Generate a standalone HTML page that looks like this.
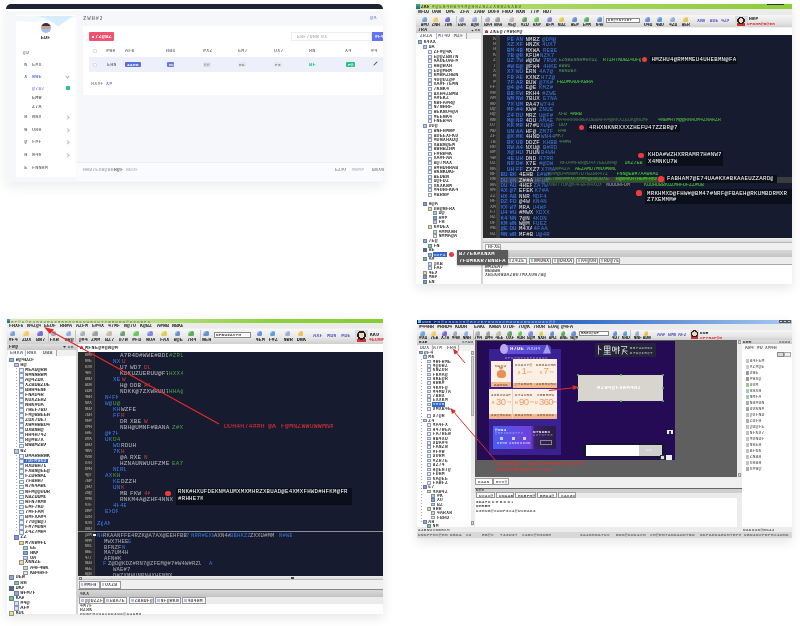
<!DOCTYPE html><html><head><meta charset="utf-8"><style>
html,body{margin:0;padding:0;background:#fff;width:800px;height:626px;overflow:hidden;font-family:"Liberation Sans",sans-serif}
#r{position:relative;width:800px;height:626px;overflow:hidden;will-change:transform}
#r div{position:absolute}
</style></head><body><div id="r">
<div style="left:6px;top:4px;width:377px;height:177.5px;background:#f6f7fb;box-shadow:0 5px 12px rgba(0,0,0,0.07);border-radius:6px 6px 0 0"></div>
<div style="left:6px;top:4px;width:377px;height:5px;background:#1f2433;border-radius:5px 5px 0 0"></div>
<div style="left:6px;top:9px;width:377px;height:1.5px;background:#ffffff"></div>
<div style="left:16px;top:15px;width:60px;height:162px;background:#ffffff"></div>
<svg style="position:absolute;left:16px;top:15.7px" width="60" height="14"><path d="M0 0 L60 0 L60 1 Q30 8 0 5 Z" fill="#f0f8fc"/><path d="M22 0 Q34 3 42 10.5 Q50 5 57 0 Z" fill="#d6ecfa"/></svg>
<div style="left:40.8px;top:23px;width:10px;height:10px;background:linear-gradient(#3a2a48 0 28%,#c8a088 28% 62%,#9cc0ee 62%);border-radius:50%"></div>
<div style="left:40.8px;top:35.55px;width:10.5px;height:5.40px;opacity:0.94;color:#222;font:bold 5.40px/5.40px 'Liberation Mono';letter-spacing:-0.04px;white-space:nowrap;overflow:hidden">EDF</div>
<div style="left:23px;top:50.73px;width:7px;height:4.68px;opacity:0.62;color:#444;font:bold 4.68px/4.68px 'Liberation Mono';letter-spacing:0.49px;white-space:nowrap;overflow:hidden">@D</div>
<div style="left:24.3px;top:62.64px;width:4px;height:5.04px;opacity:0.76;color:#444;font:bold 5.04px/5.04px 'Liberation Mono';letter-spacing:0.08px;white-space:nowrap;overflow:hidden">K</div>
<div style="left:32px;top:62.64px;width:11px;height:5.04px;opacity:0.69;color:#444;font:bold 5.04px/5.04px 'Liberation Mono';letter-spacing:0.18px;white-space:nowrap;overflow:hidden">E#X</div>
<div style="left:24.3px;top:75.14px;width:4px;height:5.04px;opacity:0.96;color:#5a6bd8;font:bold 5.04px/5.04px 'Liberation Mono';letter-spacing:0.08px;white-space:nowrap;overflow:hidden">X</div>
<div style="left:32px;top:75.14px;width:10px;height:5.04px;opacity:0.88;color:#5a6bd8;font:bold 5.04px/5.04px 'Liberation Mono';letter-spacing:0.18px;white-space:nowrap;overflow:hidden">WWE</div>
<div style="left:24.3px;top:115.14px;width:4px;height:5.04px;opacity:0.76;color:#444;font:bold 5.04px/5.04px 'Liberation Mono';letter-spacing:0.08px;white-space:nowrap;overflow:hidden">R</div>
<div style="left:32px;top:115.14px;width:9px;height:5.04px;opacity:0.69;color:#444;font:bold 5.04px/5.04px 'Liberation Mono';letter-spacing:0.18px;white-space:nowrap;overflow:hidden">NWX</div>
<div style="left:66px;top:116px;width:1.8px;height:1.8px;border-right:0.6px solid #bbb;border-bottom:0.6px solid #bbb;transform:rotate(-45deg)"></div>
<div style="left:24.3px;top:127.64px;width:4px;height:5.04px;opacity:0.76;color:#444;font:bold 5.04px/5.04px 'Liberation Mono';letter-spacing:0.08px;white-space:nowrap;overflow:hidden">W</div>
<div style="left:32px;top:127.64px;width:9px;height:5.04px;opacity:0.69;color:#444;font:bold 5.04px/5.04px 'Liberation Mono';letter-spacing:0.18px;white-space:nowrap;overflow:hidden">URH</div>
<div style="left:66px;top:128.5px;width:1.8px;height:1.8px;border-right:0.6px solid #bbb;border-bottom:0.6px solid #bbb;transform:rotate(-45deg)"></div>
<div style="left:24.3px;top:140.14px;width:4px;height:5.04px;opacity:0.76;color:#444;font:bold 5.04px/5.04px 'Liberation Mono';letter-spacing:0.08px;white-space:nowrap;overflow:hidden">@</div>
<div style="left:32px;top:140.14px;width:9px;height:5.04px;opacity:0.69;color:#444;font:bold 5.04px/5.04px 'Liberation Mono';letter-spacing:0.18px;white-space:nowrap;overflow:hidden">F#F</div>
<div style="left:66px;top:141px;width:1.8px;height:1.8px;border-right:0.6px solid #bbb;border-bottom:0.6px solid #bbb;transform:rotate(-45deg)"></div>
<div style="left:24.3px;top:153.14px;width:4px;height:5.04px;opacity:0.76;color:#444;font:bold 5.04px/5.04px 'Liberation Mono';letter-spacing:0.08px;white-space:nowrap;overflow:hidden">H</div>
<div style="left:32px;top:153.14px;width:9px;height:5.04px;opacity:0.69;color:#444;font:bold 5.04px/5.04px 'Liberation Mono';letter-spacing:0.18px;white-space:nowrap;overflow:hidden">W4K</div>
<div style="left:66px;top:154px;width:1.8px;height:1.8px;border-right:0.6px solid #bbb;border-bottom:0.6px solid #bbb;transform:rotate(-45deg)"></div>
<div style="left:24.3px;top:166.14px;width:4px;height:5.04px;opacity:0.76;color:#444;font:bold 5.04px/5.04px 'Liberation Mono';letter-spacing:0.08px;white-space:nowrap;overflow:hidden">E</div>
<div style="left:32px;top:166.14px;width:16px;height:5.04px;opacity:0.69;color:#444;font:bold 5.04px/5.04px 'Liberation Mono';letter-spacing:0.18px;white-space:nowrap;overflow:hidden">FNNHM</div>
<div style="left:66px;top:75.3px;width:2px;height:2px;border-right:0.7px solid #aaa;border-bottom:0.7px solid #aaa;transform:rotate(45deg)"></div>
<div style="left:32px;top:86.64px;width:13px;height:5.04px;opacity:0.75;color:#5a6bd8;font:bold 5.04px/5.04px 'Liberation Mono';letter-spacing:0.18px;white-space:nowrap;overflow:hidden">@7D7</div>
<div style="left:32px;top:95.64px;width:11px;height:5.04px;opacity:0.75;color:#333;font:bold 5.04px/5.04px 'Liberation Mono';letter-spacing:0.18px;white-space:nowrap;overflow:hidden">EMW</div>
<div style="left:32px;top:104.64px;width:11px;height:5.04px;opacity:0.75;color:#333;font:bold 5.04px/5.04px 'Liberation Mono';letter-spacing:0.18px;white-space:nowrap;overflow:hidden">Z7A</div>
<div style="left:66px;top:86px;width:3.5px;height:3.5px;background:#2fc48d;border-radius:0.5px"></div>
<div style="left:83px;top:15.96px;width:19px;height:5.76px;opacity:0.62;color:#333;font:bold 5.76px/5.76px 'Liberation Mono';letter-spacing:0.74px;white-space:nowrap;overflow:hidden">ZWH#Z</div>
<div style="left:370px;top:16.05px;width:9px;height:5.40px;opacity:0.62;color:#4a5bd0;font:bold 5.40px/5.40px 'Liberation Mono';letter-spacing:0.36px;white-space:nowrap;overflow:hidden">@X</div>
<div style="left:83px;top:26px;width:300px;height:69px;background:#ffffff"></div>
<div style="left:89px;top:32px;width:25px;height:9px;background:#f0516e;border-radius:1px"></div>
<div style="left:91.5px;top:35.5px;width:2px;height:2px;background:#fff;opacity:0.9"></div>
<div style="left:95px;top:34.55px;width:17px;height:5.40px;opacity:1.00;color:#fff;font:bold 5.40px/5.40px 'Liberation Mono';letter-spacing:0.16px;white-space:nowrap;overflow:hidden">7Z@BZ</div>
<div style="left:291px;top:32px;width:81px;height:9px;background:#fff;border:0.5px solid #eceef3;box-sizing:border-box"></div>
<div style="left:297px;top:34.73px;width:23px;height:4.68px;opacity:0.62;color:#888;font:bold 4.68px/4.68px 'Liberation Mono';letter-spacing:0.39px;white-space:nowrap;overflow:hidden">ERF7DRW</div>
<div style="left:321px;top:34.73px;width:7px;height:4.68px;opacity:0.50;color:#888;font:bold 4.68px/4.68px 'Liberation Mono';letter-spacing:0.39px;white-space:nowrap;overflow:hidden">WX</div>
<div style="left:372px;top:32px;width:11px;height:9px;background:#6373f2"></div>
<div style="left:375px;top:34.73px;width:9px;height:4.68px;opacity:0.94;color:#fff;font:bold 4.68px/4.68px 'Liberation Mono';letter-spacing:0.19px;white-space:nowrap;overflow:hidden">#F4</div>
<div style="left:93px;top:48.5px;width:4px;height:4px;border:0.5px solid #ddd;border-radius:1px;box-sizing:border-box"></div>
<div style="left:106px;top:48.64px;width:9px;height:5.04px;opacity:0.62;color:#333;font:bold 5.04px/5.04px 'Liberation Mono';letter-spacing:0.18px;white-space:nowrap;overflow:hidden">#WH</div>
<div style="left:125px;top:48.64px;width:9px;height:5.04px;opacity:0.62;color:#333;font:bold 5.04px/5.04px 'Liberation Mono';letter-spacing:0.18px;white-space:nowrap;overflow:hidden">AFB</div>
<div style="left:166px;top:48.64px;width:9px;height:5.04px;opacity:0.62;color:#333;font:bold 5.04px/5.04px 'Liberation Mono';letter-spacing:0.18px;white-space:nowrap;overflow:hidden">HBU</div>
<div style="left:203px;top:48.64px;width:9px;height:5.04px;opacity:0.62;color:#333;font:bold 5.04px/5.04px 'Liberation Mono';letter-spacing:0.18px;white-space:nowrap;overflow:hidden">#XZ</div>
<div style="left:238px;top:48.64px;width:9px;height:5.04px;opacity:0.62;color:#333;font:bold 5.04px/5.04px 'Liberation Mono';letter-spacing:0.18px;white-space:nowrap;overflow:hidden">EM7</div>
<div style="left:274px;top:48.64px;width:9px;height:5.04px;opacity:0.62;color:#333;font:bold 5.04px/5.04px 'Liberation Mono';letter-spacing:0.18px;white-space:nowrap;overflow:hidden">UX7</div>
<div style="left:309px;top:48.64px;width:7px;height:5.04px;opacity:0.62;color:#333;font:bold 5.04px/5.04px 'Liberation Mono';letter-spacing:0.18px;white-space:nowrap;overflow:hidden">RN</div>
<div style="left:345px;top:48.64px;width:7px;height:5.04px;opacity:0.62;color:#333;font:bold 5.04px/5.04px 'Liberation Mono';letter-spacing:0.18px;white-space:nowrap;overflow:hidden">X4</div>
<div style="left:371px;top:48.64px;width:7px;height:5.04px;opacity:0.62;color:#333;font:bold 5.04px/5.04px 'Liberation Mono';letter-spacing:0.18px;white-space:nowrap;overflow:hidden">#4</div>
<div style="left:89px;top:57px;width:294px;height:15px;background:#edf0fa"></div>
<div style="left:93px;top:62.5px;width:4px;height:4px;border:0.5px solid #ddd;background:#fff;border-radius:1px;box-sizing:border-box"></div>
<div style="left:107px;top:62.64px;width:9px;height:5.04px;opacity:0.62;color:#333;font:bold 5.04px/5.04px 'Liberation Mono';letter-spacing:0.18px;white-space:nowrap;overflow:hidden">EHN</div>
<div style="left:125px;top:62px;width:16px;height:5px;background:#5a6de0;border-radius:1px"></div>
<div style="left:127px;top:63.12px;width:13px;height:4.32px;opacity:1.00;color:#fff;font:bold 4.32px/4.32px 'Liberation Mono';letter-spacing:0.41px;white-space:nowrap;overflow:hidden">4AHD</div>
<div style="left:167px;top:62px;width:7px;height:5px;background:#6a78e6;border-radius:1px"></div>
<div style="left:168.5px;top:63.12px;width:5px;height:4.32px;opacity:0.75;color:#fff;font:bold 4.32px/4.32px 'Liberation Mono';letter-spacing:-0.19px;white-space:nowrap;overflow:hidden">BD</div>
<div style="left:203px;top:62px;width:8px;height:5px;background:#e6e8ec"></div>
<div style="left:204px;top:63.12px;width:7px;height:4.32px;opacity:0.75;color:#666;font:bold 4.32px/4.32px 'Liberation Mono';letter-spacing:0.41px;white-space:nowrap;overflow:hidden">@@</div>
<div style="left:238px;top:62px;width:8px;height:5px;background:#e6e8ec"></div>
<div style="left:239px;top:63.12px;width:7px;height:4.32px;opacity:0.75;color:#666;font:bold 4.32px/4.32px 'Liberation Mono';letter-spacing:0.41px;white-space:nowrap;overflow:hidden">HK</div>
<div style="left:274px;top:62px;width:8px;height:5px;background:#e6e8ec"></div>
<div style="left:275px;top:63.12px;width:7px;height:4.32px;opacity:0.75;color:#666;font:bold 4.32px/4.32px 'Liberation Mono';letter-spacing:0.41px;white-space:nowrap;overflow:hidden">FZ</div>
<div style="left:309px;top:62.55px;width:8px;height:5.40px;opacity:1.00;color:#22c081;font:bold 5.40px/5.40px 'Liberation Mono';letter-spacing:0.16px;white-space:nowrap;overflow:hidden">BF</div>
<div style="left:346px;top:62px;width:9px;height:5px;background:#27c08b;border-radius:1px"></div>
<div style="left:348px;top:63.12px;width:6px;height:4.32px;opacity:1.00;color:#fff;font:bold 4.32px/4.32px 'Liberation Mono';letter-spacing:0.21px;white-space:nowrap;overflow:hidden">F@</div>
<div style="left:374.5px;top:61px;width:1px;height:5px;background:#444;transform:rotate(45deg)"></div>
<div style="left:91px;top:81.64px;width:12px;height:5.04px;opacity:0.62;color:#555;font:bold 5.04px/5.04px 'Liberation Mono';letter-spacing:0.18px;white-space:nowrap;overflow:hidden">HX#F</div>
<div style="left:106px;top:81.64px;width:7px;height:5.04px;opacity:0.75;color:#4a5bd0;font:bold 5.04px/5.04px 'Liberation Mono';letter-spacing:0.18px;white-space:nowrap;overflow:hidden">X#</div>
<div style="left:76px;top:162px;width:307px;height:19px;background:#fafbfe"></div>
<div style="left:76px;top:162px;width:307px;height:0.6px;background:#eceef4"></div>
<div style="left:83px;top:167.73px;width:31px;height:4.68px;opacity:0.50;color:#666;font:bold 4.68px/4.68px 'Liberation Mono';letter-spacing:0.29px;white-space:nowrap;overflow:hidden">HWD7EXW@BH</div>
<div style="left:114px;top:167.73px;width:10px;height:4.68px;opacity:0.75;color:#333;font:bold 4.68px/4.68px 'Liberation Mono';letter-spacing:0.29px;white-space:nowrap;overflow:hidden">R@F</div>
<div style="left:126px;top:167.73px;width:13px;height:4.68px;opacity:0.50;color:#888;font:bold 4.68px/4.68px 'Liberation Mono';letter-spacing:0.29px;white-space:nowrap;overflow:hidden">NBUF</div>
<div style="left:335px;top:167.73px;width:11px;height:4.68px;opacity:0.62;color:#555;font:bold 4.68px/4.68px 'Liberation Mono';letter-spacing:0.29px;white-space:nowrap;overflow:hidden">EZ#X</div>
<div style="left:352px;top:167.73px;width:13px;height:4.68px;opacity:0.50;color:#888;font:bold 4.68px/4.68px 'Liberation Mono';letter-spacing:0.29px;white-space:nowrap;overflow:hidden">MNM#</div>
<div style="left:372px;top:167.73px;width:12px;height:4.68px;opacity:0.62;color:#555;font:bold 4.68px/4.68px 'Liberation Mono';letter-spacing:0.29px;white-space:nowrap;overflow:hidden">BNXW</div>
<div style="left:416px;top:3.5px;width:376px;height:280.5px;background:#f0f0f0;box-shadow:0 4px 12px rgba(0,0,0,0.10);border-radius:3px 3px 2px 2px"></div>
<div style="left:416px;top:3.5px;width:376px;height:5.5px;background:linear-gradient(90deg,#b9dc78 0%,#a6d65a 40%,#8dcc3a 100%)"></div>
<div style="left:416px;top:3.5px;width:4px;height:5.5px;background:linear-gradient(#4aa3a8,#1c6c74)"></div>
<div style="left:421px;top:4.78px;width:8px;height:4.50px;opacity:1.00;color:#222;font:bold 4.50px/4.50px 'Liberation Mono';letter-spacing:0.30px;white-space:nowrap;overflow:hidden">ZKR</div>
<div style="left:432px;top:4.78px;width:91px;height:4.50px;opacity:0.56;color:#2a3a10;font:bold 4.50px/4.50px 'Liberation Mono';letter-spacing:0.90px;white-space:nowrap;overflow:hidden">#@EN4HB44M@HRZWZZXNWZKXBU</div>
<div style="left:767px;top:3.5px;width:17px;height:1.3px;background:#2a3a2a"></div>
<div style="left:416px;top:9px;width:376px;height:6px;background:#ebebeb"></div>
<div style="left:418px;top:10.44px;width:11px;height:5.04px;opacity:0.94;color:#111;font:bold 5.04px/5.04px 'Liberation Mono';letter-spacing:-0.02px;white-space:nowrap;overflow:hidden">WFDZ</div>
<div style="left:432px;top:10.44px;width:10px;height:5.04px;opacity:0.94;color:#111;font:bold 5.04px/5.04px 'Liberation Mono';letter-spacing:-0.02px;white-space:nowrap;overflow:hidden">UAW</div>
<div style="left:446px;top:10.44px;width:10px;height:5.04px;opacity:0.94;color:#111;font:bold 5.04px/5.04px 'Liberation Mono';letter-spacing:-0.02px;white-space:nowrap;overflow:hidden">D#E</div>
<div style="left:460px;top:10.44px;width:10px;height:5.04px;opacity:0.94;color:#111;font:bold 5.04px/5.04px 'Liberation Mono';letter-spacing:-0.02px;white-space:nowrap;overflow:hidden">ZFA</div>
<div style="left:474px;top:10.44px;width:11px;height:5.04px;opacity:0.94;color:#111;font:bold 5.04px/5.04px 'Liberation Mono';letter-spacing:-0.02px;white-space:nowrap;overflow:hidden">ZAHA</div>
<div style="left:488px;top:10.44px;width:11px;height:5.04px;opacity:0.94;color:#111;font:bold 5.04px/5.04px 'Liberation Mono';letter-spacing:-0.02px;white-space:nowrap;overflow:hidden">DUFW</div>
<div style="left:502px;top:10.44px;width:11px;height:5.04px;opacity:0.94;color:#111;font:bold 5.04px/5.04px 'Liberation Mono';letter-spacing:-0.02px;white-space:nowrap;overflow:hidden">FWXX</div>
<div style="left:516px;top:10.44px;width:10px;height:5.04px;opacity:0.94;color:#111;font:bold 5.04px/5.04px 'Liberation Mono';letter-spacing:-0.02px;white-space:nowrap;overflow:hidden">NXN</div>
<div style="left:530px;top:10.44px;width:10px;height:5.04px;opacity:0.94;color:#111;font:bold 5.04px/5.04px 'Liberation Mono';letter-spacing:-0.02px;white-space:nowrap;overflow:hidden">77#</div>
<div style="left:543px;top:10.44px;width:9px;height:5.04px;opacity:0.94;color:#111;font:bold 5.04px/5.04px 'Liberation Mono';letter-spacing:-0.02px;white-space:nowrap;overflow:hidden">HD7</div>
<div style="left:416px;top:15px;width:376px;height:12px;background:linear-gradient(#f7f7f7,#e2e2e2 70%,#d0d0d0)"></div>
<div style="left:421.5px;top:16.8px;width:5px;height:5px;background:linear-gradient(135deg,#fff 0%,#5b8fd6 45%,#5b8fd6 100%);opacity:0.8;border-radius:1.5px"></div>
<div style="left:420.5px;top:22.68px;width:8px;height:4.86px;opacity:0.94;color:#111;font:bold 4.86px/4.86px 'Liberation Mono';letter-spacing:-0.12px;white-space:nowrap;overflow:hidden">W#U</div>
<div style="left:432.5px;top:16.8px;width:5px;height:5px;background:linear-gradient(135deg,#fff 0%,#f2c14e 45%,#f2c14e 100%);opacity:0.8;border-radius:1.5px"></div>
<div style="left:431.5px;top:22.68px;width:8px;height:4.86px;opacity:0.94;color:#111;font:bold 4.86px/4.86px 'Liberation Mono';letter-spacing:-0.12px;white-space:nowrap;overflow:hidden">ZNH</div>
<div style="left:445.0px;top:16.8px;width:5px;height:5px;background:linear-gradient(135deg,#fff 0%,#5a4fc0 45%,#5a4fc0 100%);opacity:0.8;border-radius:1.5px"></div>
<div style="left:444.0px;top:22.68px;width:8px;height:4.86px;opacity:0.94;color:#111;font:bold 4.86px/4.86px 'Liberation Mono';letter-spacing:-0.12px;white-space:nowrap;overflow:hidden">7WK</div>
<div style="left:458.5px;top:16.8px;width:5px;height:5px;background:linear-gradient(135deg,#fff 0%,#8a9ab8 45%,#8a9ab8 100%);opacity:0.8;border-radius:1.5px"></div>
<div style="left:457.5px;top:22.68px;width:8px;height:4.86px;opacity:0.94;color:#111;font:bold 4.86px/4.86px 'Liberation Mono';letter-spacing:-0.12px;white-space:nowrap;overflow:hidden">EB4</div>
<div style="left:471.5px;top:16.8px;width:5px;height:5px;background:linear-gradient(135deg,#fff 0%,#7aa0d8 45%,#7aa0d8 100%);opacity:0.8;border-radius:1.5px"></div>
<div style="left:470.5px;top:22.68px;width:8px;height:4.86px;opacity:0.94;color:#111;font:bold 4.86px/4.86px 'Liberation Mono';letter-spacing:-0.12px;white-space:nowrap;overflow:hidden">B@W</div>
<div style="left:485.0px;top:16.8px;width:5px;height:5px;background:linear-gradient(135deg,#fff 0%,#9aa0a8 45%,#9aa0a8 100%);opacity:0.8;border-radius:1.5px"></div>
<div style="left:484.0px;top:22.68px;width:8px;height:4.86px;opacity:0.94;color:#111;font:bold 4.86px/4.86px 'Liberation Mono';letter-spacing:-0.12px;white-space:nowrap;overflow:hidden">BA4</div>
<div style="left:495.0px;top:16.8px;width:5px;height:5px;background:linear-gradient(135deg,#fff 0%,#8c8c8c 45%,#8c8c8c 100%);opacity:0.8;border-radius:1.5px"></div>
<div style="left:494.0px;top:22.68px;width:8px;height:4.86px;opacity:0.94;color:#111;font:bold 4.86px/4.86px 'Liberation Mono';letter-spacing:-0.12px;white-space:nowrap;overflow:hidden">WAR</div>
<div style="left:508.5px;top:16.8px;width:5px;height:5px;background:linear-gradient(135deg,#fff 0%,#b9b39a 45%,#b9b39a 100%);opacity:0.8;border-radius:1.5px"></div>
<div style="left:507.5px;top:22.68px;width:8px;height:4.86px;opacity:0.94;color:#111;font:bold 4.86px/4.86px 'Liberation Mono';letter-spacing:-0.12px;white-space:nowrap;overflow:hidden">#E@</div>
<div style="left:521.5px;top:16.8px;width:5px;height:5px;background:linear-gradient(135deg,#fff 0%,#4c8a4c 45%,#4c8a4c 100%);opacity:0.8;border-radius:1.5px"></div>
<div style="left:520.5px;top:22.68px;width:8px;height:4.86px;opacity:0.94;color:#111;font:bold 4.86px/4.86px 'Liberation Mono';letter-spacing:-0.12px;white-space:nowrap;overflow:hidden">#ZD</div>
<div style="left:533.5px;top:16.8px;width:5px;height:5px;background:linear-gradient(135deg,#fff 0%,#4dbd3a 45%,#4dbd3a 100%);opacity:0.8;border-radius:1.5px"></div>
<div style="left:532.5px;top:22.68px;width:8px;height:4.86px;opacity:0.94;color:#111;font:bold 4.86px/4.86px 'Liberation Mono';letter-spacing:-0.12px;white-space:nowrap;overflow:hidden">RX#</div>
<div style="left:546.5px;top:16.8px;width:5px;height:5px;background:linear-gradient(135deg,#fff 0%,#6a6fd8 45%,#6a6fd8 100%);opacity:0.8;border-radius:1.5px"></div>
<div style="left:545.5px;top:22.68px;width:8px;height:4.86px;opacity:0.94;color:#111;font:bold 4.86px/4.86px 'Liberation Mono';letter-spacing:-0.12px;white-space:nowrap;overflow:hidden">BFM</div>
<div style="left:558.5px;top:16.8px;width:5px;height:5px;background:linear-gradient(135deg,#fff 0%,#d8c832 45%,#d8c832 100%);opacity:0.8;border-radius:1.5px"></div>
<div style="left:557.5px;top:22.68px;width:8px;height:4.86px;opacity:0.94;color:#111;font:bold 4.86px/4.86px 'Liberation Mono';letter-spacing:-0.12px;white-space:nowrap;overflow:hidden">KDZ</div>
<div style="left:571.5px;top:16.8px;width:5px;height:5px;background:linear-gradient(135deg,#fff 0%,#4a78c8 45%,#4a78c8 100%);opacity:0.8;border-radius:1.5px"></div>
<div style="left:570.5px;top:22.68px;width:8px;height:4.86px;opacity:0.94;color:#111;font:bold 4.86px/4.86px 'Liberation Mono';letter-spacing:-0.12px;white-space:nowrap;overflow:hidden">WE#</div>
<div style="left:583.5px;top:16.8px;width:5px;height:5px;background:linear-gradient(135deg,#fff 0%,#3a9a3a 45%,#3a9a3a 100%);opacity:0.8;border-radius:1.5px"></div>
<div style="left:582.5px;top:22.68px;width:8px;height:4.86px;opacity:0.94;color:#111;font:bold 4.86px/4.86px 'Liberation Mono';letter-spacing:-0.12px;white-space:nowrap;overflow:hidden">E#M</div>
<div style="left:596.5px;top:16.8px;width:5px;height:5px;background:linear-gradient(135deg,#fff 0%,#4a78c8 45%,#4a78c8 100%);opacity:0.8;border-radius:1.5px"></div>
<div style="left:595.5px;top:22.68px;width:8px;height:4.86px;opacity:0.94;color:#111;font:bold 4.86px/4.86px 'Liberation Mono';letter-spacing:-0.12px;white-space:nowrap;overflow:hidden">K4W</div>
<div style="left:645.0px;top:16.8px;width:5px;height:5px;background:linear-gradient(135deg,#fff 0%,#4a78d8 45%,#4a78d8 100%);opacity:0.8;border-radius:1.5px"></div>
<div style="left:644.0px;top:22.68px;width:8px;height:4.86px;opacity:0.94;color:#111;font:bold 4.86px/4.86px 'Liberation Mono';letter-spacing:-0.12px;white-space:nowrap;overflow:hidden">U4D</div>
<div style="left:656.5px;top:16.8px;width:5px;height:5px;background:linear-gradient(135deg,#fff 0%,#3a88d8 45%,#3a88d8 100%);opacity:0.8;border-radius:1.5px"></div>
<div style="left:655.5px;top:22.68px;width:8px;height:4.86px;opacity:0.94;color:#111;font:bold 4.86px/4.86px 'Liberation Mono';letter-spacing:-0.12px;white-space:nowrap;overflow:hidden">4BU</div>
<div style="left:670.0px;top:16.8px;width:5px;height:5px;background:linear-gradient(135deg,#fff 0%,#8aa0c0 45%,#8aa0c0 100%);opacity:0.8;border-radius:1.5px"></div>
<div style="left:669.0px;top:22.68px;width:8px;height:4.86px;opacity:0.94;color:#111;font:bold 4.86px/4.86px 'Liberation Mono';letter-spacing:-0.12px;white-space:nowrap;overflow:hidden">4ZD</div>
<div style="left:682.5px;top:16.8px;width:5px;height:5px;background:linear-gradient(135deg,#fff 0%,#e8b832 45%,#e8b832 100%);opacity:0.8;border-radius:1.5px"></div>
<div style="left:681.5px;top:22.68px;width:8px;height:4.86px;opacity:0.94;color:#111;font:bold 4.86px/4.86px 'Liberation Mono';letter-spacing:-0.12px;white-space:nowrap;overflow:hidden">WER</div>
<div style="left:456px;top:16px;width:0.8px;height:10px;background:#c4c4c4"></div>
<div style="left:481px;top:16px;width:0.8px;height:10px;background:#c4c4c4"></div>
<div style="left:603px;top:16px;width:0.8px;height:10px;background:#c4c4c4"></div>
<div style="left:606px;top:17.5px;width:34px;height:5px;background:#fff;border:0.6px solid #888;box-sizing:border-box"></div>
<div style="left:608px;top:19.00px;width:25px;height:3.60px;opacity:0.88;color:#222;font:bold 3.60px/3.60px 'Liberation Mono';letter-spacing:0.54px;white-space:nowrap;overflow:hidden">KH@7N7XE7</div>
<div style="left:697px;top:18.64px;width:8px;height:5.04px;opacity:0.75;color:#2a2ab8;font:bold 5.04px/5.04px 'Liberation Mono';letter-spacing:-0.02px;white-space:nowrap;overflow:hidden">XNW</div>
<div style="left:709.5px;top:18.64px;width:8px;height:5.04px;opacity:0.75;color:#2a2ab8;font:bold 5.04px/5.04px 'Liberation Mono';letter-spacing:-0.02px;white-space:nowrap;overflow:hidden">BUE</div>
<div style="left:721px;top:18.64px;width:8px;height:5.04px;opacity:0.75;color:#2a2ab8;font:bold 5.04px/5.04px 'Liberation Mono';letter-spacing:-0.02px;white-space:nowrap;overflow:hidden">4ZM</div>
<div style="left:734.5px;top:16px;width:13px;height:11px;background:#d8dbe0"></div>
<div style="left:737px;top:17px;width:8px;height:9px;background:radial-gradient(circle at 50% 40%,#f2d6c0 0 35%,#222 36% 55%,transparent 56%),linear-gradient(transparent 70%,#d03030 70%)"></div>
<div style="left:749px;top:16.73px;width:10px;height:4.68px;opacity:1.00;color:#111;font:bold 4.68px/4.68px 'Liberation Mono';letter-spacing:0.29px;white-space:nowrap;overflow:hidden">HW#</div>
<div style="left:747px;top:21.82px;width:29px;height:4.32px;opacity:1.00;color:#e02828;font:bold 4.32px/4.32px 'Liberation Mono';letter-spacing:0.21px;white-space:nowrap;overflow:hidden">UFDMR@B@EH</div>
<div style="left:416px;top:27px;width:65px;height:6px;background:linear-gradient(#e0e0e0,#c8c8c8)"></div>
<div style="left:418px;top:28.23px;width:10px;height:4.68px;opacity:0.94;color:#111;font:bold 4.68px/4.68px 'Liberation Mono';letter-spacing:0.29px;white-space:nowrap;overflow:hidden">7RA</div>
<div style="left:471px;top:29.5px;width:3px;height:2px;background:#333;clip-path:polygon(0 0,100% 0,50% 100%)"></div>
<div style="left:475px;top:28.32px;width:7px;height:4.32px;opacity:0.75;color:#333;font:bold 4.32px/4.32px 'Liberation Mono';letter-spacing:0.21px;white-space:nowrap;overflow:hidden">ED</div>
<div style="left:416px;top:33px;width:65px;height:6px;background:#f0f0f0"></div>
<div style="left:417px;top:33px;width:19px;height:6px;background:#fff"></div>
<div style="left:436px;top:33px;width:15px;height:6px;background:#fff;border-left:0.5px solid #bbb;border-right:0.5px solid #bbb"></div>
<div style="left:452px;top:33px;width:14px;height:6px;background:#f5f5f5;border-right:0.5px solid #aaa"></div>
<div style="left:420px;top:34.23px;width:13px;height:4.68px;opacity:0.75;color:#234;font:bold 4.68px/4.68px 'Liberation Mono';letter-spacing:0.29px;white-space:nowrap;overflow:hidden">ZRZA</div>
<div style="left:438px;top:34.23px;width:12px;height:4.68px;opacity:0.75;color:#235;font:bold 4.68px/4.68px 'Liberation Mono';letter-spacing:0.29px;white-space:nowrap;overflow:hidden">M74U</div>
<div style="left:454px;top:34.23px;width:11px;height:4.68px;opacity:0.75;color:#333;font:bold 4.68px/4.68px 'Liberation Mono';letter-spacing:0.29px;white-space:nowrap;overflow:hidden">MZF</div>
<div style="left:416px;top:39px;width:65px;height:245px;background:#fff"></div>
<div style="left:481px;top:27px;width:2px;height:257px;background:#d4d4d4"></div>
<div style="left:417.5px;top:40.2px;width:4.5px;height:4.05px;background:#7fa0d8;opacity:0.8;border:0.5px solid rgba(40,60,120,0.6);box-sizing:border-box"></div>
<div style="left:423.5px;top:40.14px;width:12px;height:5.04px;opacity:0.85;color:#111;font:bold 5.04px/5.04px 'Liberation Mono';letter-spacing:0.08px;white-space:nowrap;overflow:hidden">K4XX</div>
<div style="left:422.5px;top:45.2px;width:4.5px;height:4.05px;background:#aabde0;opacity:0.8;border:0.5px solid rgba(40,60,120,0.6);box-sizing:border-box"></div>
<div style="left:428.5px;top:45.14px;width:6px;height:5.04px;opacity:0.85;color:#111;font:bold 5.04px/5.04px 'Liberation Mono';letter-spacing:0.08px;white-space:nowrap;overflow:hidden">DA</div>
<div style="left:427.5px;top:50.2px;width:4.5px;height:4.05px;background:#e8eef8;opacity:0.8;border:0.5px solid rgba(40,60,120,0.6);box-sizing:border-box"></div>
<div style="left:433.5px;top:50.14px;width:18px;height:5.04px;opacity:0.85;color:#111;font:bold 5.04px/5.04px 'Liberation Mono';letter-spacing:0.08px;white-space:nowrap;overflow:hidden">ZF#@4K</div>
<div style="left:427.5px;top:54.800000000000004px;width:4.5px;height:4.05px;background:#e8eef8;opacity:0.8;border:0.5px solid rgba(40,60,120,0.6);box-sizing:border-box"></div>
<div style="left:433.5px;top:54.74px;width:24px;height:5.04px;opacity:0.85;color:#111;font:bold 5.04px/5.04px 'Liberation Mono';letter-spacing:0.08px;white-space:nowrap;overflow:hidden">E@@ZBN7N</div>
<div style="left:427.5px;top:59.400000000000006px;width:4.5px;height:4.05px;background:#e8eef8;opacity:0.8;border:0.5px solid rgba(40,60,120,0.6);box-sizing:border-box"></div>
<div style="left:433.5px;top:59.34px;width:24px;height:5.04px;opacity:0.85;color:#111;font:bold 5.04px/5.04px 'Liberation Mono';letter-spacing:0.08px;white-space:nowrap;overflow:hidden">AAUEUAF#</div>
<div style="left:427.5px;top:64.0px;width:4.5px;height:4.05px;background:#e8eef8;opacity:0.8;border:0.5px solid rgba(40,60,120,0.6);box-sizing:border-box"></div>
<div style="left:433.5px;top:63.94px;width:18px;height:5.04px;opacity:0.85;color:#111;font:bold 5.04px/5.04px 'Liberation Mono';letter-spacing:0.08px;white-space:nowrap;overflow:hidden">HH@WXH</div>
<div style="left:427.5px;top:68.60000000000001px;width:4.5px;height:4.05px;background:#e8eef8;opacity:0.8;border:0.5px solid rgba(40,60,120,0.6);box-sizing:border-box"></div>
<div style="left:433.5px;top:68.54px;width:20px;height:5.04px;opacity:0.85;color:#111;font:bold 5.04px/5.04px 'Liberation Mono';letter-spacing:0.08px;white-space:nowrap;overflow:hidden">EU@MRM</div>
<div style="left:427.5px;top:73.2px;width:4.5px;height:4.05px;background:#e8eef8;opacity:0.8;border:0.5px solid rgba(40,60,120,0.6);box-sizing:border-box"></div>
<div style="left:433.5px;top:73.14px;width:24px;height:5.04px;opacity:0.85;color:#111;font:bold 5.04px/5.04px 'Liberation Mono';letter-spacing:0.08px;white-space:nowrap;overflow:hidden">KMWAZHBN</div>
<div style="left:427.5px;top:77.8px;width:4.5px;height:4.05px;background:#e8eef8;opacity:0.8;border:0.5px solid rgba(40,60,120,0.6);box-sizing:border-box"></div>
<div style="left:433.5px;top:77.74px;width:22px;height:5.04px;opacity:0.85;color:#111;font:bold 5.04px/5.04px 'Liberation Mono';letter-spacing:0.08px;white-space:nowrap;overflow:hidden">4U@UZ@#</div>
<div style="left:427.5px;top:82.39999999999999px;width:4.5px;height:4.05px;background:#e8eef8;opacity:0.8;border:0.5px solid rgba(40,60,120,0.6);box-sizing:border-box"></div>
<div style="left:433.5px;top:82.34px;width:24px;height:5.04px;opacity:0.85;color:#111;font:bold 5.04px/5.04px 'Liberation Mono';letter-spacing:0.08px;white-space:nowrap;overflow:hidden">XA#F7EMN</div>
<div style="left:427.5px;top:87.0px;width:4.5px;height:4.05px;background:#e8eef8;opacity:0.8;border:0.5px solid rgba(40,60,120,0.6);box-sizing:border-box"></div>
<div style="left:433.5px;top:86.94px;width:16px;height:5.04px;opacity:0.85;color:#111;font:bold 5.04px/5.04px 'Liberation Mono';letter-spacing:0.08px;white-space:nowrap;overflow:hidden">7KNK4</div>
<div style="left:427.5px;top:91.60000000000001px;width:4.5px;height:4.05px;background:#e8eef8;opacity:0.8;border:0.5px solid rgba(40,60,120,0.6);box-sizing:border-box"></div>
<div style="left:433.5px;top:91.54px;width:24px;height:5.04px;opacity:0.85;color:#111;font:bold 5.04px/5.04px 'Liberation Mono';letter-spacing:0.08px;white-space:nowrap;overflow:hidden">BXH4ZBMB</div>
<div style="left:427.5px;top:96.2px;width:4.5px;height:4.05px;background:#e8eef8;opacity:0.8;border:0.5px solid rgba(40,60,120,0.6);box-sizing:border-box"></div>
<div style="left:433.5px;top:96.14px;width:16px;height:5.04px;opacity:0.85;color:#111;font:bold 5.04px/5.04px 'Liberation Mono';letter-spacing:0.08px;white-space:nowrap;overflow:hidden">A#EKZ</div>
<div style="left:427.5px;top:100.8px;width:4.5px;height:4.05px;background:#e8eef8;opacity:0.8;border:0.5px solid rgba(40,60,120,0.6);box-sizing:border-box"></div>
<div style="left:433.5px;top:100.74px;width:22px;height:5.04px;opacity:0.85;color:#111;font:bold 5.04px/5.04px 'Liberation Mono';letter-spacing:0.08px;white-space:nowrap;overflow:hidden">KWFA#R@</div>
<div style="left:427.5px;top:105.39999999999999px;width:4.5px;height:4.05px;background:#e8eef8;opacity:0.8;border:0.5px solid rgba(40,60,120,0.6);box-sizing:border-box"></div>
<div style="left:433.5px;top:105.34px;width:20px;height:5.04px;opacity:0.85;color:#111;font:bold 5.04px/5.04px 'Liberation Mono';letter-spacing:0.08px;white-space:nowrap;overflow:hidden">N7NHRF</div>
<div style="left:427.5px;top:110.0px;width:4.5px;height:4.05px;background:#e8eef8;opacity:0.8;border:0.5px solid rgba(40,60,120,0.6);box-sizing:border-box"></div>
<div style="left:433.5px;top:109.94px;width:24px;height:5.04px;opacity:0.85;color:#111;font:bold 5.04px/5.04px 'Liberation Mono';letter-spacing:0.08px;white-space:nowrap;overflow:hidden">WEKNU4@A</div>
<div style="left:427.5px;top:114.6px;width:4.5px;height:4.05px;background:#e8eef8;opacity:0.8;border:0.5px solid rgba(40,60,120,0.6);box-sizing:border-box"></div>
<div style="left:433.5px;top:114.54px;width:18px;height:5.04px;opacity:0.85;color:#111;font:bold 5.04px/5.04px 'Liberation Mono';letter-spacing:0.08px;white-space:nowrap;overflow:hidden">#EENK4</div>
<div style="left:427.5px;top:119.2px;width:4.5px;height:4.05px;background:#e8eef8;opacity:0.8;border:0.5px solid rgba(40,60,120,0.6);box-sizing:border-box"></div>
<div style="left:433.5px;top:119.14px;width:18px;height:5.04px;opacity:0.85;color:#111;font:bold 5.04px/5.04px 'Liberation Mono';letter-spacing:0.08px;white-space:nowrap;overflow:hidden">FNEB4A</div>
<div style="left:422.5px;top:124.2px;width:4.5px;height:4.05px;background:#aabde0;opacity:0.8;border:0.5px solid rgba(40,60,120,0.6);box-sizing:border-box"></div>
<div style="left:428.5px;top:124.14px;width:9px;height:5.04px;opacity:0.85;color:#111;font:bold 5.04px/5.04px 'Liberation Mono';letter-spacing:0.08px;white-space:nowrap;overflow:hidden">UU@</div>
<div style="left:427.5px;top:129.2px;width:4.5px;height:4.05px;background:#e8eef8;opacity:0.8;border:0.5px solid rgba(40,60,120,0.6);box-sizing:border-box"></div>
<div style="left:433.5px;top:129.14px;width:22px;height:5.04px;opacity:0.85;color:#111;font:bold 5.04px/5.04px 'Liberation Mono';letter-spacing:0.08px;white-space:nowrap;overflow:hidden">WNFHMW#</div>
<div style="left:427.5px;top:133.75px;width:4.5px;height:4.05px;background:#e8eef8;opacity:0.8;border:0.5px solid rgba(40,60,120,0.6);box-sizing:border-box"></div>
<div style="left:433.5px;top:133.69px;width:24px;height:5.04px;opacity:0.85;color:#111;font:bold 5.04px/5.04px 'Liberation Mono';letter-spacing:0.08px;white-space:nowrap;overflow:hidden">BUEEXFKU</div>
<div style="left:427.5px;top:138.29999999999998px;width:4.5px;height:4.05px;background:#e8eef8;opacity:0.8;border:0.5px solid rgba(40,60,120,0.6);box-sizing:border-box"></div>
<div style="left:433.5px;top:138.24px;width:24px;height:5.04px;opacity:0.85;color:#111;font:bold 5.04px/5.04px 'Liberation Mono';letter-spacing:0.08px;white-space:nowrap;overflow:hidden">MUNXHXD@</div>
<div style="left:427.5px;top:142.85px;width:4.5px;height:4.05px;background:#e8eef8;opacity:0.8;border:0.5px solid rgba(40,60,120,0.6);box-sizing:border-box"></div>
<div style="left:433.5px;top:142.79px;width:22px;height:5.04px;opacity:0.85;color:#111;font:bold 5.04px/5.04px 'Liberation Mono';letter-spacing:0.08px;white-space:nowrap;overflow:hidden">XBBN@EM</div>
<div style="left:427.5px;top:147.39999999999998px;width:4.5px;height:4.05px;background:#e8eef8;opacity:0.8;border:0.5px solid rgba(40,60,120,0.6);box-sizing:border-box"></div>
<div style="left:433.5px;top:147.34px;width:22px;height:5.04px;opacity:0.85;color:#111;font:bold 5.04px/5.04px 'Liberation Mono';letter-spacing:0.08px;white-space:nowrap;overflow:hidden">BWHBZHM</div>
<div style="left:427.5px;top:151.95px;width:4.5px;height:4.05px;background:#e8eef8;opacity:0.8;border:0.5px solid rgba(40,60,120,0.6);box-sizing:border-box"></div>
<div style="left:433.5px;top:151.89px;width:18px;height:5.04px;opacity:0.85;color:#111;font:bold 5.04px/5.04px 'Liberation Mono';letter-spacing:0.08px;white-space:nowrap;overflow:hidden">F#RW4K</div>
<div style="left:427.5px;top:156.5px;width:4.5px;height:4.05px;background:#e8eef8;opacity:0.8;border:0.5px solid rgba(40,60,120,0.6);box-sizing:border-box"></div>
<div style="left:433.5px;top:156.44px;width:18px;height:5.04px;opacity:0.85;color:#111;font:bold 5.04px/5.04px 'Liberation Mono';letter-spacing:0.08px;white-space:nowrap;overflow:hidden">XA#FAA</div>
<div style="left:427.5px;top:161.04999999999998px;width:4.5px;height:4.05px;background:#e8eef8;opacity:0.8;border:0.5px solid rgba(40,60,120,0.6);box-sizing:border-box"></div>
<div style="left:433.5px;top:160.99px;width:18px;height:5.04px;opacity:0.85;color:#111;font:bold 5.04px/5.04px 'Liberation Mono';letter-spacing:0.08px;white-space:nowrap;overflow:hidden">B@7MXX</div>
<div style="left:427.5px;top:165.6px;width:4.5px;height:4.05px;background:#e8eef8;opacity:0.8;border:0.5px solid rgba(40,60,120,0.6);box-sizing:border-box"></div>
<div style="left:433.5px;top:165.54px;width:24px;height:5.04px;opacity:0.85;color:#111;font:bold 5.04px/5.04px 'Liberation Mono';letter-spacing:0.08px;white-space:nowrap;overflow:hidden">R#HDHRAB</div>
<div style="left:427.5px;top:170.14999999999998px;width:4.5px;height:4.05px;background:#e8eef8;opacity:0.8;border:0.5px solid rgba(40,60,120,0.6);box-sizing:border-box"></div>
<div style="left:433.5px;top:170.09px;width:22px;height:5.04px;opacity:0.85;color:#111;font:bold 5.04px/5.04px 'Liberation Mono';letter-spacing:0.08px;white-space:nowrap;overflow:hidden">RKNKDKF</div>
<div style="left:427.5px;top:174.7px;width:4.5px;height:4.05px;background:#e8eef8;opacity:0.8;border:0.5px solid rgba(40,60,120,0.6);box-sizing:border-box"></div>
<div style="left:433.5px;top:174.64px;width:16px;height:5.04px;opacity:0.85;color:#111;font:bold 5.04px/5.04px 'Liberation Mono';letter-spacing:0.08px;white-space:nowrap;overflow:hidden">BEDBN</div>
<div style="left:427.5px;top:179.25px;width:4.5px;height:4.05px;background:#e8eef8;opacity:0.8;border:0.5px solid rgba(40,60,120,0.6);box-sizing:border-box"></div>
<div style="left:433.5px;top:179.19px;width:16px;height:5.04px;opacity:0.85;color:#111;font:bold 5.04px/5.04px 'Liberation Mono';letter-spacing:0.08px;white-space:nowrap;overflow:hidden">D@FDZ</div>
<div style="left:427.5px;top:183.79999999999998px;width:4.5px;height:4.05px;background:#e8eef8;opacity:0.8;border:0.5px solid rgba(40,60,120,0.6);box-sizing:border-box"></div>
<div style="left:433.5px;top:183.74px;width:18px;height:5.04px;opacity:0.85;color:#111;font:bold 5.04px/5.04px 'Liberation Mono';letter-spacing:0.08px;white-space:nowrap;overflow:hidden">XKXKWM</div>
<div style="left:427.5px;top:188.35px;width:4.5px;height:4.05px;background:#e8eef8;opacity:0.8;border:0.5px solid rgba(40,60,120,0.6);box-sizing:border-box"></div>
<div style="left:433.5px;top:188.29px;width:24px;height:5.04px;opacity:0.85;color:#111;font:bold 5.04px/5.04px 'Liberation Mono';letter-spacing:0.08px;white-space:nowrap;overflow:hidden">M4UHFKK4</div>
<div style="left:427.5px;top:192.89999999999998px;width:4.5px;height:4.05px;background:#e8eef8;opacity:0.8;border:0.5px solid rgba(40,60,120,0.6);box-sizing:border-box"></div>
<div style="left:433.5px;top:192.84px;width:16px;height:5.04px;opacity:0.85;color:#111;font:bold 5.04px/5.04px 'Liberation Mono';letter-spacing:0.08px;white-space:nowrap;overflow:hidden">#BRN#</div>
<div style="left:422.5px;top:201.7px;width:4.5px;height:4.05px;background:#7a7ad8;opacity:0.8;border:0.5px solid rgba(40,60,120,0.6);box-sizing:border-box"></div>
<div style="left:428.5px;top:201.64px;width:9px;height:5.04px;opacity:0.85;color:#111;font:bold 5.04px/5.04px 'Liberation Mono';letter-spacing:0.08px;white-space:nowrap;overflow:hidden">H@A</div>
<div style="left:427.5px;top:206.7px;width:4.5px;height:4.05px;background:#f0d070;opacity:0.8;border:0.5px solid rgba(40,60,120,0.6);box-sizing:border-box"></div>
<div style="left:433.5px;top:206.64px;width:21px;height:5.04px;opacity:0.85;color:#111;font:bold 5.04px/5.04px 'Liberation Mono';letter-spacing:0.08px;white-space:nowrap;overflow:hidden">UH@NFRX</div>
<div style="left:432.5px;top:211.2px;width:4.5px;height:4.05px;background:#9ad090;opacity:0.8;border:0.5px solid rgba(40,60,120,0.6);box-sizing:border-box"></div>
<div style="left:438.5px;top:211.14px;width:7px;height:5.04px;opacity:0.85;color:#111;font:bold 5.04px/5.04px 'Liberation Mono';letter-spacing:0.08px;white-space:nowrap;overflow:hidden">D@</div>
<div style="left:432.5px;top:215.7px;width:4.5px;height:4.05px;background:#6a8ad8;opacity:0.8;border:0.5px solid rgba(40,60,120,0.6);box-sizing:border-box"></div>
<div style="left:438.5px;top:215.64px;width:8px;height:5.04px;opacity:0.85;color:#111;font:bold 5.04px/5.04px 'Liberation Mono';letter-spacing:0.08px;white-space:nowrap;overflow:hidden">R#M</div>
<div style="left:432.5px;top:220.2px;width:4.5px;height:4.05px;background:#c0c8e0;opacity:0.8;border:0.5px solid rgba(40,60,120,0.6);box-sizing:border-box"></div>
<div style="left:438.5px;top:220.14px;width:7px;height:5.04px;opacity:0.85;color:#111;font:bold 5.04px/5.04px 'Liberation Mono';letter-spacing:0.08px;white-space:nowrap;overflow:hidden">FH</div>
<div style="left:427.5px;top:225.2px;width:4.5px;height:4.05px;background:#f0d070;opacity:0.8;border:0.5px solid rgba(40,60,120,0.6);box-sizing:border-box"></div>
<div style="left:433.5px;top:225.14px;width:17px;height:5.04px;opacity:0.85;color:#111;font:bold 5.04px/5.04px 'Liberation Mono';letter-spacing:0.08px;white-space:nowrap;overflow:hidden">K#DEX</div>
<div style="left:432.5px;top:229.7px;width:4.5px;height:4.05px;background:#b8e0b0;opacity:0.8;border:0.5px solid rgba(40,60,120,0.6);box-sizing:border-box"></div>
<div style="left:438.5px;top:229.64px;width:19px;height:5.04px;opacity:0.85;color:#111;font:bold 5.04px/5.04px 'Liberation Mono';letter-spacing:0.08px;white-space:nowrap;overflow:hidden">AMMXWH</div>
<div style="left:432.5px;top:234.2px;width:4.5px;height:4.05px;background:#f0e8c0;opacity:0.8;border:0.5px solid rgba(40,60,120,0.6);box-sizing:border-box"></div>
<div style="left:438.5px;top:234.14px;width:19px;height:5.04px;opacity:0.85;color:#111;font:bold 5.04px/5.04px 'Liberation Mono';letter-spacing:0.08px;white-space:nowrap;overflow:hidden">NMMA@A</div>
<div style="left:422.5px;top:239.0px;width:4.5px;height:4.05px;background:#7a90c8;opacity:0.8;border:0.5px solid rgba(40,60,120,0.6);box-sizing:border-box"></div>
<div style="left:428.5px;top:238.94px;width:9px;height:5.04px;opacity:0.85;color:#111;font:bold 5.04px/5.04px 'Liberation Mono';letter-spacing:0.08px;white-space:nowrap;overflow:hidden">7E@</div>
<div style="left:427.5px;top:243.7px;width:4.5px;height:4.05px;background:#6ac070;opacity:0.8;border:0.5px solid rgba(40,60,120,0.6);box-sizing:border-box"></div>
<div style="left:433.5px;top:243.64px;width:7px;height:5.04px;opacity:0.85;color:#111;font:bold 5.04px/5.04px 'Liberation Mono';letter-spacing:0.08px;white-space:nowrap;overflow:hidden">FN</div>
<div style="left:422.5px;top:248.2px;width:4.5px;height:4.05px;background:#304070;opacity:0.8;border:0.5px solid rgba(40,60,120,0.6);box-sizing:border-box"></div>
<div style="left:428.5px;top:248.14px;width:7px;height:5.04px;opacity:0.85;color:#111;font:bold 5.04px/5.04px 'Liberation Mono';letter-spacing:0.08px;white-space:nowrap;overflow:hidden">RE</div>
<div style="left:427.5px;top:252.7px;width:4.5px;height:4.05px;background:#7a90c8;opacity:0.8;border:0.5px solid rgba(40,60,120,0.6);box-sizing:border-box"></div>
<div style="left:432.8px;top:252.2px;width:14.5px;height:4.4px;background:#3468c8"></div>
<div style="left:433.5px;top:252.92px;width:14px;height:4.32px;opacity:0.75;color:#fff;font:bold 4.32px/4.32px 'Liberation Mono';letter-spacing:0.51px;white-space:nowrap;overflow:hidden">XUF4</div>
<div style="left:422.5px;top:257.2px;width:4.5px;height:4.05px;background:#50b060;opacity:0.8;border:0.5px solid rgba(40,60,120,0.6);box-sizing:border-box"></div>
<div style="left:428.5px;top:257.14px;width:7px;height:5.04px;opacity:0.85;color:#111;font:bold 5.04px/5.04px 'Liberation Mono';letter-spacing:0.08px;white-space:nowrap;overflow:hidden">A#</div>
<div style="left:427.5px;top:261.7px;width:4.5px;height:4.05px;background:#d0d8f0;opacity:0.8;border:0.5px solid rgba(40,60,120,0.6);box-sizing:border-box"></div>
<div style="left:433.5px;top:261.64px;width:9px;height:5.04px;opacity:0.85;color:#111;font:bold 5.04px/5.04px 'Liberation Mono';letter-spacing:0.08px;white-space:nowrap;overflow:hidden">@XB</div>
<div style="left:427.5px;top:266.2px;width:4.5px;height:4.05px;background:#d0d8f0;opacity:0.8;border:0.5px solid rgba(40,60,120,0.6);box-sizing:border-box"></div>
<div style="left:433.5px;top:266.14px;width:9px;height:5.04px;opacity:0.85;color:#111;font:bold 5.04px/5.04px 'Liberation Mono';letter-spacing:0.08px;white-space:nowrap;overflow:hidden">FAF</div>
<div style="left:422.5px;top:270.7px;width:4.5px;height:4.05px;background:#f0d070;opacity:0.8;border:0.5px solid rgba(40,60,120,0.6);box-sizing:border-box"></div>
<div style="left:428.5px;top:270.64px;width:8px;height:5.04px;opacity:0.85;color:#111;font:bold 5.04px/5.04px 'Liberation Mono';letter-spacing:0.08px;white-space:nowrap;overflow:hidden">4EX</div>
<div style="left:422.5px;top:275.2px;width:4.5px;height:4.05px;background:#6a7ad8;opacity:0.8;border:0.5px solid rgba(40,60,120,0.6);box-sizing:border-box"></div>
<div style="left:428.5px;top:275.14px;width:8px;height:5.04px;opacity:0.85;color:#111;font:bold 5.04px/5.04px 'Liberation Mono';letter-spacing:0.08px;white-space:nowrap;overflow:hidden">MHA</div>
<div style="left:422.5px;top:279.7px;width:4.5px;height:4.05px;background:#50a060;opacity:0.8;border:0.5px solid rgba(40,60,120,0.6);box-sizing:border-box"></div>
<div style="left:428.5px;top:279.64px;width:7px;height:5.04px;opacity:0.85;color:#111;font:bold 5.04px/5.04px 'Liberation Mono';letter-spacing:0.08px;white-space:nowrap;overflow:hidden">EN</div>
<div style="left:420.5px;top:44px;width:0.5px;height:200px;background:repeating-linear-gradient(#aaa 0 0.5px,transparent 0.5px 1.5px)"></div>
<div style="left:425.5px;top:49px;width:0.5px;height:150px;background:repeating-linear-gradient(#aaa 0 0.5px,transparent 0.5px 1.5px)"></div>
<div style="left:483px;top:27px;width:309px;height:8px;background:#f0f0f0"></div>
<div style="left:483px;top:28.3px;width:309px;height:6.5px;background:#fff"></div>
<div style="left:484.5px;top:30px;width:3px;height:3px;background:#d02828;border-radius:50% 50% 0 0"></div>
<div style="left:490px;top:29.73px;width:33px;height:4.68px;opacity:0.94;color:#222;font:bold 4.68px/4.68px 'Liberation Mono';letter-spacing:0.49px;white-space:nowrap;overflow:hidden">ZKE@7#WR#@</div>
<div style="left:483px;top:35px;width:17px;height:203px;background:#2c2c2d"></div>
<div style="left:496px;top:35px;width:4px;height:203px;background:#3b3b3a"></div>
<div style="left:500px;top:35px;width:292px;height:203px;background:#161b2f"></div>
<div style="left:500px;top:176.92000000000002px;width:292px;height:5.6px;background:#3a3c40"></div>
<div style="left:545px;top:177.32px;width:63px;height:4.6px;background:#2b4a2b"></div>
<div style="left:615px;top:177.32px;width:42px;height:4.6px;background:#2f5a25"></div>
<div style="left:493px;top:36.54px;width:3px;height:5.04px;opacity:0.56;color:#c0c0c0;font:bold 5.04px/5.04px 'Liberation Mono';letter-spacing:-0.32px;white-space:nowrap;overflow:hidden">K</div>
<div style="left:506.5px;top:36.400000000000006px;width:17px;height:4px;background:rgba(30,70,170,0.22)"></div>
<div style="left:507px;top:36.66px;width:8px;height:5.76px;opacity:1.00;color:#3f7fe6;font:normal 5.76px/5.76px 'Liberation Mono';letter-spacing:0.04px;white-space:nowrap;overflow:hidden">FE</div>
<div style="left:516px;top:36.66px;width:8px;height:5.76px;opacity:1.00;color:#3f7fe6;font:normal 5.76px/5.76px 'Liberation Mono';letter-spacing:0.04px;white-space:nowrap;overflow:hidden">AN</div>
<div style="left:525.5px;top:36.66px;width:15px;height:5.76px;opacity:1.00;color:#e6e6e6;font:normal 5.76px/5.76px 'Liberation Mono';letter-spacing:0.14px;white-space:nowrap;overflow:hidden">NMBZ</div>
<div style="left:542.0px;top:36.66px;width:16px;height:5.76px;opacity:0.94;color:#3f7fe6;font:normal 5.76px/5.76px 'Liberation Mono';letter-spacing:0.14px;white-space:nowrap;overflow:hidden">@DM@</div>
<div style="left:493px;top:41.96px;width:3px;height:5.04px;opacity:0.56;color:#c0c0c0;font:bold 5.04px/5.04px 'Liberation Mono';letter-spacing:-0.32px;white-space:nowrap;overflow:hidden">R</div>
<div style="left:506.5px;top:41.82000000000001px;width:17px;height:4px;background:rgba(30,70,170,0.22)"></div>
<div style="left:507px;top:42.08px;width:8px;height:5.76px;opacity:1.00;color:#3f7fe6;font:normal 5.76px/5.76px 'Liberation Mono';letter-spacing:0.04px;white-space:nowrap;overflow:hidden">XZ</div>
<div style="left:516px;top:42.08px;width:8px;height:5.76px;opacity:1.00;color:#3f7fe6;font:normal 5.76px/5.76px 'Liberation Mono';letter-spacing:0.04px;white-space:nowrap;overflow:hidden">XF</div>
<div style="left:525.5px;top:42.08px;width:15px;height:5.76px;opacity:1.00;color:#e6e6e6;font:normal 5.76px/5.76px 'Liberation Mono';letter-spacing:0.14px;white-space:nowrap;overflow:hidden">HNZK</div>
<div style="left:542.0px;top:42.08px;width:15px;height:5.76px;opacity:0.94;color:#3f7fe6;font:normal 5.76px/5.76px 'Liberation Mono';letter-spacing:0.14px;white-space:nowrap;overflow:hidden">4UX7</div>
<div style="left:493px;top:47.38px;width:3px;height:5.04px;opacity:0.56;color:#c0c0c0;font:bold 5.04px/5.04px 'Liberation Mono';letter-spacing:-0.32px;white-space:nowrap;overflow:hidden">H</div>
<div style="left:506.5px;top:47.24000000000001px;width:17px;height:4px;background:rgba(30,70,170,0.22)"></div>
<div style="left:507px;top:47.50px;width:8px;height:5.76px;opacity:1.00;color:#3f7fe6;font:normal 5.76px/5.76px 'Liberation Mono';letter-spacing:0.04px;white-space:nowrap;overflow:hidden">BM</div>
<div style="left:516px;top:47.50px;width:8px;height:5.76px;opacity:1.00;color:#3f7fe6;font:normal 5.76px/5.76px 'Liberation Mono';letter-spacing:0.04px;white-space:nowrap;overflow:hidden">4B</div>
<div style="left:525.5px;top:47.50px;width:16px;height:5.76px;opacity:1.00;color:#e6e6e6;font:normal 5.76px/5.76px 'Liberation Mono';letter-spacing:0.14px;white-space:nowrap;overflow:hidden">MXWA</div>
<div style="left:543.0px;top:47.50px;width:16px;height:5.76px;opacity:0.94;color:#3f7fe6;font:normal 5.76px/5.76px 'Liberation Mono';letter-spacing:0.14px;white-space:nowrap;overflow:hidden">REBE</div>
<div style="left:493px;top:52.80px;width:3px;height:5.04px;opacity:0.56;color:#c0c0c0;font:bold 5.04px/5.04px 'Liberation Mono';letter-spacing:-0.32px;white-space:nowrap;overflow:hidden">K</div>
<div style="left:506.5px;top:52.660000000000004px;width:17px;height:4px;background:rgba(30,70,170,0.22)"></div>
<div style="left:507px;top:52.92px;width:8px;height:5.76px;opacity:1.00;color:#3f7fe6;font:normal 5.76px/5.76px 'Liberation Mono';letter-spacing:0.04px;white-space:nowrap;overflow:hidden">7B</div>
<div style="left:516px;top:52.92px;width:8px;height:5.76px;opacity:1.00;color:#3f7fe6;font:normal 5.76px/5.76px 'Liberation Mono';letter-spacing:0.04px;white-space:nowrap;overflow:hidden">@R</div>
<div style="left:525.5px;top:52.92px;width:13px;height:5.76px;opacity:1.00;color:#e6e6e6;font:normal 5.76px/5.76px 'Liberation Mono';letter-spacing:0.14px;white-space:nowrap;overflow:hidden">KFU#</div>
<div style="left:540.0px;top:52.92px;width:14px;height:5.76px;opacity:0.94;color:#3f7fe6;font:normal 5.76px/5.76px 'Liberation Mono';letter-spacing:0.14px;white-space:nowrap;overflow:hidden">NZK7</div>
<div style="left:493px;top:58.22px;width:3px;height:5.04px;opacity:0.56;color:#c0c0c0;font:bold 5.04px/5.04px 'Liberation Mono';letter-spacing:-0.32px;white-space:nowrap;overflow:hidden">Z</div>
<div style="left:506.5px;top:58.080000000000005px;width:17px;height:4px;background:rgba(30,70,170,0.22)"></div>
<div style="left:507px;top:58.34px;width:8px;height:5.76px;opacity:1.00;color:#3f7fe6;font:normal 5.76px/5.76px 'Liberation Mono';letter-spacing:0.04px;white-space:nowrap;overflow:hidden">UZ</div>
<div style="left:516px;top:58.34px;width:8px;height:5.76px;opacity:1.00;color:#3f7fe6;font:normal 5.76px/5.76px 'Liberation Mono';letter-spacing:0.04px;white-space:nowrap;overflow:hidden">7W</div>
<div style="left:525.5px;top:58.34px;width:16px;height:5.76px;opacity:1.00;color:#e6e6e6;font:normal 5.76px/5.76px 'Liberation Mono';letter-spacing:0.14px;white-space:nowrap;overflow:hidden">W@DW</div>
<div style="left:543.0px;top:58.34px;width:15px;height:5.76px;opacity:0.94;color:#3f7fe6;font:normal 5.76px/5.76px 'Liberation Mono';letter-spacing:0.14px;white-space:nowrap;overflow:hidden">7RUK</div>
<div style="left:558.5px;top:58.22px;width:39px;height:5.04px;opacity:0.88;color:#5aa05a;font:normal 5.04px/5.04px 'Liberation Mono';letter-spacing:-0.02px;white-space:nowrap;overflow:hidden">EZNBENNR#RXUZ</div>
<div style="left:603px;top:58.22px;width:38px;height:5.04px;opacity:1.00;color:#4fd040;font:normal 5.04px/5.04px 'Liberation Mono';letter-spacing:-0.02px;white-space:nowrap;overflow:hidden">R7ZH7NDBZ4UF@</div>
<div style="left:493px;top:63.64px;width:3px;height:5.04px;opacity:0.56;color:#c0c0c0;font:bold 5.04px/5.04px 'Liberation Mono';letter-spacing:-0.32px;white-space:nowrap;overflow:hidden">7</div>
<div style="left:506.5px;top:63.500000000000014px;width:17px;height:4px;background:rgba(30,70,170,0.22)"></div>
<div style="left:507px;top:63.76px;width:8px;height:5.76px;opacity:1.00;color:#3f7fe6;font:normal 5.76px/5.76px 'Liberation Mono';letter-spacing:0.04px;white-space:nowrap;overflow:hidden">#W</div>
<div style="left:516px;top:63.76px;width:8px;height:5.76px;opacity:1.00;color:#3f7fe6;font:normal 5.76px/5.76px 'Liberation Mono';letter-spacing:0.04px;white-space:nowrap;overflow:hidden">E@</div>
<div style="left:525.5px;top:63.76px;width:16px;height:5.76px;opacity:1.00;color:#e6e6e6;font:normal 5.76px/5.76px 'Liberation Mono';letter-spacing:0.14px;white-space:nowrap;overflow:hidden">@FW4</div>
<div style="left:543.0px;top:63.76px;width:14px;height:5.76px;opacity:0.94;color:#3f7fe6;font:normal 5.76px/5.76px 'Liberation Mono';letter-spacing:0.14px;white-space:nowrap;overflow:hidden">4HKE</div>
<div style="left:558.5px;top:63.64px;width:11px;height:5.04px;opacity:0.88;color:#5aa05a;font:normal 5.04px/5.04px 'Liberation Mono';letter-spacing:-0.02px;white-space:nowrap;overflow:hidden">BBWU</div>
<div style="left:493px;top:69.06px;width:3px;height:5.04px;opacity:0.56;color:#c0c0c0;font:bold 5.04px/5.04px 'Liberation Mono';letter-spacing:-0.32px;white-space:nowrap;overflow:hidden">X</div>
<div style="left:506.5px;top:68.92px;width:17px;height:4px;background:rgba(30,70,170,0.22)"></div>
<div style="left:507px;top:69.18px;width:8px;height:5.76px;opacity:1.00;color:#3f7fe6;font:normal 5.76px/5.76px 'Liberation Mono';letter-spacing:0.04px;white-space:nowrap;overflow:hidden">X7</div>
<div style="left:516px;top:69.18px;width:8px;height:5.76px;opacity:1.00;color:#3f7fe6;font:normal 5.76px/5.76px 'Liberation Mono';letter-spacing:0.04px;white-space:nowrap;overflow:hidden">WU</div>
<div style="left:525.5px;top:69.18px;width:12px;height:5.76px;opacity:1.00;color:#e6e6e6;font:normal 5.76px/5.76px 'Liberation Mono';letter-spacing:0.14px;white-space:nowrap;overflow:hidden">ERN</div>
<div style="left:539.0px;top:69.18px;width:15px;height:5.76px;opacity:0.94;color:#3f7fe6;font:normal 5.76px/5.76px 'Liberation Mono';letter-spacing:0.14px;white-space:nowrap;overflow:hidden">4A7@</div>
<div style="left:558.5px;top:69.06px;width:19px;height:5.04px;opacity:0.88;color:#5aa05a;font:normal 5.04px/5.04px 'Liberation Mono';letter-spacing:-0.02px;white-space:nowrap;overflow:hidden">HBNDBX</div>
<div style="left:493px;top:74.48px;width:3px;height:5.04px;opacity:0.56;color:#c0c0c0;font:bold 5.04px/5.04px 'Liberation Mono';letter-spacing:-0.32px;white-space:nowrap;overflow:hidden">M</div>
<div style="left:506.5px;top:74.34px;width:17px;height:4px;background:rgba(30,70,170,0.22)"></div>
<div style="left:507px;top:74.60px;width:8px;height:5.76px;opacity:1.00;color:#3f7fe6;font:normal 5.76px/5.76px 'Liberation Mono';letter-spacing:0.04px;white-space:nowrap;overflow:hidden">FB</div>
<div style="left:516px;top:74.60px;width:8px;height:5.76px;opacity:1.00;color:#3f7fe6;font:normal 5.76px/5.76px 'Liberation Mono';letter-spacing:0.04px;white-space:nowrap;overflow:hidden">AE</div>
<div style="left:525.5px;top:74.60px;width:14px;height:5.76px;opacity:1.00;color:#e6e6e6;font:normal 5.76px/5.76px 'Liberation Mono';letter-spacing:0.14px;white-space:nowrap;overflow:hidden">KXNZ</div>
<div style="left:541.0px;top:74.60px;width:14px;height:5.76px;opacity:0.94;color:#3f7fe6;font:normal 5.76px/5.76px 'Liberation Mono';letter-spacing:0.14px;white-space:nowrap;overflow:hidden">H7Z@</div>
<div style="left:493px;top:79.90px;width:3px;height:5.04px;opacity:0.56;color:#c0c0c0;font:bold 5.04px/5.04px 'Liberation Mono';letter-spacing:-0.32px;white-space:nowrap;overflow:hidden">#</div>
<div style="left:506.5px;top:79.76px;width:17px;height:4px;background:rgba(30,70,170,0.22)"></div>
<div style="left:507px;top:80.02px;width:8px;height:5.76px;opacity:1.00;color:#3f7fe6;font:normal 5.76px/5.76px 'Liberation Mono';letter-spacing:0.04px;white-space:nowrap;overflow:hidden">7F</div>
<div style="left:516px;top:80.02px;width:8px;height:5.76px;opacity:1.00;color:#3f7fe6;font:normal 5.76px/5.76px 'Liberation Mono';letter-spacing:0.04px;white-space:nowrap;overflow:hidden">AR</div>
<div style="left:525.5px;top:80.02px;width:12px;height:5.76px;opacity:1.00;color:#e6e6e6;font:normal 5.76px/5.76px 'Liberation Mono';letter-spacing:0.14px;white-space:nowrap;overflow:hidden">BUW</div>
<div style="left:539.0px;top:80.02px;width:16px;height:5.76px;opacity:0.94;color:#3f7fe6;font:normal 5.76px/5.76px 'Liberation Mono';letter-spacing:0.14px;white-space:nowrap;overflow:hidden">@7K#</div>
<div style="left:557px;top:79.90px;width:36px;height:5.04px;opacity:1.00;color:#4fd040;font:normal 5.04px/5.04px 'Liberation Mono';letter-spacing:-0.02px;white-space:nowrap;overflow:hidden">FBZ#KADFKBRA</div>
<div style="left:490px;top:85.32px;width:6.3px;height:5.04px;opacity:0.56;color:#c0c0c0;font:bold 5.04px/5.04px 'Liberation Mono';letter-spacing:-0.32px;white-space:nowrap;overflow:hidden">FF</div>
<div style="left:506.5px;top:85.18px;width:17px;height:4px;background:rgba(30,70,170,0.22)"></div>
<div style="left:507px;top:85.44px;width:8px;height:5.76px;opacity:1.00;color:#3f7fe6;font:normal 5.76px/5.76px 'Liberation Mono';letter-spacing:0.04px;white-space:nowrap;overflow:hidden">@4</div>
<div style="left:516px;top:85.44px;width:8px;height:5.76px;opacity:1.00;color:#3f7fe6;font:normal 5.76px/5.76px 'Liberation Mono';letter-spacing:0.04px;white-space:nowrap;overflow:hidden">@4</div>
<div style="left:525.5px;top:85.44px;width:12px;height:5.76px;opacity:1.00;color:#e6e6e6;font:normal 5.76px/5.76px 'Liberation Mono';letter-spacing:0.14px;white-space:nowrap;overflow:hidden">E@E</div>
<div style="left:539.0px;top:85.44px;width:16px;height:5.76px;opacity:0.94;color:#3f7fe6;font:normal 5.76px/5.76px 'Liberation Mono';letter-spacing:0.14px;white-space:nowrap;overflow:hidden">KMZ#</div>
<div style="left:490px;top:90.74px;width:6.3px;height:5.04px;opacity:0.56;color:#c0c0c0;font:bold 5.04px/5.04px 'Liberation Mono';letter-spacing:-0.32px;white-space:nowrap;overflow:hidden">#W</div>
<div style="left:506.5px;top:90.60000000000001px;width:17px;height:4px;background:rgba(30,70,170,0.22)"></div>
<div style="left:507px;top:90.86px;width:8px;height:5.76px;opacity:1.00;color:#3f7fe6;font:normal 5.76px/5.76px 'Liberation Mono';letter-spacing:0.04px;white-space:nowrap;overflow:hidden">BB</div>
<div style="left:516px;top:90.86px;width:8px;height:5.76px;opacity:1.00;color:#3f7fe6;font:normal 5.76px/5.76px 'Liberation Mono';letter-spacing:0.04px;white-space:nowrap;overflow:hidden">FW</div>
<div style="left:525.5px;top:90.86px;width:15px;height:5.76px;opacity:1.00;color:#e6e6e6;font:normal 5.76px/5.76px 'Liberation Mono';letter-spacing:0.14px;white-space:nowrap;overflow:hidden">RKH4</div>
<div style="left:542.0px;top:90.86px;width:15px;height:5.76px;opacity:0.94;color:#3f7fe6;font:normal 5.76px/5.76px 'Liberation Mono';letter-spacing:0.14px;white-space:nowrap;overflow:hidden">#ZWE</div>
<div style="left:490px;top:96.16px;width:6.3px;height:5.04px;opacity:0.56;color:#c0c0c0;font:bold 5.04px/5.04px 'Liberation Mono';letter-spacing:-0.32px;white-space:nowrap;overflow:hidden">AM</div>
<div style="left:506.5px;top:96.02px;width:17px;height:4px;background:rgba(30,70,170,0.22)"></div>
<div style="left:507px;top:96.28px;width:8px;height:5.76px;opacity:1.00;color:#3f7fe6;font:normal 5.76px/5.76px 'Liberation Mono';letter-spacing:0.04px;white-space:nowrap;overflow:hidden">WM</div>
<div style="left:516px;top:96.28px;width:8px;height:5.76px;opacity:1.00;color:#3f7fe6;font:normal 5.76px/5.76px 'Liberation Mono';letter-spacing:0.04px;white-space:nowrap;overflow:hidden">NW</div>
<div style="left:525.5px;top:96.28px;width:16px;height:5.76px;opacity:1.00;color:#e6e6e6;font:normal 5.76px/5.76px 'Liberation Mono';letter-spacing:0.14px;white-space:nowrap;overflow:hidden">7BUX</div>
<div style="left:543.0px;top:96.28px;width:16px;height:5.76px;opacity:0.94;color:#3f7fe6;font:normal 5.76px/5.76px 'Liberation Mono';letter-spacing:0.14px;white-space:nowrap;overflow:hidden">E7NA</div>
<div style="left:490px;top:101.58px;width:6.3px;height:5.04px;opacity:0.56;color:#c0c0c0;font:bold 5.04px/5.04px 'Liberation Mono';letter-spacing:-0.32px;white-space:nowrap;overflow:hidden">WU</div>
<div style="left:506.5px;top:101.44px;width:17px;height:4px;background:rgba(30,70,170,0.22)"></div>
<div style="left:507px;top:101.70px;width:8px;height:5.76px;opacity:1.00;color:#3f7fe6;font:normal 5.76px/5.76px 'Liberation Mono';letter-spacing:0.04px;white-space:nowrap;overflow:hidden">7X</div>
<div style="left:516px;top:101.70px;width:8px;height:5.76px;opacity:1.00;color:#3f7fe6;font:normal 5.76px/5.76px 'Liberation Mono';letter-spacing:0.04px;white-space:nowrap;overflow:hidden">UM</div>
<div style="left:525.5px;top:101.70px;width:13px;height:5.76px;opacity:1.00;color:#e6e6e6;font:normal 5.76px/5.76px 'Liberation Mono';letter-spacing:0.14px;white-space:nowrap;overflow:hidden">RA47</div>
<div style="left:540.0px;top:101.70px;width:16px;height:5.76px;opacity:0.94;color:#3f7fe6;font:normal 5.76px/5.76px 'Liberation Mono';letter-spacing:0.14px;white-space:nowrap;overflow:hidden">W744</div>
<div style="left:490px;top:107.00px;width:6.3px;height:5.04px;opacity:0.56;color:#c0c0c0;font:bold 5.04px/5.04px 'Liberation Mono';letter-spacing:-0.32px;white-space:nowrap;overflow:hidden">D@</div>
<div style="left:506.5px;top:106.86px;width:17px;height:4px;background:rgba(30,70,170,0.22)"></div>
<div style="left:507px;top:107.12px;width:8px;height:5.76px;opacity:1.00;color:#3f7fe6;font:normal 5.76px/5.76px 'Liberation Mono';letter-spacing:0.04px;white-space:nowrap;overflow:hidden">MF</div>
<div style="left:516px;top:107.12px;width:8px;height:5.76px;opacity:1.00;color:#3f7fe6;font:normal 5.76px/5.76px 'Liberation Mono';letter-spacing:0.04px;white-space:nowrap;overflow:hidden">#4</div>
<div style="left:525.5px;top:107.12px;width:12px;height:5.76px;opacity:1.00;color:#e6e6e6;font:normal 5.76px/5.76px 'Liberation Mono';letter-spacing:0.14px;white-space:nowrap;overflow:hidden">KW#</div>
<div style="left:539.0px;top:107.12px;width:16px;height:5.76px;opacity:0.94;color:#3f7fe6;font:normal 5.76px/5.76px 'Liberation Mono';letter-spacing:0.14px;white-space:nowrap;overflow:hidden">ZNUE</div>
<div style="left:490px;top:112.42px;width:6.3px;height:5.04px;opacity:0.56;color:#c0c0c0;font:bold 5.04px/5.04px 'Liberation Mono';letter-spacing:-0.32px;white-space:nowrap;overflow:hidden">R@</div>
<div style="left:506.5px;top:112.28px;width:17px;height:4px;background:rgba(30,70,170,0.22)"></div>
<div style="left:507px;top:112.54px;width:8px;height:5.76px;opacity:1.00;color:#3f7fe6;font:normal 5.76px/5.76px 'Liberation Mono';letter-spacing:0.04px;white-space:nowrap;overflow:hidden">Z4</div>
<div style="left:516px;top:112.54px;width:8px;height:5.76px;opacity:1.00;color:#3f7fe6;font:normal 5.76px/5.76px 'Liberation Mono';letter-spacing:0.04px;white-space:nowrap;overflow:hidden">DU</div>
<div style="left:525.5px;top:112.54px;width:12px;height:5.76px;opacity:1.00;color:#e6e6e6;font:normal 5.76px/5.76px 'Liberation Mono';letter-spacing:0.14px;white-space:nowrap;overflow:hidden">MRZ</div>
<div style="left:539.0px;top:112.54px;width:14px;height:5.76px;opacity:0.94;color:#3f7fe6;font:normal 5.76px/5.76px 'Liberation Mono';letter-spacing:0.14px;white-space:nowrap;overflow:hidden">U@F#</div>
<div style="left:558px;top:112.42px;width:9px;height:5.04px;opacity:0.88;color:#5aa05a;font:normal 5.04px/5.04px 'Liberation Mono';letter-spacing:-0.02px;white-space:nowrap;overflow:hidden">XFB</div>
<div style="left:570px;top:112.42px;width:12px;height:5.04px;opacity:1.00;color:#4fd040;font:normal 5.04px/5.04px 'Liberation Mono';letter-spacing:-0.02px;white-space:nowrap;overflow:hidden">4NRB</div>
<div style="left:490px;top:117.84px;width:6.3px;height:5.04px;opacity:0.56;color:#c0c0c0;font:bold 5.04px/5.04px 'Liberation Mono';letter-spacing:-0.32px;white-space:nowrap;overflow:hidden">NN</div>
<div style="left:506.5px;top:117.7px;width:17px;height:4px;background:rgba(30,70,170,0.22)"></div>
<div style="left:507px;top:117.96px;width:8px;height:5.76px;opacity:1.00;color:#3f7fe6;font:normal 5.76px/5.76px 'Liberation Mono';letter-spacing:0.04px;white-space:nowrap;overflow:hidden">M@</div>
<div style="left:516px;top:117.96px;width:8px;height:5.76px;opacity:1.00;color:#3f7fe6;font:normal 5.76px/5.76px 'Liberation Mono';letter-spacing:0.04px;white-space:nowrap;overflow:hidden">NR</div>
<div style="left:525.5px;top:117.96px;width:12px;height:5.76px;opacity:1.00;color:#e6e6e6;font:normal 5.76px/5.76px 'Liberation Mono';letter-spacing:0.14px;white-space:nowrap;overflow:hidden">4DU</div>
<div style="left:539.0px;top:117.96px;width:14px;height:5.76px;opacity:0.94;color:#3f7fe6;font:normal 5.76px/5.76px 'Liberation Mono';letter-spacing:0.14px;white-space:nowrap;overflow:hidden">AMAE</div>
<div style="left:556px;top:117.84px;width:92px;height:5.04px;opacity:0.69;color:#5aa05a;font:normal 5.04px/5.04px 'Liberation Mono';letter-spacing:-0.02px;white-space:nowrap;overflow:hidden">MA4HRRWRWEKUEBAFR4@RKXZEUK@NUMR</div>
<div style="left:658px;top:117.84px;width:63px;height:5.04px;opacity:0.94;color:#4fd040;font:normal 5.04px/5.04px 'Liberation Mono';letter-spacing:-0.02px;white-space:nowrap;overflow:hidden">4NB#H7M@@RNAUM4ZNARZR</div>
<div style="left:490px;top:123.26px;width:6.3px;height:5.04px;opacity:0.56;color:#c0c0c0;font:bold 5.04px/5.04px 'Liberation Mono';letter-spacing:-0.32px;white-space:nowrap;overflow:hidden">U7</div>
<div style="left:506.5px;top:123.12px;width:17px;height:4px;background:rgba(30,70,170,0.22)"></div>
<div style="left:507px;top:123.38px;width:8px;height:5.76px;opacity:1.00;color:#3f7fe6;font:normal 5.76px/5.76px 'Liberation Mono';letter-spacing:0.04px;white-space:nowrap;overflow:hidden">KK</div>
<div style="left:516px;top:123.38px;width:8px;height:5.76px;opacity:1.00;color:#3f7fe6;font:normal 5.76px/5.76px 'Liberation Mono';letter-spacing:0.04px;white-space:nowrap;overflow:hidden">MR</div>
<div style="left:525.5px;top:123.38px;width:13px;height:5.76px;opacity:1.00;color:#e6e6e6;font:normal 5.76px/5.76px 'Liberation Mono';letter-spacing:0.14px;white-space:nowrap;overflow:hidden">H7#U</div>
<div style="left:540.0px;top:123.38px;width:16px;height:5.76px;opacity:0.94;color:#3f7fe6;font:normal 5.76px/5.76px 'Liberation Mono';letter-spacing:0.14px;white-space:nowrap;overflow:hidden">XU@F</div>
<div style="left:559px;top:123.26px;width:8px;height:5.04px;opacity:0.88;color:#5aa05a;font:normal 5.04px/5.04px 'Liberation Mono';letter-spacing:-0.02px;white-space:nowrap;overflow:hidden">DDX</div>
<div style="left:490px;top:128.68px;width:6.3px;height:5.04px;opacity:0.56;color:#c0c0c0;font:bold 5.04px/5.04px 'Liberation Mono';letter-spacing:-0.32px;white-space:nowrap;overflow:hidden">MD</div>
<div style="left:506.5px;top:128.54px;width:17px;height:4px;background:rgba(30,70,170,0.22)"></div>
<div style="left:507px;top:128.80px;width:8px;height:5.76px;opacity:1.00;color:#3f7fe6;font:normal 5.76px/5.76px 'Liberation Mono';letter-spacing:0.04px;white-space:nowrap;overflow:hidden">UN</div>
<div style="left:516px;top:128.80px;width:8px;height:5.76px;opacity:1.00;color:#3f7fe6;font:normal 5.76px/5.76px 'Liberation Mono';letter-spacing:0.04px;white-space:nowrap;overflow:hidden">AA</div>
<div style="left:525.5px;top:128.80px;width:12px;height:5.76px;opacity:1.00;color:#e6e6e6;font:normal 5.76px/5.76px 'Liberation Mono';letter-spacing:0.14px;white-space:nowrap;overflow:hidden">HF@</div>
<div style="left:539.0px;top:128.80px;width:15px;height:5.76px;opacity:0.94;color:#3f7fe6;font:normal 5.76px/5.76px 'Liberation Mono';letter-spacing:0.14px;white-space:nowrap;overflow:hidden">ZM7F</div>
<div style="left:558px;top:128.68px;width:8px;height:5.04px;opacity:0.88;color:#5aa05a;font:normal 5.04px/5.04px 'Liberation Mono';letter-spacing:-0.02px;white-space:nowrap;overflow:hidden">R4W</div>
<div style="left:490px;top:134.10px;width:6.3px;height:5.04px;opacity:0.56;color:#c0c0c0;font:bold 5.04px/5.04px 'Liberation Mono';letter-spacing:-0.32px;white-space:nowrap;overflow:hidden">ZF</div>
<div style="left:506.5px;top:133.95999999999998px;width:17px;height:4px;background:rgba(30,70,170,0.22)"></div>
<div style="left:507px;top:134.22px;width:8px;height:5.76px;opacity:1.00;color:#3f7fe6;font:normal 5.76px/5.76px 'Liberation Mono';letter-spacing:0.04px;white-space:nowrap;overflow:hidden">@X</div>
<div style="left:516px;top:134.22px;width:8px;height:5.76px;opacity:1.00;color:#3f7fe6;font:normal 5.76px/5.76px 'Liberation Mono';letter-spacing:0.04px;white-space:nowrap;overflow:hidden">MK</div>
<div style="left:525.5px;top:134.22px;width:14px;height:5.76px;opacity:1.00;color:#e6e6e6;font:normal 5.76px/5.76px 'Liberation Mono';letter-spacing:0.14px;white-space:nowrap;overflow:hidden">4HND</div>
<div style="left:541.0px;top:134.22px;width:15px;height:5.76px;opacity:0.94;color:#3f7fe6;font:normal 5.76px/5.76px 'Liberation Mono';letter-spacing:0.14px;white-space:nowrap;overflow:hidden">WN44</div>
<div style="left:555px;top:134.10px;width:9px;height:5.04px;opacity:0.88;color:#5aa05a;font:normal 5.04px/5.04px 'Liberation Mono';letter-spacing:-0.02px;white-space:nowrap;overflow:hidden">MK7</div>
<div style="left:490px;top:139.52px;width:6.3px;height:5.04px;opacity:0.56;color:#c0c0c0;font:bold 5.04px/5.04px 'Liberation Mono';letter-spacing:-0.32px;white-space:nowrap;overflow:hidden">7B</div>
<div style="left:506.5px;top:139.38px;width:17px;height:4px;background:rgba(30,70,170,0.22)"></div>
<div style="left:507px;top:139.64px;width:8px;height:5.76px;opacity:1.00;color:#3f7fe6;font:normal 5.76px/5.76px 'Liberation Mono';letter-spacing:0.04px;white-space:nowrap;overflow:hidden">BK</div>
<div style="left:516px;top:139.64px;width:8px;height:5.76px;opacity:1.00;color:#3f7fe6;font:normal 5.76px/5.76px 'Liberation Mono';letter-spacing:0.04px;white-space:nowrap;overflow:hidden">UB</div>
<div style="left:525.5px;top:139.64px;width:16px;height:5.76px;opacity:1.00;color:#e6e6e6;font:normal 5.76px/5.76px 'Liberation Mono';letter-spacing:0.14px;white-space:nowrap;overflow:hidden">DDZF</div>
<div style="left:543.0px;top:139.64px;width:14px;height:5.76px;opacity:0.94;color:#3f7fe6;font:normal 5.76px/5.76px 'Liberation Mono';letter-spacing:0.14px;white-space:nowrap;overflow:hidden">KHBB</div>
<div style="left:559px;top:139.52px;width:12px;height:5.04px;opacity:0.88;color:#5aa05a;font:normal 5.04px/5.04px 'Liberation Mono';letter-spacing:-0.02px;white-space:nowrap;overflow:hidden">44#N</div>
<div style="left:490px;top:144.94px;width:6.3px;height:5.04px;opacity:0.56;color:#c0c0c0;font:bold 5.04px/5.04px 'Liberation Mono';letter-spacing:-0.32px;white-space:nowrap;overflow:hidden">RU</div>
<div style="left:506.5px;top:144.8px;width:17px;height:4px;background:rgba(30,70,170,0.22)"></div>
<div style="left:507px;top:145.06px;width:8px;height:5.76px;opacity:1.00;color:#3f7fe6;font:normal 5.76px/5.76px 'Liberation Mono';letter-spacing:0.04px;white-space:nowrap;overflow:hidden">RW</div>
<div style="left:516px;top:145.06px;width:8px;height:5.76px;opacity:1.00;color:#3f7fe6;font:normal 5.76px/5.76px 'Liberation Mono';letter-spacing:0.04px;white-space:nowrap;overflow:hidden">A4</div>
<div style="left:525.5px;top:145.06px;width:16px;height:5.76px;opacity:1.00;color:#e6e6e6;font:normal 5.76px/5.76px 'Liberation Mono';letter-spacing:0.14px;white-space:nowrap;overflow:hidden">NXU@</div>
<div style="left:543.0px;top:145.06px;width:14px;height:5.76px;opacity:0.94;color:#3f7fe6;font:normal 5.76px/5.76px 'Liberation Mono';letter-spacing:0.14px;white-space:nowrap;overflow:hidden">B#RD</div>
<div style="left:490px;top:150.36px;width:6.3px;height:5.04px;opacity:0.56;color:#c0c0c0;font:bold 5.04px/5.04px 'Liberation Mono';letter-spacing:-0.32px;white-space:nowrap;overflow:hidden">B#</div>
<div style="left:506.5px;top:150.21999999999997px;width:17px;height:4px;background:rgba(30,70,170,0.22)"></div>
<div style="left:507px;top:150.48px;width:8px;height:5.76px;opacity:1.00;color:#3f7fe6;font:normal 5.76px/5.76px 'Liberation Mono';letter-spacing:0.04px;white-space:nowrap;overflow:hidden">X@</div>
<div style="left:516px;top:150.48px;width:8px;height:5.76px;opacity:1.00;color:#3f7fe6;font:normal 5.76px/5.76px 'Liberation Mono';letter-spacing:0.04px;white-space:nowrap;overflow:hidden">HU</div>
<div style="left:525.5px;top:150.48px;width:14px;height:5.76px;opacity:1.00;color:#e6e6e6;font:normal 5.76px/5.76px 'Liberation Mono';letter-spacing:0.14px;white-space:nowrap;overflow:hidden">7UUN</div>
<div style="left:541.0px;top:150.48px;width:15px;height:5.76px;opacity:0.94;color:#3f7fe6;font:normal 5.76px/5.76px 'Liberation Mono';letter-spacing:0.14px;white-space:nowrap;overflow:hidden">B4WH</div>
<div style="left:490px;top:155.78px;width:6.3px;height:5.04px;opacity:0.56;color:#c0c0c0;font:bold 5.04px/5.04px 'Liberation Mono';letter-spacing:-0.32px;white-space:nowrap;overflow:hidden">4W</div>
<div style="left:506.5px;top:155.64px;width:17px;height:4px;background:rgba(30,70,170,0.22)"></div>
<div style="left:507px;top:155.90px;width:8px;height:5.76px;opacity:1.00;color:#3f7fe6;font:normal 5.76px/5.76px 'Liberation Mono';letter-spacing:0.04px;white-space:nowrap;overflow:hidden">4E</div>
<div style="left:516px;top:155.90px;width:8px;height:5.76px;opacity:1.00;color:#3f7fe6;font:normal 5.76px/5.76px 'Liberation Mono';letter-spacing:0.04px;white-space:nowrap;overflow:hidden">UH</div>
<div style="left:525.5px;top:155.90px;width:12px;height:5.76px;opacity:1.00;color:#e6e6e6;font:normal 5.76px/5.76px 'Liberation Mono';letter-spacing:0.14px;white-space:nowrap;overflow:hidden">DND</div>
<div style="left:539.0px;top:155.90px;width:16px;height:5.76px;opacity:0.94;color:#3f7fe6;font:normal 5.76px/5.76px 'Liberation Mono';letter-spacing:0.14px;white-space:nowrap;overflow:hidden">R7RR</div>
<div style="left:490px;top:161.20px;width:6.3px;height:5.04px;opacity:0.56;color:#c0c0c0;font:bold 5.04px/5.04px 'Liberation Mono';letter-spacing:-0.32px;white-space:nowrap;overflow:hidden">UZ</div>
<div style="left:506.5px;top:161.06px;width:17px;height:4px;background:rgba(30,70,170,0.22)"></div>
<div style="left:507px;top:161.32px;width:8px;height:5.76px;opacity:1.00;color:#3f7fe6;font:normal 5.76px/5.76px 'Liberation Mono';letter-spacing:0.04px;white-space:nowrap;overflow:hidden">NR</div>
<div style="left:516px;top:161.32px;width:8px;height:5.76px;opacity:1.00;color:#3f7fe6;font:normal 5.76px/5.76px 'Liberation Mono';letter-spacing:0.04px;white-space:nowrap;overflow:hidden">D#</div>
<div style="left:525.5px;top:161.32px;width:12px;height:5.76px;opacity:1.00;color:#e6e6e6;font:normal 5.76px/5.76px 'Liberation Mono';letter-spacing:0.14px;white-space:nowrap;overflow:hidden">X7E</div>
<div style="left:539.0px;top:161.32px;width:15px;height:5.76px;opacity:0.94;color:#3f7fe6;font:normal 5.76px/5.76px 'Liberation Mono';letter-spacing:0.14px;white-space:nowrap;overflow:hidden">#@DW</div>
<div style="left:560px;top:161.20px;width:58px;height:5.04px;opacity:0.75;color:#5aa05a;font:normal 5.04px/5.04px 'Liberation Mono';letter-spacing:-0.02px;white-space:nowrap;overflow:hidden">NFU4MFBR@D4X7EEUN4@</div>
<div style="left:624.5px;top:161.20px;width:18px;height:5.04px;opacity:1.00;color:#4fd040;font:normal 5.04px/5.04px 'Liberation Mono';letter-spacing:-0.02px;white-space:nowrap;overflow:hidden">UKZ7EB</div>
<div style="left:490px;top:166.62px;width:6.3px;height:5.04px;opacity:0.56;color:#c0c0c0;font:bold 5.04px/5.04px 'Liberation Mono';letter-spacing:-0.32px;white-space:nowrap;overflow:hidden">NA</div>
<div style="left:506.5px;top:166.47999999999996px;width:17px;height:4px;background:rgba(30,70,170,0.22)"></div>
<div style="left:507px;top:166.74px;width:8px;height:5.76px;opacity:1.00;color:#3f7fe6;font:normal 5.76px/5.76px 'Liberation Mono';letter-spacing:0.04px;white-space:nowrap;overflow:hidden">UH</div>
<div style="left:516px;top:166.74px;width:8px;height:5.76px;opacity:1.00;color:#3f7fe6;font:normal 5.76px/5.76px 'Liberation Mono';letter-spacing:0.04px;white-space:nowrap;overflow:hidden">FF</div>
<div style="left:525.5px;top:166.74px;width:14px;height:5.76px;opacity:1.00;color:#e6e6e6;font:normal 5.76px/5.76px 'Liberation Mono';letter-spacing:0.14px;white-space:nowrap;overflow:hidden">ZXZ7</div>
<div style="left:541.0px;top:166.74px;width:15px;height:5.76px;opacity:0.94;color:#3f7fe6;font:normal 5.76px/5.76px 'Liberation Mono';letter-spacing:0.14px;white-space:nowrap;overflow:hidden">X7MA</div>
<div style="left:555px;top:166.62px;width:15px;height:5.04px;opacity:0.75;color:#5aa05a;font:normal 5.04px/5.04px 'Liberation Mono';letter-spacing:-0.02px;white-space:nowrap;overflow:hidden">W#AZA</div>
<div style="left:575px;top:166.62px;width:41px;height:5.04px;opacity:1.00;color:#4fd040;font:normal 5.04px/5.04px 'Liberation Mono';letter-spacing:-0.02px;white-space:nowrap;overflow:hidden">AEZAMD7MNX#WNU</div>
<div style="left:490px;top:172.04px;width:6.3px;height:5.04px;opacity:0.56;color:#c0c0c0;font:bold 5.04px/5.04px 'Liberation Mono';letter-spacing:-0.32px;white-space:nowrap;overflow:hidden">NF</div>
<div style="left:500.0px;top:171.89999999999998px;width:17px;height:4px;background:rgba(30,70,170,0.22)"></div>
<div style="left:500.5px;top:172.16px;width:8px;height:5.76px;opacity:1.00;color:#3f7fe6;font:normal 5.76px/5.76px 'Liberation Mono';letter-spacing:0.04px;white-space:nowrap;overflow:hidden">BU</div>
<div style="left:509.5px;top:172.16px;width:8px;height:5.76px;opacity:1.00;color:#3f7fe6;font:normal 5.76px/5.76px 'Liberation Mono';letter-spacing:0.04px;white-space:nowrap;overflow:hidden">BK</div>
<div style="left:519.0px;top:172.16px;width:16px;height:5.76px;opacity:1.00;color:#e6e6e6;font:normal 5.76px/5.76px 'Liberation Mono';letter-spacing:0.14px;white-space:nowrap;overflow:hidden">4EHB</div>
<div style="left:536.5px;top:172.16px;width:14px;height:5.76px;opacity:0.94;color:#3f7fe6;font:normal 5.76px/5.76px 'Liberation Mono';letter-spacing:0.14px;white-space:nowrap;overflow:hidden">E#WK</div>
<div style="left:548px;top:172.04px;width:61px;height:5.04px;opacity:0.75;color:#5aa05a;font:normal 5.04px/5.04px 'Liberation Mono';letter-spacing:-0.02px;white-space:nowrap;overflow:hidden">RAM@U4MAWM7D7BZBR47Z</div>
<div style="left:616.5px;top:172.04px;width:41px;height:5.04px;opacity:1.00;color:#4fd040;font:normal 5.04px/5.04px 'Liberation Mono';letter-spacing:-0.02px;white-space:nowrap;overflow:hidden">FNN@EB#7AAWHAU</div>
<div style="left:490px;top:177.46px;width:6.3px;height:5.04px;opacity:0.56;color:#c0c0c0;font:bold 5.04px/5.04px 'Liberation Mono';letter-spacing:-0.32px;white-space:nowrap;overflow:hidden">RN</div>
<div style="left:500.0px;top:177.32px;width:17px;height:4px;background:rgba(30,70,170,0.22)"></div>
<div style="left:500.5px;top:177.58px;width:8px;height:5.76px;opacity:1.00;color:#3f7fe6;font:normal 5.76px/5.76px 'Liberation Mono';letter-spacing:0.04px;white-space:nowrap;overflow:hidden">DU</div>
<div style="left:509.5px;top:177.58px;width:8px;height:5.76px;opacity:1.00;color:#3f7fe6;font:normal 5.76px/5.76px 'Liberation Mono';letter-spacing:0.04px;white-space:nowrap;overflow:hidden">@N</div>
<div style="left:519.0px;top:177.58px;width:14px;height:5.76px;opacity:1.00;color:#e6e6e6;font:normal 5.76px/5.76px 'Liberation Mono';letter-spacing:0.14px;white-space:nowrap;overflow:hidden">Z##A</div>
<div style="left:534.5px;top:177.58px;width:15px;height:5.76px;opacity:0.94;color:#3f7fe6;font:normal 5.76px/5.76px 'Liberation Mono';letter-spacing:0.14px;white-space:nowrap;overflow:hidden">HFUR</div>
<div style="left:546px;top:177.46px;width:63px;height:5.04px;opacity:0.88;color:#5aa05a;font:normal 5.04px/5.04px 'Liberation Mono';letter-spacing:-0.02px;white-space:nowrap;overflow:hidden">UE7WWA##XFXM#R@RWUBXE</div>
<div style="left:616px;top:177.46px;width:41px;height:5.04px;opacity:1.00;color:#4fd040;font:normal 5.04px/5.04px 'Liberation Mono';letter-spacing:-0.02px;white-space:nowrap;overflow:hidden">R@W4KH7HE#FRKN</div>
<div style="left:490px;top:182.88px;width:6.3px;height:5.04px;opacity:0.56;color:#c0c0c0;font:bold 5.04px/5.04px 'Liberation Mono';letter-spacing:-0.32px;white-space:nowrap;overflow:hidden">WA</div>
<div style="left:500.0px;top:182.74px;width:17px;height:4px;background:rgba(30,70,170,0.22)"></div>
<div style="left:500.5px;top:183.00px;width:8px;height:5.76px;opacity:1.00;color:#3f7fe6;font:normal 5.76px/5.76px 'Liberation Mono';letter-spacing:0.04px;white-space:nowrap;overflow:hidden">DU</div>
<div style="left:509.5px;top:183.00px;width:8px;height:5.76px;opacity:1.00;color:#3f7fe6;font:normal 5.76px/5.76px 'Liberation Mono';letter-spacing:0.04px;white-space:nowrap;overflow:hidden">AU</div>
<div style="left:519.0px;top:183.00px;width:13px;height:5.76px;opacity:1.00;color:#e6e6e6;font:normal 5.76px/5.76px 'Liberation Mono';letter-spacing:0.14px;white-space:nowrap;overflow:hidden">4HEF</div>
<div style="left:533.5px;top:183.00px;width:16px;height:5.76px;opacity:0.94;color:#3f7fe6;font:normal 5.76px/5.76px 'Liberation Mono';letter-spacing:0.14px;white-space:nowrap;overflow:hidden">ZA7W</div>
<div style="left:548px;top:182.88px;width:55px;height:5.04px;opacity:0.69;color:#5aa05a;font:normal 5.04px/5.04px 'Liberation Mono';letter-spacing:-0.02px;white-space:nowrap;overflow:hidden">XNR77UK@K4FBFN4XUX</div>
<div style="left:606px;top:182.88px;width:25px;height:5.04px;opacity:0.62;color:#e6e6e6;font:normal 5.04px/5.04px 'Liberation Mono';letter-spacing:-0.02px;white-space:nowrap;overflow:hidden">NUUURFDM</div>
<div style="left:644px;top:182.88px;width:61px;height:5.04px;opacity:1.00;color:#4fd040;font:normal 5.04px/5.04px 'Liberation Mono';letter-spacing:-0.02px;white-space:nowrap;overflow:hidden">KUUHDBBKUZMHFDFZZ#UB</div>
<div style="left:490px;top:188.30px;width:6.3px;height:5.04px;opacity:0.56;color:#c0c0c0;font:bold 5.04px/5.04px 'Liberation Mono';letter-spacing:-0.32px;white-space:nowrap;overflow:hidden">W4</div>
<div style="left:500.0px;top:188.15999999999997px;width:17px;height:4px;background:rgba(30,70,170,0.22)"></div>
<div style="left:500.5px;top:188.42px;width:8px;height:5.76px;opacity:1.00;color:#3f7fe6;font:normal 5.76px/5.76px 'Liberation Mono';letter-spacing:0.04px;white-space:nowrap;overflow:hidden">AX</div>
<div style="left:509.5px;top:188.42px;width:8px;height:5.76px;opacity:1.00;color:#3f7fe6;font:normal 5.76px/5.76px 'Liberation Mono';letter-spacing:0.04px;white-space:nowrap;overflow:hidden">@7</div>
<div style="left:519.0px;top:188.42px;width:14px;height:5.76px;opacity:1.00;color:#e6e6e6;font:normal 5.76px/5.76px 'Liberation Mono';letter-spacing:0.14px;white-space:nowrap;overflow:hidden">EFEK</div>
<div style="left:534.5px;top:188.42px;width:14px;height:5.76px;opacity:0.94;color:#3f7fe6;font:normal 5.76px/5.76px 'Liberation Mono';letter-spacing:0.14px;white-space:nowrap;overflow:hidden">K7#A</div>
<div style="left:490px;top:193.72px;width:6.3px;height:5.04px;opacity:0.56;color:#c0c0c0;font:bold 5.04px/5.04px 'Liberation Mono';letter-spacing:-0.32px;white-space:nowrap;overflow:hidden">ZZ</div>
<div style="left:500.0px;top:193.57999999999998px;width:17px;height:4px;background:rgba(30,70,170,0.22)"></div>
<div style="left:500.5px;top:193.84px;width:8px;height:5.76px;opacity:1.00;color:#3f7fe6;font:normal 5.76px/5.76px 'Liberation Mono';letter-spacing:0.04px;white-space:nowrap;overflow:hidden">HX</div>
<div style="left:509.5px;top:193.84px;width:8px;height:5.76px;opacity:1.00;color:#3f7fe6;font:normal 5.76px/5.76px 'Liberation Mono';letter-spacing:0.04px;white-space:nowrap;overflow:hidden">AB</div>
<div style="left:519.0px;top:193.84px;width:12px;height:5.76px;opacity:1.00;color:#e6e6e6;font:normal 5.76px/5.76px 'Liberation Mono';letter-spacing:0.14px;white-space:nowrap;overflow:hidden">NNR</div>
<div style="left:532.5px;top:193.84px;width:16px;height:5.76px;opacity:0.94;color:#3f7fe6;font:normal 5.76px/5.76px 'Liberation Mono';letter-spacing:0.14px;white-space:nowrap;overflow:hidden">MDF4</div>
<div style="left:490px;top:199.14px;width:6.3px;height:5.04px;opacity:0.56;color:#c0c0c0;font:bold 5.04px/5.04px 'Liberation Mono';letter-spacing:-0.32px;white-space:nowrap;overflow:hidden">HF</div>
<div style="left:500.0px;top:199.0px;width:17px;height:4px;background:rgba(30,70,170,0.22)"></div>
<div style="left:500.5px;top:199.26px;width:8px;height:5.76px;opacity:1.00;color:#3f7fe6;font:normal 5.76px/5.76px 'Liberation Mono';letter-spacing:0.04px;white-space:nowrap;overflow:hidden">DZ</div>
<div style="left:509.5px;top:199.26px;width:8px;height:5.76px;opacity:1.00;color:#3f7fe6;font:normal 5.76px/5.76px 'Liberation Mono';letter-spacing:0.04px;white-space:nowrap;overflow:hidden">FD</div>
<div style="left:519.0px;top:199.26px;width:12px;height:5.76px;opacity:1.00;color:#e6e6e6;font:normal 5.76px/5.76px 'Liberation Mono';letter-spacing:0.14px;white-space:nowrap;overflow:hidden">@4W</div>
<div style="left:532.5px;top:199.26px;width:15px;height:5.76px;opacity:0.94;color:#3f7fe6;font:normal 5.76px/5.76px 'Liberation Mono';letter-spacing:0.14px;white-space:nowrap;overflow:hidden">KN4N</div>
<div style="left:490px;top:204.56px;width:6.3px;height:5.04px;opacity:0.56;color:#c0c0c0;font:bold 5.04px/5.04px 'Liberation Mono';letter-spacing:-0.32px;white-space:nowrap;overflow:hidden">XM</div>
<div style="left:500.0px;top:204.42000000000002px;width:17px;height:4px;background:rgba(30,70,170,0.22)"></div>
<div style="left:500.5px;top:204.68px;width:8px;height:5.76px;opacity:1.00;color:#3f7fe6;font:normal 5.76px/5.76px 'Liberation Mono';letter-spacing:0.04px;white-space:nowrap;overflow:hidden">XX</div>
<div style="left:509.5px;top:204.68px;width:8px;height:5.76px;opacity:1.00;color:#3f7fe6;font:normal 5.76px/5.76px 'Liberation Mono';letter-spacing:0.04px;white-space:nowrap;overflow:hidden">W7</div>
<div style="left:519.0px;top:204.68px;width:12px;height:5.76px;opacity:1.00;color:#e6e6e6;font:normal 5.76px/5.76px 'Liberation Mono';letter-spacing:0.14px;white-space:nowrap;overflow:hidden">MRA</div>
<div style="left:532.5px;top:204.68px;width:15px;height:5.76px;opacity:0.94;color:#3f7fe6;font:normal 5.76px/5.76px 'Liberation Mono';letter-spacing:0.14px;white-space:nowrap;overflow:hidden">U4WF</div>
<div style="left:490px;top:209.98px;width:6.3px;height:5.04px;opacity:0.56;color:#c0c0c0;font:bold 5.04px/5.04px 'Liberation Mono';letter-spacing:-0.32px;white-space:nowrap;overflow:hidden">F7</div>
<div style="left:500.0px;top:209.83999999999997px;width:17px;height:4px;background:rgba(30,70,170,0.22)"></div>
<div style="left:500.5px;top:210.10px;width:8px;height:5.76px;opacity:1.00;color:#3f7fe6;font:normal 5.76px/5.76px 'Liberation Mono';letter-spacing:0.04px;white-space:nowrap;overflow:hidden">U4</div>
<div style="left:509.5px;top:210.10px;width:8px;height:5.76px;opacity:1.00;color:#3f7fe6;font:normal 5.76px/5.76px 'Liberation Mono';letter-spacing:0.04px;white-space:nowrap;overflow:hidden">#U</div>
<div style="left:519.0px;top:210.10px;width:15px;height:5.76px;opacity:1.00;color:#e6e6e6;font:normal 5.76px/5.76px 'Liberation Mono';letter-spacing:0.14px;white-space:nowrap;overflow:hidden">#MWX</div>
<div style="left:535.5px;top:210.10px;width:14px;height:5.76px;opacity:0.94;color:#3f7fe6;font:normal 5.76px/5.76px 'Liberation Mono';letter-spacing:0.14px;white-space:nowrap;overflow:hidden">XDXX</div>
<div style="left:490px;top:215.40px;width:6.3px;height:5.04px;opacity:0.56;color:#c0c0c0;font:bold 5.04px/5.04px 'Liberation Mono';letter-spacing:-0.32px;white-space:nowrap;overflow:hidden">HZ</div>
<div style="left:500.0px;top:215.26px;width:17px;height:4px;background:rgba(30,70,170,0.22)"></div>
<div style="left:500.5px;top:215.52px;width:8px;height:5.76px;opacity:1.00;color:#3f7fe6;font:normal 5.76px/5.76px 'Liberation Mono';letter-spacing:0.04px;white-space:nowrap;overflow:hidden">K4</div>
<div style="left:509.5px;top:215.52px;width:8px;height:5.76px;opacity:1.00;color:#3f7fe6;font:normal 5.76px/5.76px 'Liberation Mono';letter-spacing:0.04px;white-space:nowrap;overflow:hidden">NN</div>
<div style="left:519.0px;top:215.52px;width:12px;height:5.76px;opacity:1.00;color:#e6e6e6;font:normal 5.76px/5.76px 'Liberation Mono';letter-spacing:0.14px;white-space:nowrap;overflow:hidden">7@N</div>
<div style="left:532.5px;top:215.52px;width:16px;height:5.76px;opacity:0.94;color:#3f7fe6;font:normal 5.76px/5.76px 'Liberation Mono';letter-spacing:0.14px;white-space:nowrap;overflow:hidden">4KDN</div>
<div style="left:490px;top:220.82px;width:6.3px;height:5.04px;opacity:0.56;color:#c0c0c0;font:bold 5.04px/5.04px 'Liberation Mono';letter-spacing:-0.32px;white-space:nowrap;overflow:hidden">UF</div>
<div style="left:500.0px;top:220.68px;width:17px;height:4px;background:rgba(30,70,170,0.22)"></div>
<div style="left:500.5px;top:220.94px;width:8px;height:5.76px;opacity:1.00;color:#3f7fe6;font:normal 5.76px/5.76px 'Liberation Mono';letter-spacing:0.04px;white-space:nowrap;overflow:hidden">KM</div>
<div style="left:509.5px;top:220.94px;width:8px;height:5.76px;opacity:1.00;color:#3f7fe6;font:normal 5.76px/5.76px 'Liberation Mono';letter-spacing:0.04px;white-space:nowrap;overflow:hidden">WN</div>
<div style="left:519.0px;top:220.94px;width:12px;height:5.76px;opacity:1.00;color:#e6e6e6;font:normal 5.76px/5.76px 'Liberation Mono';letter-spacing:0.14px;white-space:nowrap;overflow:hidden">W@M</div>
<div style="left:532.5px;top:220.94px;width:14px;height:5.76px;opacity:0.94;color:#3f7fe6;font:normal 5.76px/5.76px 'Liberation Mono';letter-spacing:0.14px;white-space:nowrap;overflow:hidden">FUEZ</div>
<div style="left:490px;top:226.24px;width:6.3px;height:5.04px;opacity:0.56;color:#c0c0c0;font:bold 5.04px/5.04px 'Liberation Mono';letter-spacing:-0.32px;white-space:nowrap;overflow:hidden">#B</div>
<div style="left:500.0px;top:226.09999999999997px;width:17px;height:4px;background:rgba(30,70,170,0.22)"></div>
<div style="left:500.5px;top:226.36px;width:8px;height:5.76px;opacity:1.00;color:#3f7fe6;font:normal 5.76px/5.76px 'Liberation Mono';letter-spacing:0.04px;white-space:nowrap;overflow:hidden">@E</div>
<div style="left:509.5px;top:226.36px;width:8px;height:5.76px;opacity:1.00;color:#3f7fe6;font:normal 5.76px/5.76px 'Liberation Mono';letter-spacing:0.04px;white-space:nowrap;overflow:hidden">DU</div>
<div style="left:519.0px;top:226.36px;width:13px;height:5.76px;opacity:1.00;color:#e6e6e6;font:normal 5.76px/5.76px 'Liberation Mono';letter-spacing:0.14px;white-space:nowrap;overflow:hidden">M4XA</div>
<div style="left:533.5px;top:226.36px;width:14px;height:5.76px;opacity:0.94;color:#3f7fe6;font:normal 5.76px/5.76px 'Liberation Mono';letter-spacing:0.14px;white-space:nowrap;overflow:hidden">4FAA</div>
<div style="left:490px;top:231.66px;width:6.3px;height:5.04px;opacity:0.56;color:#c0c0c0;font:bold 5.04px/5.04px 'Liberation Mono';letter-spacing:-0.32px;white-space:nowrap;overflow:hidden">RZ</div>
<div style="left:500.0px;top:231.51999999999998px;width:17px;height:4px;background:rgba(30,70,170,0.22)"></div>
<div style="left:500.5px;top:231.78px;width:8px;height:5.76px;opacity:1.00;color:#3f7fe6;font:normal 5.76px/5.76px 'Liberation Mono';letter-spacing:0.04px;white-space:nowrap;overflow:hidden">MN</div>
<div style="left:509.5px;top:231.78px;width:8px;height:5.76px;opacity:1.00;color:#3f7fe6;font:normal 5.76px/5.76px 'Liberation Mono';letter-spacing:0.04px;white-space:nowrap;overflow:hidden">WR</div>
<div style="left:519.0px;top:231.78px;width:15px;height:5.76px;opacity:1.00;color:#e6e6e6;font:normal 5.76px/5.76px 'Liberation Mono';letter-spacing:0.14px;white-space:nowrap;overflow:hidden">MF#B</div>
<div style="left:535.5px;top:231.78px;width:15px;height:5.76px;opacity:0.94;color:#3f7fe6;font:normal 5.76px/5.76px 'Liberation Mono';letter-spacing:0.14px;white-space:nowrap;overflow:hidden">U@4R</div>
<div style="left:649.5px;top:55.5px;width:87px;height:8px;background:#0b0f1a"></div>
<div style="left:651.5px;top:56.96px;width:84px;height:5.76px;opacity:1.00;color:#fff;font:normal 5.76px/5.76px 'Liberation Mono';letter-spacing:0.24px;white-space:nowrap;overflow:hidden">HMZHU4@RMMMEU4UHEBMN@FA</div>
<div style="left:641.8px;top:57.0px;width:5.2px;height:5.2px;background:#ee3b3b;border-radius:50%"></div>
<div style="left:587px;top:123.8px;width:93px;height:8.7px;background:#0b0f1a"></div>
<div style="left:589px;top:125.26px;width:90px;height:5.76px;opacity:1.00;color:#fff;font:normal 5.76px/5.76px 'Liberation Mono';letter-spacing:0.24px;white-space:nowrap;overflow:hidden">4RHXNKNRXXXZHEFU47ZZBR@7</div>
<div style="left:579.0px;top:124.9px;width:5.2px;height:5.2px;background:#ee3b3b;border-radius:50%"></div>
<div style="left:646px;top:150.6px;width:77px;height:15.4px;background:#0b0f1a"></div>
<div style="left:648px;top:152.06px;width:73px;height:5.76px;opacity:1.00;color:#fff;font:normal 5.76px/5.76px 'Liberation Mono';letter-spacing:0.24px;white-space:nowrap;overflow:hidden">KHDA#WZHXRRAMR7H#NW7</div>
<div style="left:648px;top:158.56px;width:29px;height:5.76px;opacity:1.00;color:#fff;font:normal 5.76px/5.76px 'Liberation Mono';letter-spacing:0.24px;white-space:nowrap;overflow:hidden">X4MNKU7W</div>
<div style="left:638.4px;top:152.70000000000002px;width:5.2px;height:5.2px;background:#ee3b3b;border-radius:50%"></div>
<div style="left:665px;top:175px;width:112px;height:7.5px;background:#0b0f1a"></div>
<div style="left:667px;top:176.46px;width:106px;height:5.76px;opacity:1.00;color:#fff;font:normal 5.76px/5.76px 'Liberation Mono';letter-spacing:0.24px;white-space:nowrap;overflow:hidden">FABHAM7@E74UA#KX#BKAAEUZZARD@</div>
<div style="left:658.4px;top:176.4px;width:5.2px;height:5.2px;background:#ee3b3b;border-radius:50%"></div>
<div style="left:645px;top:189.4px;width:147px;height:14.4px;background:#0b0f1a"></div>
<div style="left:647px;top:190.86px;width:141px;height:5.76px;opacity:1.00;color:#fff;font:normal 5.76px/5.76px 'Liberation Mono';letter-spacing:0.24px;white-space:nowrap;overflow:hidden">MRKHMXD@FHW#@BM47#NRF@FBAEH@RKUMBDRMXR</div>
<div style="left:647px;top:197.36px;width:31px;height:5.76px;opacity:1.00;color:#fff;font:normal 5.76px/5.76px 'Liberation Mono';letter-spacing:0.24px;white-space:nowrap;overflow:hidden">Z7XEMMM#</div>
<div style="left:636.4px;top:190.4px;width:5.2px;height:5.2px;background:#ee3b3b;border-radius:50%"></div>
<div style="left:483px;top:238px;width:309px;height:4.5px;background:linear-gradient(#eeeeee,#d8d8d8 80%,#9a9a9a)"></div>
<div style="left:483px;top:242.5px;width:309px;height:7.5px;background:#f0f0f0"></div>
<div style="left:485px;top:243.5px;width:16px;height:6px;background:#fff;border:0.5px solid #aaa;box-sizing:border-box"></div>
<div style="left:488px;top:244.73px;width:12px;height:4.68px;opacity:0.75;color:#223;font:bold 4.68px/4.68px 'Liberation Mono';letter-spacing:0.29px;white-space:nowrap;overflow:hidden">HFXE</div>
<div style="left:483px;top:250px;width:309px;height:7px;background:linear-gradient(#d8d8d8,#c4c4c4)"></div>
<div style="left:485px;top:251.73px;width:9px;height:4.68px;opacity:0.75;color:#222;font:bold 4.68px/4.68px 'Liberation Mono';letter-spacing:0.39px;white-space:nowrap;overflow:hidden">BFD</div>
<div style="left:483px;top:257px;width:309px;height:7.5px;background:#ececec"></div>
<div style="left:484px;top:257.5px;width:22px;height:6.5px;background:#f8f8f8;border:0.5px solid #999;box-sizing:border-box"></div>
<div style="left:485.5px;top:259.3px;width:2.5px;height:2.5px;background:#8aa8d8;opacity:0.7"></div>
<div style="left:489px;top:259.03px;width:16px;height:4.68px;opacity:0.75;color:#222;font:bold 4.68px/4.68px 'Liberation Mono';letter-spacing:0.29px;white-space:nowrap;overflow:hidden">FXAEX</div>
<div style="left:507px;top:257.5px;width:20px;height:6.5px;background:#f8f8f8;border:0.5px solid #999;box-sizing:border-box"></div>
<div style="left:508.5px;top:259.3px;width:2.5px;height:2.5px;background:#8aa8d8;opacity:0.7"></div>
<div style="left:512px;top:259.03px;width:14px;height:4.68px;opacity:0.75;color:#222;font:bold 4.68px/4.68px 'Liberation Mono';letter-spacing:0.29px;white-space:nowrap;overflow:hidden">Z4ZE</div>
<div style="left:529px;top:257.5px;width:22px;height:6.5px;background:#f8f8f8;border:0.5px solid #999;box-sizing:border-box"></div>
<div style="left:530.5px;top:259.3px;width:2.5px;height:2.5px;background:#8aa8d8;opacity:0.7"></div>
<div style="left:534px;top:259.03px;width:16px;height:4.68px;opacity:0.75;color:#222;font:bold 4.68px/4.68px 'Liberation Mono';letter-spacing:0.29px;white-space:nowrap;overflow:hidden">NMDWX</div>
<div style="left:552px;top:257.5px;width:22px;height:6.5px;background:#f8f8f8;border:0.5px solid #999;box-sizing:border-box"></div>
<div style="left:553.5px;top:259.3px;width:2.5px;height:2.5px;background:#8aa8d8;opacity:0.7"></div>
<div style="left:557px;top:259.03px;width:16px;height:4.68px;opacity:0.75;color:#222;font:bold 4.68px/4.68px 'Liberation Mono';letter-spacing:0.29px;white-space:nowrap;overflow:hidden">@DRXA</div>
<div style="left:576px;top:257.5px;width:22px;height:6.5px;background:#f8f8f8;border:0.5px solid #999;box-sizing:border-box"></div>
<div style="left:577.5px;top:259.3px;width:2.5px;height:2.5px;background:#8aa8d8;opacity:0.7"></div>
<div style="left:581px;top:259.03px;width:16px;height:4.68px;opacity:0.75;color:#222;font:bold 4.68px/4.68px 'Liberation Mono';letter-spacing:0.29px;white-space:nowrap;overflow:hidden">A4@UH</div>
<div style="left:599px;top:257.5px;width:21px;height:6.5px;background:#f8f8f8;border:0.5px solid #999;box-sizing:border-box"></div>
<div style="left:600.5px;top:259.3px;width:2.5px;height:2.5px;background:#8aa8d8;opacity:0.7"></div>
<div style="left:604px;top:259.03px;width:15px;height:4.68px;opacity:0.75;color:#222;font:bold 4.68px/4.68px 'Liberation Mono';letter-spacing:0.29px;white-space:nowrap;overflow:hidden">RD@7E</div>
<div style="left:483px;top:264px;width:309px;height:0.6px;background:#aaa"></div>
<div style="left:483px;top:264.5px;width:309px;height:19.5px;background:#fff"></div>
<div style="left:485px;top:265.23px;width:19px;height:4.68px;opacity:0.81;color:#222;font:bold 4.68px/4.68px 'Liberation Mono';letter-spacing:0.29px;white-space:nowrap;overflow:hidden">WMZEA7</div>
<div style="left:485px;top:269.03px;width:17px;height:4.68px;opacity:0.81;color:#222;font:bold 4.68px/4.68px 'Liberation Mono';letter-spacing:0.29px;white-space:nowrap;overflow:hidden">NBBBW</div>
<div style="left:485px;top:273.03px;width:61px;height:4.68px;opacity:0.75;color:#222;font:bold 4.68px/4.68px 'Liberation Mono';letter-spacing:0.29px;white-space:nowrap;overflow:hidden">XBEKRWDAZWU7MXXUW7B@</div>
<div style="left:457px;top:250px;width:51px;height:15px;background:#5a5a5a;box-shadow:0 1px 2px rgba(0,0,0,0.3)"></div>
<div style="left:459px;top:251.55px;width:37px;height:5.40px;opacity:1.00;color:#fff;font:bold 5.40px/5.40px 'Liberation Mono';letter-spacing:0.36px;white-space:nowrap;overflow:hidden">B77EK#XNXM</div>
<div style="left:459px;top:258.55px;width:47px;height:5.40px;opacity:1.00;color:#fff;font:bold 5.40px/5.40px 'Liberation Mono';letter-spacing:0.36px;white-space:nowrap;overflow:hidden">7FDMKKR7BNBFA</div>
<div style="left:449px;top:252px;width:5.2px;height:5.2px;background:#e83a3a;border-radius:50%"></div>
<div style="left:7px;top:318.5px;width:376px;height:295.5px;background:#f0f0f0;box-shadow:0 4px 12px rgba(0,0,0,0.10);border-radius:3px 3px 2px 2px"></div>
<div style="left:7px;top:318.5px;width:376px;height:4.7px;background:linear-gradient(90deg,#d6e9b8 0%,#bfe08a 35%,#8fd040 70%,#86cc34 100%)"></div>
<div style="left:7px;top:318.5px;width:3px;height:4.7px;background:linear-gradient(#4aa3a8,#1c6c74)"></div>
<div style="left:11px;top:319.52px;width:141px;height:4.32px;opacity:0.50;color:#2a3320;font:bold 4.32px/4.32px 'Liberation Mono';letter-spacing:1.01px;white-space:nowrap;overflow:hidden">BF@K@E4RZUEAZRREHXRKUWEXU7#BRWEN@UZKDFX</div>
<div style="left:7px;top:323.2px;width:376px;height:5.3px;background:#ebebeb"></div>
<div style="left:9px;top:324.24px;width:14px;height:5.04px;opacity:0.94;color:#111;font:bold 5.04px/5.04px 'Liberation Mono';letter-spacing:-0.02px;white-space:nowrap;overflow:hidden">FHXFB</div>
<div style="left:27px;top:324.24px;width:14px;height:5.04px;opacity:0.94;color:#111;font:bold 5.04px/5.04px 'Liberation Mono';letter-spacing:-0.02px;white-space:nowrap;overflow:hidden">N4Z@4</div>
<div style="left:44px;top:324.24px;width:13px;height:5.04px;opacity:0.94;color:#111;font:bold 5.04px/5.04px 'Liberation Mono';letter-spacing:-0.02px;white-space:nowrap;overflow:hidden">EEUF</div>
<div style="left:60px;top:324.24px;width:12px;height:5.04px;opacity:0.94;color:#111;font:bold 5.04px/5.04px 'Liberation Mono';letter-spacing:-0.02px;white-space:nowrap;overflow:hidden">RH#A</div>
<div style="left:76px;top:324.24px;width:13px;height:5.04px;opacity:0.94;color:#111;font:bold 5.04px/5.04px 'Liberation Mono';letter-spacing:-0.02px;white-space:nowrap;overflow:hidden">AZFM</div>
<div style="left:92px;top:324.24px;width:13px;height:5.04px;opacity:0.94;color:#111;font:bold 5.04px/5.04px 'Liberation Mono';letter-spacing:-0.02px;white-space:nowrap;overflow:hidden">E#4X</div>
<div style="left:108px;top:324.24px;width:13px;height:5.04px;opacity:0.94;color:#111;font:bold 5.04px/5.04px 'Liberation Mono';letter-spacing:-0.02px;white-space:nowrap;overflow:hidden">47MF</div>
<div style="left:124px;top:324.24px;width:13px;height:5.04px;opacity:0.94;color:#111;font:bold 5.04px/5.04px 'Liberation Mono';letter-spacing:-0.02px;white-space:nowrap;overflow:hidden">N@7U</div>
<div style="left:140px;top:324.24px;width:13px;height:5.04px;opacity:0.94;color:#111;font:bold 5.04px/5.04px 'Liberation Mono';letter-spacing:-0.02px;white-space:nowrap;overflow:hidden">K@BZ</div>
<div style="left:157px;top:324.24px;width:13px;height:5.04px;opacity:0.94;color:#111;font:bold 5.04px/5.04px 'Liberation Mono';letter-spacing:-0.02px;white-space:nowrap;overflow:hidden">A#WB</div>
<div style="left:172px;top:324.24px;width:11px;height:5.04px;opacity:0.94;color:#111;font:bold 5.04px/5.04px 'Liberation Mono';letter-spacing:-0.02px;white-space:nowrap;overflow:hidden">NBKE</div>
<div style="left:7px;top:328.5px;width:376px;height:15px;background:linear-gradient(#f7f7f7,#e6e6e6 60%,#cfcfcf)"></div>
<div style="left:9.9px;top:330.7px;width:5.3px;height:5.3px;background:linear-gradient(135deg,#fff 0%,#5b8fd6 45%,#5b8fd6 100%);opacity:0.8;border-radius:1.5px"></div>
<div style="left:8.5px;top:337.59px;width:9px;height:5.22px;opacity:0.94;color:#111;font:bold 5.22px/5.22px 'Liberation Mono';letter-spacing:-0.03px;white-space:nowrap;overflow:hidden">#F4</div>
<div style="left:23.4px;top:330.7px;width:5.3px;height:5.3px;background:linear-gradient(135deg,#fff 0%,#f2c14e 45%,#f2c14e 100%);opacity:0.8;border-radius:1.5px"></div>
<div style="left:22px;top:337.59px;width:9px;height:5.22px;opacity:0.94;color:#111;font:bold 5.22px/5.22px 'Liberation Mono';letter-spacing:-0.03px;white-space:nowrap;overflow:hidden">ZDX</div>
<div style="left:37.4px;top:330.7px;width:5.3px;height:5.3px;background:linear-gradient(135deg,#fff 0%,#5a4fc0 45%,#5a4fc0 100%);opacity:0.8;border-radius:1.5px"></div>
<div style="left:36px;top:337.59px;width:9px;height:5.22px;opacity:0.94;color:#111;font:bold 5.22px/5.22px 'Liberation Mono';letter-spacing:-0.03px;white-space:nowrap;overflow:hidden">BW7</div>
<div style="left:50.9px;top:330.7px;width:5.3px;height:5.3px;background:linear-gradient(135deg,#fff 0%,#8a9ab8 45%,#8a9ab8 100%);opacity:0.8;border-radius:1.5px"></div>
<div style="left:49.5px;top:337.59px;width:9px;height:5.22px;opacity:0.94;color:#111;font:bold 5.22px/5.22px 'Liberation Mono';letter-spacing:-0.03px;white-space:nowrap;overflow:hidden">FXW</div>
<div style="left:65.9px;top:330.7px;width:5.3px;height:5.3px;background:linear-gradient(135deg,#fff 0%,#7aa0d8 45%,#7aa0d8 100%);opacity:0.8;border-radius:1.5px"></div>
<div style="left:64.5px;top:337.59px;width:9px;height:5.22px;opacity:0.94;color:#111;font:bold 5.22px/5.22px 'Liberation Mono';letter-spacing:-0.03px;white-space:nowrap;overflow:hidden">HR@</div>
<div style="left:79.9px;top:330.7px;width:5.3px;height:5.3px;background:linear-gradient(135deg,#fff 0%,#9aa0a8 45%,#9aa0a8 100%);opacity:0.8;border-radius:1.5px"></div>
<div style="left:78.5px;top:337.59px;width:9px;height:5.22px;opacity:0.94;color:#111;font:bold 5.22px/5.22px 'Liberation Mono';letter-spacing:-0.03px;white-space:nowrap;overflow:hidden">@#4</div>
<div style="left:92.4px;top:330.7px;width:5.3px;height:5.3px;background:linear-gradient(135deg,#fff 0%,#8c8c8c 45%,#8c8c8c 100%);opacity:0.8;border-radius:1.5px"></div>
<div style="left:91px;top:337.59px;width:9px;height:5.22px;opacity:0.94;color:#111;font:bold 5.22px/5.22px 'Liberation Mono';letter-spacing:-0.03px;white-space:nowrap;overflow:hidden">ZMM</div>
<div style="left:106.4px;top:330.7px;width:5.3px;height:5.3px;background:linear-gradient(135deg,#fff 0%,#b9b39a 45%,#b9b39a 100%);opacity:0.8;border-radius:1.5px"></div>
<div style="left:105px;top:337.59px;width:9px;height:5.22px;opacity:0.94;color:#111;font:bold 5.22px/5.22px 'Liberation Mono';letter-spacing:-0.03px;white-space:nowrap;overflow:hidden">BZ7</div>
<div style="left:119.9px;top:330.7px;width:5.3px;height:5.3px;background:linear-gradient(135deg,#fff 0%,#4c8a4c 45%,#4c8a4c 100%);opacity:0.8;border-radius:1.5px"></div>
<div style="left:118.5px;top:337.59px;width:9px;height:5.22px;opacity:0.94;color:#111;font:bold 5.22px/5.22px 'Liberation Mono';letter-spacing:-0.03px;white-space:nowrap;overflow:hidden">U7W</div>
<div style="left:133.4px;top:330.7px;width:5.3px;height:5.3px;background:linear-gradient(135deg,#fff 0%,#4dbd3a 45%,#4dbd3a 100%);opacity:0.8;border-radius:1.5px"></div>
<div style="left:132px;top:337.59px;width:9px;height:5.22px;opacity:0.94;color:#111;font:bold 5.22px/5.22px 'Liberation Mono';letter-spacing:-0.03px;white-space:nowrap;overflow:hidden">#FD</div>
<div style="left:147.4px;top:330.7px;width:5.3px;height:5.3px;background:linear-gradient(135deg,#fff 0%,#6a6fd8 45%,#6a6fd8 100%);opacity:0.8;border-radius:1.5px"></div>
<div style="left:146px;top:337.59px;width:9px;height:5.22px;opacity:0.94;color:#111;font:bold 5.22px/5.22px 'Liberation Mono';letter-spacing:-0.03px;white-space:nowrap;overflow:hidden">WUA</div>
<div style="left:161.4px;top:330.7px;width:5.3px;height:5.3px;background:linear-gradient(135deg,#fff 0%,#d8c832 45%,#d8c832 100%);opacity:0.8;border-radius:1.5px"></div>
<div style="left:160px;top:337.59px;width:9px;height:5.22px;opacity:0.94;color:#111;font:bold 5.22px/5.22px 'Liberation Mono';letter-spacing:-0.03px;white-space:nowrap;overflow:hidden">FAX</div>
<div style="left:174.9px;top:330.7px;width:5.3px;height:5.3px;background:linear-gradient(135deg,#fff 0%,#4a78c8 45%,#4a78c8 100%);opacity:0.8;border-radius:1.5px"></div>
<div style="left:173.5px;top:337.59px;width:9px;height:5.22px;opacity:0.94;color:#111;font:bold 5.22px/5.22px 'Liberation Mono';letter-spacing:-0.03px;white-space:nowrap;overflow:hidden">W@E</div>
<div style="left:188.4px;top:330.7px;width:5.3px;height:5.3px;background:linear-gradient(135deg,#fff 0%,#3a9a3a 45%,#3a9a3a 100%);opacity:0.8;border-radius:1.5px"></div>
<div style="left:187px;top:337.59px;width:9px;height:5.22px;opacity:0.94;color:#111;font:bold 5.22px/5.22px 'Liberation Mono';letter-spacing:-0.03px;white-space:nowrap;overflow:hidden">7R4</div>
<div style="left:203.4px;top:330.7px;width:5.3px;height:5.3px;background:linear-gradient(135deg,#fff 0%,#4a78c8 45%,#4a78c8 100%);opacity:0.8;border-radius:1.5px"></div>
<div style="left:202px;top:337.59px;width:9px;height:5.22px;opacity:0.94;color:#111;font:bold 5.22px/5.22px 'Liberation Mono';letter-spacing:-0.03px;white-space:nowrap;overflow:hidden">WEH</div>
<div style="left:256.9px;top:330.7px;width:5.3px;height:5.3px;background:linear-gradient(135deg,#fff 0%,#4a78d8 45%,#4a78d8 100%);opacity:0.8;border-radius:1.5px"></div>
<div style="left:255.5px;top:337.59px;width:9px;height:5.22px;opacity:0.94;color:#111;font:bold 5.22px/5.22px 'Liberation Mono';letter-spacing:-0.03px;white-space:nowrap;overflow:hidden">4EM</div>
<div style="left:269.9px;top:330.7px;width:5.3px;height:5.3px;background:linear-gradient(135deg,#fff 0%,#3a88d8 45%,#3a88d8 100%);opacity:0.8;border-radius:1.5px"></div>
<div style="left:268.5px;top:337.59px;width:9px;height:5.22px;opacity:0.94;color:#111;font:bold 5.22px/5.22px 'Liberation Mono';letter-spacing:-0.03px;white-space:nowrap;overflow:hidden">F#Z</div>
<div style="left:284.9px;top:330.7px;width:5.3px;height:5.3px;background:linear-gradient(135deg,#fff 0%,#8aa0c0 45%,#8aa0c0 100%);opacity:0.8;border-radius:1.5px"></div>
<div style="left:283.5px;top:337.59px;width:9px;height:5.22px;opacity:0.94;color:#111;font:bold 5.22px/5.22px 'Liberation Mono';letter-spacing:-0.03px;white-space:nowrap;overflow:hidden">NWR</div>
<div style="left:298.15px;top:330.7px;width:5.3px;height:5.3px;background:linear-gradient(135deg,#fff 0%,#e8b832 45%,#e8b832 100%);opacity:0.8;border-radius:1.5px"></div>
<div style="left:296.75px;top:337.59px;width:9px;height:5.22px;opacity:0.94;color:#111;font:bold 5.22px/5.22px 'Liberation Mono';letter-spacing:-0.03px;white-space:nowrap;overflow:hidden">DNK</div>
<div style="left:47.5px;top:330px;width:0.8px;height:12px;background:#c4c4c4"></div>
<div style="left:75px;top:330px;width:0.8px;height:12px;background:#c4c4c4"></div>
<div style="left:200px;top:330px;width:0.8px;height:12px;background:#c4c4c4"></div>
<div style="left:214px;top:332px;width:37px;height:5.5px;background:#fff;border:0.6px solid #888;box-sizing:border-box"></div>
<div style="left:216px;top:333.32px;width:27px;height:4.32px;opacity:0.88;color:#222;font:bold 4.32px/4.32px 'Liberation Mono';letter-spacing:0.21px;white-space:nowrap;overflow:hidden">NFBWZA#7M</div>
<div style="left:313px;top:333.55px;width:9px;height:5.40px;opacity:0.75;color:#2a2ab8;font:bold 5.40px/5.40px 'Liberation Mono';letter-spacing:-0.04px;white-space:nowrap;overflow:hidden">AXF</div>
<div style="left:327px;top:333.55px;width:9px;height:5.40px;opacity:0.75;color:#2a2ab8;font:bold 5.40px/5.40px 'Liberation Mono';letter-spacing:-0.04px;white-space:nowrap;overflow:hidden">MDN</div>
<div style="left:341px;top:333.55px;width:9px;height:5.40px;opacity:0.75;color:#2a2ab8;font:bold 5.40px/5.40px 'Liberation Mono';letter-spacing:-0.04px;white-space:nowrap;overflow:hidden">#DE</div>
<div style="left:355px;top:330px;width:12.5px;height:12.5px;background:#d8dbe0"></div>
<div style="left:357px;top:331px;width:9px;height:10.5px;background:radial-gradient(circle at 50% 40%,#f2d6c0 0 35%,#222 36% 55%,transparent 56%),linear-gradient(transparent 72%,#d03030 72%)"></div>
<div style="left:370px;top:332.73px;width:11px;height:4.68px;opacity:1.00;color:#111;font:bold 4.68px/4.68px 'Liberation Mono';letter-spacing:0.29px;white-space:nowrap;overflow:hidden">KKU</div>
<div style="left:369px;top:337.73px;width:15px;height:4.68px;opacity:1.00;color:#e02828;font:bold 4.68px/4.68px 'Liberation Mono';letter-spacing:0.19px;white-space:nowrap;overflow:hidden">4EUN#</div>
<div style="left:7px;top:343.5px;width:69px;height:6px;background:linear-gradient(#e0e0e0,#c8c8c8)"></div>
<div style="left:9px;top:344.73px;width:9px;height:4.68px;opacity:0.94;color:#111;font:bold 4.68px/4.68px 'Liberation Mono';letter-spacing:0.29px;white-space:nowrap;overflow:hidden">FW@</div>
<div style="left:63px;top:346px;width:3px;height:2px;background:#333;clip-path:polygon(0 0,100% 0,50% 100%)"></div>
<div style="left:68px;top:344.82px;width:7px;height:4.32px;opacity:0.75;color:#333;font:bold 4.32px/4.32px 'Liberation Mono';letter-spacing:0.21px;white-space:nowrap;overflow:hidden">KM</div>
<div style="left:7px;top:349.5px;width:69px;height:6.5px;background:#f0f0f0"></div>
<div style="left:8px;top:349.5px;width:16px;height:6.5px;background:#fff"></div>
<div style="left:25px;top:349.5px;width:15px;height:6.5px;background:#fff;border-left:0.5px solid #bbb;border-right:0.5px solid #bbb"></div>
<div style="left:41px;top:349.5px;width:15px;height:6.5px;background:#f5f5f5;border-right:0.5px solid #aaa"></div>
<div style="left:10px;top:350.94px;width:13px;height:5.04px;opacity:0.75;color:#234;font:bold 5.04px/5.04px 'Liberation Mono';letter-spacing:0.28px;white-space:nowrap;overflow:hidden">EHXA</div>
<div style="left:27px;top:350.94px;width:12px;height:5.04px;opacity:0.75;color:#235;font:bold 5.04px/5.04px 'Liberation Mono';letter-spacing:0.28px;white-space:nowrap;overflow:hidden">RWX</div>
<div style="left:43px;top:350.94px;width:12px;height:5.04px;opacity:0.75;color:#333;font:bold 5.04px/5.04px 'Liberation Mono';letter-spacing:0.28px;white-space:nowrap;overflow:hidden">DBB</div>
<div style="left:7px;top:356px;width:69px;height:258px;background:#fff"></div>
<div style="left:76px;top:343.5px;width:2px;height:270.5px;background:#d4d4d4"></div>
<div style="left:9.0px;top:357.7px;width:5px;height:4.5px;background:#7fa0d8;opacity:0.8;border:0.5px solid rgba(40,60,120,0.6);box-sizing:border-box"></div>
<div style="left:15.5px;top:357.55px;width:19px;height:5.40px;opacity:0.85;color:#111;font:bold 5.40px/5.40px 'Liberation Mono';letter-spacing:-0.14px;white-space:nowrap;overflow:hidden">W@4DZF</div>
<div style="left:13.8px;top:362.9px;width:5px;height:4.5px;background:#aabde0;opacity:0.8;border:0.5px solid rgba(40,60,120,0.6);box-sizing:border-box"></div>
<div style="left:20.3px;top:362.75px;width:7px;height:5.40px;opacity:0.85;color:#111;font:bold 5.40px/5.40px 'Liberation Mono';letter-spacing:-0.14px;white-space:nowrap;overflow:hidden">H@</div>
<div style="left:18.6px;top:368.2px;width:5px;height:4.5px;background:#e8eef8;opacity:0.8;border:0.5px solid rgba(40,60,120,0.6);box-sizing:border-box"></div>
<div style="left:25.1px;top:368.05px;width:23px;height:5.40px;opacity:0.85;color:#111;font:bold 5.40px/5.40px 'Liberation Mono';letter-spacing:-0.14px;white-space:nowrap;overflow:hidden">MEAD@RW</div>
<div style="left:18.6px;top:373.21999999999997px;width:5px;height:4.5px;background:#e8eef8;opacity:0.8;border:0.5px solid rgba(40,60,120,0.6);box-sizing:border-box"></div>
<div style="left:25.1px;top:373.07px;width:23px;height:5.40px;opacity:0.85;color:#111;font:bold 5.40px/5.40px 'Liberation Mono';letter-spacing:-0.14px;white-space:nowrap;overflow:hidden">W#NNRWM</div>
<div style="left:18.6px;top:378.24px;width:5px;height:4.5px;background:#e8eef8;opacity:0.8;border:0.5px solid rgba(40,60,120,0.6);box-sizing:border-box"></div>
<div style="left:25.1px;top:378.09px;width:19px;height:5.40px;opacity:0.85;color:#111;font:bold 5.40px/5.40px 'Liberation Mono';letter-spacing:-0.14px;white-space:nowrap;overflow:hidden">A@4ZDX</div>
<div style="left:18.6px;top:383.26px;width:5px;height:4.5px;background:#e8eef8;opacity:0.8;border:0.5px solid rgba(40,60,120,0.6);box-sizing:border-box"></div>
<div style="left:25.1px;top:383.11px;width:25px;height:5.40px;opacity:0.85;color:#111;font:bold 5.40px/5.40px 'Liberation Mono';letter-spacing:-0.14px;white-space:nowrap;overflow:hidden">XZBDBZUE</div>
<div style="left:18.6px;top:388.28px;width:5px;height:4.5px;background:#e8eef8;opacity:0.8;border:0.5px solid rgba(40,60,120,0.6);box-sizing:border-box"></div>
<div style="left:25.1px;top:388.13px;width:21px;height:5.40px;opacity:0.85;color:#111;font:bold 5.40px/5.40px 'Liberation Mono';letter-spacing:-0.14px;white-space:nowrap;overflow:hidden">BHR4ENH</div>
<div style="left:18.6px;top:393.3px;width:5px;height:4.5px;background:#e8eef8;opacity:0.8;border:0.5px solid rgba(40,60,120,0.6);box-sizing:border-box"></div>
<div style="left:25.1px;top:393.15px;width:19px;height:5.40px;opacity:0.85;color:#111;font:bold 5.40px/5.40px 'Liberation Mono';letter-spacing:-0.14px;white-space:nowrap;overflow:hidden">FNAU4R</div>
<div style="left:18.6px;top:398.32px;width:5px;height:4.5px;background:#e8eef8;opacity:0.8;border:0.5px solid rgba(40,60,120,0.6);box-sizing:border-box"></div>
<div style="left:25.1px;top:398.17px;width:21px;height:5.40px;opacity:0.85;color:#111;font:bold 5.40px/5.40px 'Liberation Mono';letter-spacing:-0.14px;white-space:nowrap;overflow:hidden">KUXZEHZ</div>
<div style="left:18.6px;top:403.34px;width:5px;height:4.5px;background:#e8eef8;opacity:0.8;border:0.5px solid rgba(40,60,120,0.6);box-sizing:border-box"></div>
<div style="left:25.1px;top:403.19px;width:19px;height:5.40px;opacity:0.85;color:#111;font:bold 5.40px/5.40px 'Liberation Mono';letter-spacing:-0.14px;white-space:nowrap;overflow:hidden">NRK#UA</div>
<div style="left:18.6px;top:408.35999999999996px;width:5px;height:4.5px;background:#e8eef8;opacity:0.8;border:0.5px solid rgba(40,60,120,0.6);box-sizing:border-box"></div>
<div style="left:25.1px;top:408.21px;width:23px;height:5.40px;opacity:0.85;color:#111;font:bold 5.40px/5.40px 'Liberation Mono';letter-spacing:-0.14px;white-space:nowrap;overflow:hidden">7REF7BU</div>
<div style="left:18.6px;top:413.38px;width:5px;height:4.5px;background:#e8eef8;opacity:0.8;border:0.5px solid rgba(40,60,120,0.6);box-sizing:border-box"></div>
<div style="left:25.1px;top:413.23px;width:25px;height:5.40px;opacity:0.85;color:#111;font:bold 5.40px/5.40px 'Liberation Mono';letter-spacing:-0.14px;white-space:nowrap;overflow:hidden">F#@BWEEH</div>
<div style="left:18.6px;top:418.4px;width:5px;height:4.5px;background:#e8eef8;opacity:0.8;border:0.5px solid rgba(40,60,120,0.6);box-sizing:border-box"></div>
<div style="left:25.1px;top:418.25px;width:21px;height:5.40px;opacity:0.85;color:#111;font:bold 5.40px/5.40px 'Liberation Mono';letter-spacing:-0.14px;white-space:nowrap;overflow:hidden">ZDX7DE7</div>
<div style="left:18.6px;top:423.42px;width:5px;height:4.5px;background:#e8eef8;opacity:0.8;border:0.5px solid rgba(40,60,120,0.6);box-sizing:border-box"></div>
<div style="left:25.1px;top:423.27px;width:25px;height:5.40px;opacity:0.85;color:#111;font:bold 5.40px/5.40px 'Liberation Mono';letter-spacing:-0.14px;white-space:nowrap;overflow:hidden">XW#HWBU4</div>
<div style="left:18.6px;top:428.44px;width:5px;height:4.5px;background:#e8eef8;opacity:0.8;border:0.5px solid rgba(40,60,120,0.6);box-sizing:border-box"></div>
<div style="left:25.1px;top:428.29px;width:19px;height:5.40px;opacity:0.85;color:#111;font:bold 5.40px/5.40px 'Liberation Mono';letter-spacing:-0.14px;white-space:nowrap;overflow:hidden">DXBNH@</div>
<div style="left:18.6px;top:433.46px;width:5px;height:4.5px;background:#e8eef8;opacity:0.8;border:0.5px solid rgba(40,60,120,0.6);box-sizing:border-box"></div>
<div style="left:25.1px;top:433.31px;width:21px;height:5.40px;opacity:0.85;color:#111;font:bold 5.40px/5.40px 'Liberation Mono';letter-spacing:-0.14px;white-space:nowrap;overflow:hidden">HR4H74Z</div>
<div style="left:18.6px;top:438.47999999999996px;width:5px;height:4.5px;background:#e8eef8;opacity:0.8;border:0.5px solid rgba(40,60,120,0.6);box-sizing:border-box"></div>
<div style="left:25.1px;top:438.33px;width:19px;height:5.40px;opacity:0.85;color:#111;font:bold 5.40px/5.40px 'Liberation Mono';letter-spacing:-0.14px;white-space:nowrap;overflow:hidden">R@#B7X</div>
<div style="left:18.6px;top:443.5px;width:5px;height:4.5px;background:#e8eef8;opacity:0.8;border:0.5px solid rgba(40,60,120,0.6);box-sizing:border-box"></div>
<div style="left:25.1px;top:443.35px;width:21px;height:5.40px;opacity:0.85;color:#111;font:bold 5.40px/5.40px 'Liberation Mono';letter-spacing:-0.14px;white-space:nowrap;overflow:hidden">BWBMZWX</div>
<div style="left:13.8px;top:449.2px;width:5px;height:4.5px;background:#aabde0;opacity:0.8;border:0.5px solid rgba(40,60,120,0.6);box-sizing:border-box"></div>
<div style="left:20.3px;top:449.05px;width:6px;height:5.40px;opacity:0.85;color:#111;font:bold 5.40px/5.40px 'Liberation Mono';letter-spacing:-0.14px;white-space:nowrap;overflow:hidden">WZ</div>
<div style="left:18.6px;top:454.2px;width:5px;height:4.5px;background:#e8eef8;opacity:0.8;border:0.5px solid rgba(40,60,120,0.6);box-sizing:border-box"></div>
<div style="left:25.1px;top:454.05px;width:25px;height:5.40px;opacity:0.85;color:#111;font:bold 5.40px/5.40px 'Liberation Mono';letter-spacing:-0.14px;white-space:nowrap;overflow:hidden">D#ARHRWK</div>
<div style="left:18.6px;top:459.27px;width:5px;height:4.5px;background:#e8eef8;opacity:0.8;border:0.5px solid rgba(40,60,120,0.6);box-sizing:border-box"></div>
<div style="left:24.400000000000002px;top:458.77px;width:23.5px;height:4.4px;background:#3468c8"></div>
<div style="left:25.1px;top:459.40px;width:23px;height:4.68px;opacity:0.75;color:#fff;font:bold 4.68px/4.68px 'Liberation Mono';letter-spacing:0.29px;white-space:nowrap;overflow:hidden">7DFMWKD</div>
<div style="left:18.6px;top:464.34px;width:5px;height:4.5px;background:#e8eef8;opacity:0.8;border:0.5px solid rgba(40,60,120,0.6);box-sizing:border-box"></div>
<div style="left:25.1px;top:464.19px;width:21px;height:5.40px;opacity:0.85;color:#111;font:bold 5.40px/5.40px 'Liberation Mono';letter-spacing:-0.14px;white-space:nowrap;overflow:hidden">RXDBH7D</div>
<div style="left:18.6px;top:469.40999999999997px;width:5px;height:4.5px;background:#e8eef8;opacity:0.8;border:0.5px solid rgba(40,60,120,0.6);box-sizing:border-box"></div>
<div style="left:25.1px;top:469.26px;width:25px;height:5.40px;opacity:0.85;color:#111;font:bold 5.40px/5.40px 'Liberation Mono';letter-spacing:-0.14px;white-space:nowrap;overflow:hidden">FXBN@EE@</div>
<div style="left:18.6px;top:474.47999999999996px;width:5px;height:4.5px;background:#e8eef8;opacity:0.8;border:0.5px solid rgba(40,60,120,0.6);box-sizing:border-box"></div>
<div style="left:25.1px;top:474.33px;width:21px;height:5.40px;opacity:0.85;color:#111;font:bold 5.40px/5.40px 'Liberation Mono';letter-spacing:-0.14px;white-space:nowrap;overflow:hidden">FZDRNAD</div>
<div style="left:18.6px;top:479.55px;width:5px;height:4.5px;background:#e8eef8;opacity:0.8;border:0.5px solid rgba(40,60,120,0.6);box-sizing:border-box"></div>
<div style="left:25.1px;top:479.40px;width:19px;height:5.40px;opacity:0.85;color:#111;font:bold 5.40px/5.40px 'Liberation Mono';letter-spacing:-0.14px;white-space:nowrap;overflow:hidden">7FBHH7</div>
<div style="left:18.6px;top:484.62px;width:5px;height:4.5px;background:#e8eef8;opacity:0.8;border:0.5px solid rgba(40,60,120,0.6);box-sizing:border-box"></div>
<div style="left:25.1px;top:484.47px;width:21px;height:5.40px;opacity:0.85;color:#111;font:bold 5.40px/5.40px 'Liberation Mono';letter-spacing:-0.14px;white-space:nowrap;overflow:hidden">W7K4AWU</div>
<div style="left:18.6px;top:489.69px;width:5px;height:4.5px;background:#e8eef8;opacity:0.8;border:0.5px solid rgba(40,60,120,0.6);box-sizing:border-box"></div>
<div style="left:25.1px;top:489.54px;width:25px;height:5.40px;opacity:0.85;color:#111;font:bold 5.40px/5.40px 'Liberation Mono';letter-spacing:-0.14px;white-space:nowrap;overflow:hidden">WFM@@UDR</div>
<div style="left:18.6px;top:494.76px;width:5px;height:4.5px;background:#e8eef8;opacity:0.8;border:0.5px solid rgba(40,60,120,0.6);box-sizing:border-box"></div>
<div style="left:25.1px;top:494.61px;width:21px;height:5.40px;opacity:0.85;color:#111;font:bold 5.40px/5.40px 'Liberation Mono';letter-spacing:-0.14px;white-space:nowrap;overflow:hidden">KBZDDMU</div>
<div style="left:18.6px;top:499.83px;width:5px;height:4.5px;background:#e8eef8;opacity:0.8;border:0.5px solid rgba(40,60,120,0.6);box-sizing:border-box"></div>
<div style="left:25.1px;top:499.68px;width:21px;height:5.40px;opacity:0.85;color:#111;font:bold 5.40px/5.40px 'Liberation Mono';letter-spacing:-0.14px;white-space:nowrap;overflow:hidden">WFN7KMN</div>
<div style="left:18.6px;top:504.9px;width:5px;height:4.5px;background:#e8eef8;opacity:0.8;border:0.5px solid rgba(40,60,120,0.6);box-sizing:border-box"></div>
<div style="left:25.1px;top:504.75px;width:19px;height:5.40px;opacity:0.85;color:#111;font:bold 5.40px/5.40px 'Liberation Mono';letter-spacing:-0.14px;white-space:nowrap;overflow:hidden">E#F7KU</div>
<div style="left:18.6px;top:509.96999999999997px;width:5px;height:4.5px;background:#e8eef8;opacity:0.8;border:0.5px solid rgba(40,60,120,0.6);box-sizing:border-box"></div>
<div style="left:25.1px;top:509.82px;width:19px;height:5.40px;opacity:0.85;color:#111;font:bold 5.40px/5.40px 'Liberation Mono';letter-spacing:-0.14px;white-space:nowrap;overflow:hidden">7#FFAM</div>
<div style="left:18.6px;top:515.0400000000001px;width:5px;height:4.5px;background:#e8eef8;opacity:0.8;border:0.5px solid rgba(40,60,120,0.6);box-sizing:border-box"></div>
<div style="left:25.1px;top:514.89px;width:21px;height:5.40px;opacity:0.85;color:#111;font:bold 5.40px/5.40px 'Liberation Mono';letter-spacing:-0.14px;white-space:nowrap;overflow:hidden">B#FXA#4</div>
<div style="left:18.6px;top:520.11px;width:5px;height:4.5px;background:#e8eef8;opacity:0.8;border:0.5px solid rgba(40,60,120,0.6);box-sizing:border-box"></div>
<div style="left:25.1px;top:519.96px;width:21px;height:5.40px;opacity:0.85;color:#111;font:bold 5.40px/5.40px 'Liberation Mono';letter-spacing:-0.14px;white-space:nowrap;overflow:hidden">77U@B@7</div>
<div style="left:18.6px;top:525.1800000000001px;width:5px;height:4.5px;background:#e8eef8;opacity:0.8;border:0.5px solid rgba(40,60,120,0.6);box-sizing:border-box"></div>
<div style="left:25.1px;top:525.03px;width:21px;height:5.40px;opacity:0.85;color:#111;font:bold 5.40px/5.40px 'Liberation Mono';letter-spacing:-0.14px;white-space:nowrap;overflow:hidden">F#7MUN4</div>
<div style="left:18.6px;top:530.25px;width:5px;height:4.5px;background:#e8eef8;opacity:0.8;border:0.5px solid rgba(40,60,120,0.6);box-sizing:border-box"></div>
<div style="left:25.1px;top:530.10px;width:21px;height:5.40px;opacity:0.85;color:#111;font:bold 5.40px/5.40px 'Liberation Mono';letter-spacing:-0.14px;white-space:nowrap;overflow:hidden">Z4Z7MH4</div>
<div style="left:13.8px;top:535.2px;width:5px;height:4.5px;background:#6a7ad8;opacity:0.8;border:0.5px solid rgba(40,60,120,0.6);box-sizing:border-box"></div>
<div style="left:20.3px;top:535.05px;width:7px;height:5.40px;opacity:0.85;color:#111;font:bold 5.40px/5.40px 'Liberation Mono';letter-spacing:-0.14px;white-space:nowrap;overflow:hidden">ZZ</div>
<div style="left:18.6px;top:540.7px;width:5px;height:4.5px;background:#f0d070;opacity:0.8;border:0.5px solid rgba(40,60,120,0.6);box-sizing:border-box"></div>
<div style="left:25.1px;top:540.55px;width:21px;height:5.40px;opacity:0.85;color:#111;font:bold 5.40px/5.40px 'Liberation Mono';letter-spacing:-0.14px;white-space:nowrap;overflow:hidden">M7KW#FD</div>
<div style="left:23.4px;top:545.7px;width:5px;height:4.5px;background:#9ad090;opacity:0.8;border:0.5px solid rgba(40,60,120,0.6);box-sizing:border-box"></div>
<div style="left:29.9px;top:545.55px;width:7px;height:5.40px;opacity:0.85;color:#111;font:bold 5.40px/5.40px 'Liberation Mono';letter-spacing:-0.14px;white-space:nowrap;overflow:hidden">EE</div>
<div style="left:23.4px;top:550.7px;width:5px;height:4.5px;background:#6a8ad8;opacity:0.8;border:0.5px solid rgba(40,60,120,0.6);box-sizing:border-box"></div>
<div style="left:29.9px;top:550.55px;width:8px;height:5.40px;opacity:0.85;color:#111;font:bold 5.40px/5.40px 'Liberation Mono';letter-spacing:-0.14px;white-space:nowrap;overflow:hidden">HKM</div>
<div style="left:23.4px;top:555.7px;width:5px;height:4.5px;background:#c0c8e0;opacity:0.8;border:0.5px solid rgba(40,60,120,0.6);box-sizing:border-box"></div>
<div style="left:29.9px;top:555.55px;width:7px;height:5.40px;opacity:0.85;color:#111;font:bold 5.40px/5.40px 'Liberation Mono';letter-spacing:-0.14px;white-space:nowrap;overflow:hidden">UA</div>
<div style="left:18.6px;top:560.2px;width:5px;height:4.5px;background:#f0d070;opacity:0.8;border:0.5px solid rgba(40,60,120,0.6);box-sizing:border-box"></div>
<div style="left:25.1px;top:560.05px;width:17px;height:5.40px;opacity:0.85;color:#111;font:bold 5.40px/5.40px 'Liberation Mono';letter-spacing:-0.14px;white-space:nowrap;overflow:hidden">XKNZE</div>
<div style="left:23.4px;top:565.7px;width:5px;height:4.5px;background:#b8e0b0;opacity:0.8;border:0.5px solid rgba(40,60,120,0.6);box-sizing:border-box"></div>
<div style="left:29.9px;top:565.55px;width:19px;height:5.40px;opacity:0.85;color:#111;font:bold 5.40px/5.40px 'Liberation Mono';letter-spacing:-0.14px;white-space:nowrap;overflow:hidden">A4F4WK</div>
<div style="left:23.4px;top:570.7px;width:5px;height:4.5px;background:#f0e8c0;opacity:0.8;border:0.5px solid rgba(40,60,120,0.6);box-sizing:border-box"></div>
<div style="left:29.9px;top:570.55px;width:19px;height:5.40px;opacity:0.85;color:#111;font:bold 5.40px/5.40px 'Liberation Mono';letter-spacing:-0.14px;white-space:nowrap;overflow:hidden">KB4RFF</div>
<div style="left:9.0px;top:575.2px;width:5px;height:4.5px;background:#7a90c8;opacity:0.8;border:0.5px solid rgba(40,60,120,0.6);box-sizing:border-box"></div>
<div style="left:15.5px;top:575.05px;width:9px;height:5.40px;opacity:0.85;color:#111;font:bold 5.40px/5.40px 'Liberation Mono';letter-spacing:-0.14px;white-space:nowrap;overflow:hidden">UEW</div>
<div style="left:13.8px;top:580.7px;width:5px;height:4.5px;background:#6ac070;opacity:0.8;border:0.5px solid rgba(40,60,120,0.6);box-sizing:border-box"></div>
<div style="left:20.3px;top:580.55px;width:7px;height:5.40px;opacity:0.85;color:#111;font:bold 5.40px/5.40px 'Liberation Mono';letter-spacing:-0.14px;white-space:nowrap;overflow:hidden">RH</div>
<div style="left:9.0px;top:586.2px;width:5px;height:4.5px;background:#304070;opacity:0.8;border:0.5px solid rgba(40,60,120,0.6);box-sizing:border-box"></div>
<div style="left:15.5px;top:586.05px;width:8px;height:5.40px;opacity:0.85;color:#111;font:bold 5.40px/5.40px 'Liberation Mono';letter-spacing:-0.14px;white-space:nowrap;overflow:hidden">DKA</div>
<div style="left:13.8px;top:591.2px;width:5px;height:4.5px;background:#7a90c8;opacity:0.8;border:0.5px solid rgba(40,60,120,0.6);box-sizing:border-box"></div>
<div style="left:20.3px;top:591.05px;width:15px;height:5.40px;opacity:0.85;color:#111;font:bold 5.40px/5.40px 'Liberation Mono';letter-spacing:-0.14px;white-space:nowrap;overflow:hidden">WFM7F</div>
<div style="left:9.0px;top:596.2px;width:5px;height:4.5px;background:#50b060;opacity:0.8;border:0.5px solid rgba(40,60,120,0.6);box-sizing:border-box"></div>
<div style="left:15.5px;top:596.05px;width:8px;height:5.40px;opacity:0.85;color:#111;font:bold 5.40px/5.40px 'Liberation Mono';letter-spacing:-0.14px;white-space:nowrap;overflow:hidden">KAW</div>
<div style="left:13.8px;top:601.2px;width:5px;height:4.5px;background:#d0d8f0;opacity:0.8;border:0.5px solid rgba(40,60,120,0.6);box-sizing:border-box"></div>
<div style="left:20.3px;top:601.05px;width:10px;height:5.40px;opacity:0.85;color:#111;font:bold 5.40px/5.40px 'Liberation Mono';letter-spacing:-0.14px;white-space:nowrap;overflow:hidden">#4@</div>
<div style="left:13.8px;top:606.2px;width:5px;height:4.5px;background:#d0d8f0;opacity:0.8;border:0.5px solid rgba(40,60,120,0.6);box-sizing:border-box"></div>
<div style="left:20.3px;top:606.05px;width:9px;height:5.40px;opacity:0.85;color:#111;font:bold 5.40px/5.40px 'Liberation Mono';letter-spacing:-0.14px;white-space:nowrap;overflow:hidden">AFM</div>
<div style="left:9.0px;top:611.2px;width:5px;height:4.5px;background:#f0d070;opacity:0.8;border:0.5px solid rgba(40,60,120,0.6);box-sizing:border-box"></div>
<div style="left:15.5px;top:611.05px;width:8px;height:5.40px;opacity:0.85;color:#111;font:bold 5.40px/5.40px 'Liberation Mono';letter-spacing:-0.14px;white-space:nowrap;overflow:hidden">KUU</div>
<div style="left:11.5px;top:362px;width:0.5px;height:250px;background:repeating-linear-gradient(#aaa 0 0.5px,transparent 0.5px 1.5px)"></div>
<div style="left:16px;top:367px;width:0.5px;height:165px;background:repeating-linear-gradient(#aaa 0 0.5px,transparent 0.5px 1.5px)"></div>
<div style="left:78px;top:343.5px;width:305px;height:8.5px;background:#fff"></div>
<div style="left:80px;top:346px;width:3px;height:3px;background:#d02828;border-radius:50% 50% 0 0"></div>
<div style="left:85px;top:345.64px;width:33px;height:5.04px;opacity:0.94;color:#222;font:bold 5.04px/5.04px 'Liberation Mono';letter-spacing:0.28px;white-space:nowrap;overflow:hidden">MFNE@#@N@M</div>
<div style="left:78px;top:352px;width:17.5px;height:224px;background:#2c2c2d"></div>
<div style="left:93.8px;top:352px;width:1.8px;height:224px;background:#3d3b38"></div>
<div style="left:95px;top:352px;width:288px;height:224px;background:#161b2f"></div>
<div style="left:84.5px;top:353.24px;width:7.5px;height:5.04px;opacity:0.56;color:#c8c8c8;font:bold 5.04px/5.04px 'Liberation Mono';letter-spacing:-0.82px;white-space:nowrap;overflow:hidden">B#W</div>
<div style="left:120px;top:353.31px;width:48px;height:5.94px;opacity:0.78;color:#e0e0e0;font:normal 5.94px/5.94px 'Liberation Mono';letter-spacing:0.24px;white-space:nowrap;overflow:hidden">A7R4D#WWE#BDD</div>
<div style="left:169px;top:353.31px;width:14px;height:5.94px;opacity:0.88;color:#4fb04f;font:normal 5.94px/5.94px 'Liberation Mono';letter-spacing:0.24px;white-space:nowrap;overflow:hidden">#ZRU</div>
<div style="left:84.5px;top:359.22px;width:7.5px;height:5.04px;opacity:0.56;color:#c8c8c8;font:bold 5.04px/5.04px 'Liberation Mono';letter-spacing:-0.82px;white-space:nowrap;overflow:hidden">K#E</div>
<div style="left:113px;top:359.30px;width:8px;height:5.94px;opacity:1.00;color:#3f7fe6;font:normal 5.94px/5.94px 'Liberation Mono';letter-spacing:0.24px;white-space:nowrap;overflow:hidden">NX</div>
<div style="left:122px;top:359.30px;width:4px;height:5.94px;opacity:0.94;color:#d84040;font:normal 5.94px/5.94px 'Liberation Mono';letter-spacing:0.24px;white-space:nowrap;overflow:hidden">U</div>
<div style="left:84.5px;top:365.20px;width:7.5px;height:5.04px;opacity:0.56;color:#c8c8c8;font:bold 5.04px/5.04px 'Liberation Mono';letter-spacing:-0.82px;white-space:nowrap;overflow:hidden">R7W</div>
<div style="left:120px;top:365.27px;width:9px;height:5.94px;opacity:0.78;color:#e0e0e0;font:normal 5.94px/5.94px 'Liberation Mono';letter-spacing:0.24px;white-space:nowrap;overflow:hidden">U7</div>
<div style="left:130px;top:365.27px;width:13px;height:5.94px;opacity:0.78;color:#e0e0e0;font:normal 5.94px/5.94px 'Liberation Mono';letter-spacing:0.24px;white-space:nowrap;overflow:hidden">WD7</div>
<div style="left:144px;top:365.27px;width:6px;height:5.94px;opacity:0.94;color:#d84040;font:normal 5.94px/5.94px 'Liberation Mono';letter-spacing:0.24px;white-space:nowrap;overflow:hidden">DU</div>
<div style="left:84.5px;top:371.18px;width:7.5px;height:5.04px;opacity:0.56;color:#c8c8c8;font:bold 5.04px/5.04px 'Liberation Mono';letter-spacing:-0.82px;white-space:nowrap;overflow:hidden">4W7</div>
<div style="left:120px;top:371.25px;width:48px;height:5.94px;opacity:0.78;color:#e0e0e0;font:normal 5.94px/5.94px 'Liberation Mono';letter-spacing:0.24px;white-space:nowrap;overflow:hidden">KDKUZUERUU@F7</div>
<div style="left:169px;top:371.25px;width:14px;height:5.94px;opacity:0.88;color:#4fb04f;font:normal 5.94px/5.94px 'Liberation Mono';letter-spacing:0.24px;white-space:nowrap;overflow:hidden">HXX4</div>
<div style="left:84.5px;top:377.16px;width:7.5px;height:5.04px;opacity:0.56;color:#c8c8c8;font:bold 5.04px/5.04px 'Liberation Mono';letter-spacing:-0.82px;white-space:nowrap;overflow:hidden">WND</div>
<div style="left:113px;top:377.24px;width:8px;height:5.94px;opacity:1.00;color:#3f7fe6;font:normal 5.94px/5.94px 'Liberation Mono';letter-spacing:0.24px;white-space:nowrap;overflow:hidden">XE</div>
<div style="left:122px;top:377.24px;width:4px;height:5.94px;opacity:0.94;color:#d84040;font:normal 5.94px/5.94px 'Liberation Mono';letter-spacing:0.24px;white-space:nowrap;overflow:hidden">W</div>
<div style="left:84.5px;top:383.14px;width:7.5px;height:5.04px;opacity:0.56;color:#c8c8c8;font:bold 5.04px/5.04px 'Liberation Mono';letter-spacing:-0.82px;white-space:nowrap;overflow:hidden">BUW</div>
<div style="left:120px;top:383.21px;width:9px;height:5.94px;opacity:0.78;color:#e0e0e0;font:normal 5.94px/5.94px 'Liberation Mono';letter-spacing:0.24px;white-space:nowrap;overflow:hidden">H@</div>
<div style="left:130px;top:383.21px;width:13px;height:5.94px;opacity:0.78;color:#e0e0e0;font:normal 5.94px/5.94px 'Liberation Mono';letter-spacing:0.24px;white-space:nowrap;overflow:hidden">DDB</div>
<div style="left:144px;top:383.21px;width:6px;height:5.94px;opacity:0.94;color:#d84040;font:normal 5.94px/5.94px 'Liberation Mono';letter-spacing:0.24px;white-space:nowrap;overflow:hidden">A7</div>
<div style="left:84.5px;top:389.12px;width:7.5px;height:5.04px;opacity:0.56;color:#c8c8c8;font:bold 5.04px/5.04px 'Liberation Mono';letter-spacing:-0.82px;white-space:nowrap;overflow:hidden">EDN</div>
<div style="left:120px;top:389.19px;width:48px;height:5.94px;opacity:0.78;color:#e0e0e0;font:normal 5.94px/5.94px 'Liberation Mono';letter-spacing:0.24px;white-space:nowrap;overflow:hidden">NDKK@7ZXWRUU7</div>
<div style="left:169px;top:389.19px;width:14px;height:5.94px;opacity:0.88;color:#4fb04f;font:normal 5.94px/5.94px 'Liberation Mono';letter-spacing:0.24px;white-space:nowrap;overflow:hidden">HHA@</div>
<div style="left:84.5px;top:395.10px;width:7.5px;height:5.04px;opacity:0.56;color:#c8c8c8;font:bold 5.04px/5.04px 'Liberation Mono';letter-spacing:-0.82px;white-space:nowrap;overflow:hidden">4BH</div>
<div style="left:105px;top:395.18px;width:6px;height:5.94px;opacity:1.00;color:#3f7fe6;font:normal 5.94px/5.94px 'Liberation Mono';letter-spacing:0.24px;white-space:nowrap;overflow:hidden">N4</div>
<div style="left:112px;top:395.18px;width:6px;height:5.94px;opacity:1.00;color:#3f7fe6;font:normal 5.94px/5.94px 'Liberation Mono';letter-spacing:0.24px;white-space:nowrap;overflow:hidden">FM</div>
<div style="left:84.5px;top:401.08px;width:7.5px;height:5.04px;opacity:0.56;color:#c8c8c8;font:bold 5.04px/5.04px 'Liberation Mono';letter-spacing:-0.82px;white-space:nowrap;overflow:hidden">NXX</div>
<div style="left:105px;top:401.16px;width:7px;height:5.94px;opacity:1.00;color:#3f7fe6;font:normal 5.94px/5.94px 'Liberation Mono';letter-spacing:0.24px;white-space:nowrap;overflow:hidden">W@</div>
<div style="left:113px;top:401.16px;width:9px;height:5.94px;opacity:0.88;color:#4fb04f;font:normal 5.94px/5.94px 'Liberation Mono';letter-spacing:0.24px;white-space:nowrap;overflow:hidden">U@</div>
<div style="left:84.5px;top:407.06px;width:7.5px;height:5.04px;opacity:0.56;color:#c8c8c8;font:bold 5.04px/5.04px 'Liberation Mono';letter-spacing:-0.82px;white-space:nowrap;overflow:hidden">NUD</div>
<div style="left:113px;top:407.13px;width:7px;height:5.94px;opacity:1.00;color:#3f7fe6;font:normal 5.94px/5.94px 'Liberation Mono';letter-spacing:0.24px;white-space:nowrap;overflow:hidden">KH</div>
<div style="left:121px;top:407.13px;width:17px;height:5.94px;opacity:0.78;color:#e0e0e0;font:normal 5.94px/5.94px 'Liberation Mono';letter-spacing:0.24px;white-space:nowrap;overflow:hidden">WZFE</div>
<div style="left:84.5px;top:413.04px;width:7.5px;height:5.04px;opacity:0.56;color:#c8c8c8;font:bold 5.04px/5.04px 'Liberation Mono';letter-spacing:-0.82px;white-space:nowrap;overflow:hidden">7DH</div>
<div style="left:113px;top:413.12px;width:7px;height:5.94px;opacity:1.00;color:#3f7fe6;font:normal 5.94px/5.94px 'Liberation Mono';letter-spacing:0.24px;white-space:nowrap;overflow:hidden">FF</div>
<div style="left:121px;top:413.12px;width:4px;height:5.94px;opacity:0.94;color:#d84040;font:normal 5.94px/5.94px 'Liberation Mono';letter-spacing:0.24px;white-space:nowrap;overflow:hidden">R</div>
<div style="left:84.5px;top:419.02px;width:7.5px;height:5.04px;opacity:0.56;color:#c8c8c8;font:bold 5.04px/5.04px 'Liberation Mono';letter-spacing:-0.82px;white-space:nowrap;overflow:hidden">#R#</div>
<div style="left:120px;top:419.09px;width:9px;height:5.94px;opacity:0.78;color:#e0e0e0;font:normal 5.94px/5.94px 'Liberation Mono';letter-spacing:0.24px;white-space:nowrap;overflow:hidden">DR</div>
<div style="left:130px;top:419.09px;width:13px;height:5.94px;opacity:0.78;color:#e0e0e0;font:normal 5.94px/5.94px 'Liberation Mono';letter-spacing:0.24px;white-space:nowrap;overflow:hidden">XBE</div>
<div style="left:144px;top:419.09px;width:5px;height:5.94px;opacity:0.94;color:#d84040;font:normal 5.94px/5.94px 'Liberation Mono';letter-spacing:0.24px;white-space:nowrap;overflow:hidden">W</div>
<div style="left:84.5px;top:425.00px;width:7.5px;height:5.04px;opacity:0.56;color:#c8c8c8;font:bold 5.04px/5.04px 'Liberation Mono';letter-spacing:-0.82px;white-space:nowrap;overflow:hidden">XMH</div>
<div style="left:120px;top:425.07px;width:51px;height:5.94px;opacity:0.78;color:#e0e0e0;font:normal 5.94px/5.94px 'Liberation Mono';letter-spacing:0.24px;white-space:nowrap;overflow:hidden">NBH@UMNF#BANA</div>
<div style="left:172px;top:425.07px;width:13px;height:5.94px;opacity:0.88;color:#4fb04f;font:normal 5.94px/5.94px 'Liberation Mono';letter-spacing:0.24px;white-space:nowrap;overflow:hidden">Z#X</div>
<div style="left:84.5px;top:430.98px;width:7.5px;height:5.04px;opacity:0.56;color:#c8c8c8;font:bold 5.04px/5.04px 'Liberation Mono';letter-spacing:-0.82px;white-space:nowrap;overflow:hidden">EWE</div>
<div style="left:105px;top:431.06px;width:6px;height:5.94px;opacity:1.00;color:#3f7fe6;font:normal 5.94px/5.94px 'Liberation Mono';letter-spacing:0.24px;white-space:nowrap;overflow:hidden">@K</div>
<div style="left:112px;top:431.06px;width:6px;height:5.94px;opacity:1.00;color:#3f7fe6;font:normal 5.94px/5.94px 'Liberation Mono';letter-spacing:0.24px;white-space:nowrap;overflow:hidden">7H</div>
<div style="left:84.5px;top:436.96px;width:7.5px;height:5.04px;opacity:0.56;color:#c8c8c8;font:bold 5.04px/5.04px 'Liberation Mono';letter-spacing:-0.82px;white-space:nowrap;overflow:hidden">U#X</div>
<div style="left:105px;top:437.04px;width:7px;height:5.94px;opacity:1.00;color:#3f7fe6;font:normal 5.94px/5.94px 'Liberation Mono';letter-spacing:0.24px;white-space:nowrap;overflow:hidden">UK</div>
<div style="left:113px;top:437.04px;width:9px;height:5.94px;opacity:0.88;color:#4fb04f;font:normal 5.94px/5.94px 'Liberation Mono';letter-spacing:0.24px;white-space:nowrap;overflow:hidden">D4</div>
<div style="left:84.5px;top:442.94px;width:7.5px;height:5.04px;opacity:0.56;color:#c8c8c8;font:bold 5.04px/5.04px 'Liberation Mono';letter-spacing:-0.82px;white-space:nowrap;overflow:hidden">DRD</div>
<div style="left:113px;top:443.01px;width:7px;height:5.94px;opacity:1.00;color:#3f7fe6;font:normal 5.94px/5.94px 'Liberation Mono';letter-spacing:0.24px;white-space:nowrap;overflow:hidden">WD</div>
<div style="left:121px;top:443.01px;width:16px;height:5.94px;opacity:0.78;color:#e0e0e0;font:normal 5.94px/5.94px 'Liberation Mono';letter-spacing:0.24px;white-space:nowrap;overflow:hidden">RDUH</div>
<div style="left:84.5px;top:448.92px;width:7.5px;height:5.04px;opacity:0.56;color:#c8c8c8;font:bold 5.04px/5.04px 'Liberation Mono';letter-spacing:-0.82px;white-space:nowrap;overflow:hidden">4KA</div>
<div style="left:113px;top:449.00px;width:7px;height:5.94px;opacity:1.00;color:#3f7fe6;font:normal 5.94px/5.94px 'Liberation Mono';letter-spacing:0.24px;white-space:nowrap;overflow:hidden">7K</div>
<div style="left:121px;top:449.00px;width:4px;height:5.94px;opacity:0.94;color:#d84040;font:normal 5.94px/5.94px 'Liberation Mono';letter-spacing:0.24px;white-space:nowrap;overflow:hidden">H</div>
<div style="left:84.5px;top:454.90px;width:7.5px;height:5.04px;opacity:0.56;color:#c8c8c8;font:bold 5.04px/5.04px 'Liberation Mono';letter-spacing:-0.82px;white-space:nowrap;overflow:hidden">MZW</div>
<div style="left:120px;top:454.98px;width:9px;height:5.94px;opacity:0.78;color:#e0e0e0;font:normal 5.94px/5.94px 'Liberation Mono';letter-spacing:0.24px;white-space:nowrap;overflow:hidden">@A</div>
<div style="left:130px;top:454.98px;width:13px;height:5.94px;opacity:0.78;color:#e0e0e0;font:normal 5.94px/5.94px 'Liberation Mono';letter-spacing:0.24px;white-space:nowrap;overflow:hidden">RXE</div>
<div style="left:144px;top:454.98px;width:5px;height:5.94px;opacity:0.94;color:#d84040;font:normal 5.94px/5.94px 'Liberation Mono';letter-spacing:0.24px;white-space:nowrap;overflow:hidden">N</div>
<div style="left:84.5px;top:460.88px;width:7.5px;height:5.04px;opacity:0.56;color:#c8c8c8;font:bold 5.04px/5.04px 'Liberation Mono';letter-spacing:-0.82px;white-space:nowrap;overflow:hidden">U7R</div>
<div style="left:120px;top:460.95px;width:51px;height:5.94px;opacity:0.78;color:#e0e0e0;font:normal 5.94px/5.94px 'Liberation Mono';letter-spacing:0.24px;white-space:nowrap;overflow:hidden">HZNAUNWUUFZME</div>
<div style="left:172px;top:460.95px;width:13px;height:5.94px;opacity:0.88;color:#4fb04f;font:normal 5.94px/5.94px 'Liberation Mono';letter-spacing:0.24px;white-space:nowrap;overflow:hidden">EA7</div>
<div style="left:84.5px;top:466.86px;width:7.5px;height:5.04px;opacity:0.56;color:#c8c8c8;font:bold 5.04px/5.04px 'Liberation Mono';letter-spacing:-0.82px;white-space:nowrap;overflow:hidden">KMH</div>
<div style="left:113px;top:466.94px;width:6px;height:5.94px;opacity:1.00;color:#3f7fe6;font:normal 5.94px/5.94px 'Liberation Mono';letter-spacing:0.24px;white-space:nowrap;overflow:hidden">ND</div>
<div style="left:120px;top:466.94px;width:6px;height:5.94px;opacity:1.00;color:#3f7fe6;font:normal 5.94px/5.94px 'Liberation Mono';letter-spacing:0.24px;white-space:nowrap;overflow:hidden">RU</div>
<div style="left:84.5px;top:472.84px;width:7.5px;height:5.04px;opacity:0.56;color:#c8c8c8;font:bold 5.04px/5.04px 'Liberation Mono';letter-spacing:-0.82px;white-space:nowrap;overflow:hidden">4@7</div>
<div style="left:105px;top:472.92px;width:7px;height:5.94px;opacity:1.00;color:#3f7fe6;font:normal 5.94px/5.94px 'Liberation Mono';letter-spacing:0.24px;white-space:nowrap;overflow:hidden">AX</div>
<div style="left:113px;top:472.92px;width:9px;height:5.94px;opacity:0.88;color:#4fb04f;font:normal 5.94px/5.94px 'Liberation Mono';letter-spacing:0.24px;white-space:nowrap;overflow:hidden">KH</div>
<div style="left:84.5px;top:478.82px;width:7.5px;height:5.04px;opacity:0.56;color:#c8c8c8;font:bold 5.04px/5.04px 'Liberation Mono';letter-spacing:-0.82px;white-space:nowrap;overflow:hidden">7B#</div>
<div style="left:113px;top:478.90px;width:7px;height:5.94px;opacity:1.00;color:#3f7fe6;font:normal 5.94px/5.94px 'Liberation Mono';letter-spacing:0.24px;white-space:nowrap;overflow:hidden">KE</div>
<div style="left:121px;top:478.90px;width:16px;height:5.94px;opacity:0.78;color:#e0e0e0;font:normal 5.94px/5.94px 'Liberation Mono';letter-spacing:0.24px;white-space:nowrap;overflow:hidden">DZZH</div>
<div style="left:84.5px;top:484.80px;width:7.5px;height:5.04px;opacity:0.56;color:#c8c8c8;font:bold 5.04px/5.04px 'Liberation Mono';letter-spacing:-0.82px;white-space:nowrap;overflow:hidden">@RU</div>
<div style="left:113px;top:484.88px;width:7px;height:5.94px;opacity:1.00;color:#3f7fe6;font:normal 5.94px/5.94px 'Liberation Mono';letter-spacing:0.24px;white-space:nowrap;overflow:hidden">UN</div>
<div style="left:121px;top:484.88px;width:4px;height:5.94px;opacity:0.94;color:#d84040;font:normal 5.94px/5.94px 'Liberation Mono';letter-spacing:0.24px;white-space:nowrap;overflow:hidden">K</div>
<div style="left:84.5px;top:490.78px;width:7.5px;height:5.04px;opacity:0.56;color:#c8c8c8;font:bold 5.04px/5.04px 'Liberation Mono';letter-spacing:-0.82px;white-space:nowrap;overflow:hidden">ZN@</div>
<div style="left:120px;top:490.86px;width:9px;height:5.94px;opacity:0.78;color:#e0e0e0;font:normal 5.94px/5.94px 'Liberation Mono';letter-spacing:0.24px;white-space:nowrap;overflow:hidden">MB</div>
<div style="left:130px;top:490.86px;width:13px;height:5.94px;opacity:0.78;color:#e0e0e0;font:normal 5.94px/5.94px 'Liberation Mono';letter-spacing:0.24px;white-space:nowrap;overflow:hidden">FKW</div>
<div style="left:144px;top:490.86px;width:6px;height:5.94px;opacity:0.94;color:#d84040;font:normal 5.94px/5.94px 'Liberation Mono';letter-spacing:0.24px;white-space:nowrap;overflow:hidden">4K</div>
<div style="left:84.5px;top:496.76px;width:7.5px;height:5.04px;opacity:0.56;color:#c8c8c8;font:bold 5.04px/5.04px 'Liberation Mono';letter-spacing:-0.82px;white-space:nowrap;overflow:hidden">AMW</div>
<div style="left:120px;top:496.83px;width:53px;height:5.94px;opacity:0.78;color:#e0e0e0;font:normal 5.94px/5.94px 'Liberation Mono';letter-spacing:0.24px;white-space:nowrap;overflow:hidden">RNKM4A@ZHF4NNX</div>
<div style="left:84.5px;top:502.74px;width:7.5px;height:5.04px;opacity:0.56;color:#c8c8c8;font:bold 5.04px/5.04px 'Liberation Mono';letter-spacing:-0.82px;white-space:nowrap;overflow:hidden">#7F</div>
<div style="left:113px;top:502.81px;width:6px;height:5.94px;opacity:1.00;color:#3f7fe6;font:normal 5.94px/5.94px 'Liberation Mono';letter-spacing:0.24px;white-space:nowrap;overflow:hidden">4H</div>
<div style="left:120px;top:502.81px;width:6px;height:5.94px;opacity:1.00;color:#3f7fe6;font:normal 5.94px/5.94px 'Liberation Mono';letter-spacing:0.24px;white-space:nowrap;overflow:hidden">4E</div>
<div style="left:84.5px;top:508.72px;width:7.5px;height:5.04px;opacity:0.56;color:#c8c8c8;font:bold 5.04px/5.04px 'Liberation Mono';letter-spacing:-0.82px;white-space:nowrap;overflow:hidden">UK#</div>
<div style="left:105px;top:508.80px;width:6px;height:5.94px;opacity:1.00;color:#3f7fe6;font:normal 5.94px/5.94px 'Liberation Mono';letter-spacing:0.24px;white-space:nowrap;overflow:hidden">EX</div>
<div style="left:112px;top:508.80px;width:6px;height:5.94px;opacity:1.00;color:#3f7fe6;font:normal 5.94px/5.94px 'Liberation Mono';letter-spacing:0.24px;white-space:nowrap;overflow:hidden">DF</div>
<div style="left:84.5px;top:514.70px;width:7.5px;height:5.04px;opacity:0.56;color:#c8c8c8;font:bold 5.04px/5.04px 'Liberation Mono';letter-spacing:-0.82px;white-space:nowrap;overflow:hidden">UZR</div>
<div style="left:84.5px;top:520.68px;width:7.5px;height:5.04px;opacity:0.56;color:#c8c8c8;font:bold 5.04px/5.04px 'Liberation Mono';letter-spacing:-0.82px;white-space:nowrap;overflow:hidden">N7N</div>
<div style="left:97px;top:520.75px;width:6px;height:5.94px;opacity:1.00;color:#3f7fe6;font:normal 5.94px/5.94px 'Liberation Mono';letter-spacing:0.24px;white-space:nowrap;overflow:hidden">Z@</div>
<div style="left:104px;top:520.75px;width:6px;height:5.94px;opacity:1.00;color:#3f7fe6;font:normal 5.94px/5.94px 'Liberation Mono';letter-spacing:0.24px;white-space:nowrap;overflow:hidden">AN</div>
<div style="left:84.5px;top:526.66px;width:7.5px;height:5.04px;opacity:0.56;color:#c8c8c8;font:bold 5.04px/5.04px 'Liberation Mono';letter-spacing:-0.82px;white-space:nowrap;overflow:hidden">UWU</div>
<div style="left:78px;top:530.8px;width:305px;height:0.7px;background:#8a8f9a"></div>
<div style="left:93px;top:533.7px;width:2.5px;height:2.5px;background:#eee"></div>
<div style="left:84.5px;top:533.24px;width:7.5px;height:5.04px;opacity:0.56;color:#c8c8c8;font:bold 5.04px/5.04px 'Liberation Mono';letter-spacing:-0.82px;white-space:nowrap;overflow:hidden">@ZM</div>
<div style="left:97px;top:533.40px;width:6px;height:5.58px;opacity:0.90;color:#3f7fe6;font:normal 5.58px/5.58px 'Liberation Mono';letter-spacing:0.15px;white-space:nowrap;overflow:hidden">NH</div>
<div style="left:103px;top:533.40px;width:84px;height:5.58px;opacity:0.70;color:#e0e0e0;font:normal 5.58px/5.58px 'Liberation Mono';letter-spacing:0.15px;white-space:nowrap;overflow:hidden">RKAANFFE4RZK@A7AX@EEHFBB</div>
<div style="left:186px;top:533.40px;width:5px;height:5.58px;opacity:0.90;color:#3f7fe6;font:normal 5.58px/5.58px 'Liberation Mono';letter-spacing:0.15px;white-space:nowrap;overflow:hidden">7</div>
<div style="left:191px;top:533.40px;width:23px;height:5.58px;opacity:0.90;color:#3f7fe6;font:normal 5.58px/5.58px 'Liberation Mono';letter-spacing:0.15px;white-space:nowrap;overflow:hidden">NRR#EXW</div>
<div style="left:214px;top:533.40px;width:16px;height:5.58px;opacity:0.70;color:#e0e0e0;font:normal 5.58px/5.58px 'Liberation Mono';letter-spacing:0.15px;white-space:nowrap;overflow:hidden">AXN4#</div>
<div style="left:230px;top:533.40px;width:20px;height:5.58px;opacity:0.90;color:#3f7fe6;font:normal 5.58px/5.58px 'Liberation Mono';letter-spacing:0.15px;white-space:nowrap;overflow:hidden">BBHKZZ</div>
<div style="left:250px;top:533.40px;width:26px;height:5.58px;opacity:0.70;color:#e0e0e0;font:normal 5.58px/5.58px 'Liberation Mono';letter-spacing:0.15px;white-space:nowrap;overflow:hidden">ZXXU#MM</div>
<div style="left:279px;top:533.40px;width:13px;height:5.58px;opacity:0.90;color:#3f7fe6;font:normal 5.58px/5.58px 'Liberation Mono';letter-spacing:0.15px;white-space:nowrap;overflow:hidden">N#WE</div>
<div style="left:84.5px;top:538.84px;width:7.5px;height:5.04px;opacity:0.56;color:#c8c8c8;font:bold 5.04px/5.04px 'Liberation Mono';letter-spacing:-0.82px;white-space:nowrap;overflow:hidden">AMM</div>
<div style="left:104px;top:539.00px;width:24px;height:5.58px;opacity:0.70;color:#e0e0e0;font:normal 5.58px/5.58px 'Liberation Mono';letter-spacing:0.15px;white-space:nowrap;overflow:hidden">MWX7HEE</div>
<div style="left:128px;top:539.00px;width:4px;height:5.58px;opacity:0.90;color:#3f7fe6;font:normal 5.58px/5.58px 'Liberation Mono';letter-spacing:0.15px;white-space:nowrap;overflow:hidden">E</div>
<div style="left:84.5px;top:544.44px;width:7.5px;height:5.04px;opacity:0.56;color:#c8c8c8;font:bold 5.04px/5.04px 'Liberation Mono';letter-spacing:-0.82px;white-space:nowrap;overflow:hidden">K#Z</div>
<div style="left:104px;top:544.61px;width:17px;height:5.58px;opacity:0.70;color:#e0e0e0;font:normal 5.58px/5.58px 'Liberation Mono';letter-spacing:0.15px;white-space:nowrap;overflow:hidden">BFNZF</div>
<div style="left:122px;top:544.61px;width:5px;height:5.58px;opacity:0.90;color:#3f7fe6;font:normal 5.58px/5.58px 'Liberation Mono';letter-spacing:0.15px;white-space:nowrap;overflow:hidden">N</div>
<div style="left:84.5px;top:550.04px;width:7.5px;height:5.04px;opacity:0.56;color:#c8c8c8;font:bold 5.04px/5.04px 'Liberation Mono';letter-spacing:-0.82px;white-space:nowrap;overflow:hidden">WBE</div>
<div style="left:104px;top:550.20px;width:25px;height:5.58px;opacity:0.70;color:#e0e0e0;font:normal 5.58px/5.58px 'Liberation Mono';letter-spacing:0.15px;white-space:nowrap;overflow:hidden">MA7UM4H</div>
<div style="left:84.5px;top:555.64px;width:7.5px;height:5.04px;opacity:0.56;color:#c8c8c8;font:bold 5.04px/5.04px 'Liberation Mono';letter-spacing:-0.82px;white-space:nowrap;overflow:hidden">477</div>
<div style="left:104px;top:555.80px;width:17px;height:5.58px;opacity:0.70;color:#e0e0e0;font:normal 5.58px/5.58px 'Liberation Mono';letter-spacing:0.15px;white-space:nowrap;overflow:hidden">AFN#K</div>
<div style="left:84.5px;top:561.24px;width:7.5px;height:5.04px;opacity:0.56;color:#c8c8c8;font:bold 5.04px/5.04px 'Liberation Mono';letter-spacing:-0.82px;white-space:nowrap;overflow:hidden">NDB</div>
<div style="left:103px;top:561.40px;width:5px;height:5.58px;opacity:0.90;color:#3f7fe6;font:normal 5.58px/5.58px 'Liberation Mono';letter-spacing:0.15px;white-space:nowrap;overflow:hidden">F</div>
<div style="left:108px;top:561.40px;width:93px;height:5.58px;opacity:0.70;color:#e0e0e0;font:normal 5.58px/5.58px 'Liberation Mono';letter-spacing:0.15px;white-space:nowrap;overflow:hidden">Z@D@KDZ#RN7@ZFEM@#7#W4W#RZU</div>
<div style="left:209px;top:561.40px;width:5px;height:5.58px;opacity:0.90;color:#3f7fe6;font:normal 5.58px/5.58px 'Liberation Mono';letter-spacing:0.15px;white-space:nowrap;overflow:hidden">A</div>
<div style="left:84.5px;top:566.84px;width:7.5px;height:5.04px;opacity:0.56;color:#c8c8c8;font:bold 5.04px/5.04px 'Liberation Mono';letter-spacing:-0.82px;white-space:nowrap;overflow:hidden">HEE</div>
<div style="left:113px;top:567.00px;width:17px;height:5.58px;opacity:0.70;color:#e0e0e0;font:normal 5.58px/5.58px 'Liberation Mono';letter-spacing:0.15px;white-space:nowrap;overflow:hidden">WAE#7</div>
<div style="left:84.5px;top:572.44px;width:7.5px;height:5.04px;opacity:0.56;color:#c8c8c8;font:bold 5.04px/5.04px 'Liberation Mono';letter-spacing:-0.82px;white-space:nowrap;overflow:hidden">B@B</div>
<div style="left:113px;top:572.61px;width:61px;height:5.58px;opacity:0.70;color:#e0e0e0;font:normal 5.58px/5.58px 'Liberation Mono';letter-spacing:0.15px;white-space:nowrap;overflow:hidden">D#ZXMHUNRN4XHENMX</div>
<div style="left:78px;top:575.5px;width:305px;height:4.8px;background:linear-gradient(#eeeeee,#d8d8d8 80%,#9a9a9a)"></div>
<div style="left:79px;top:576.5px;width:3px;height:3px;border:0.5px solid #777;box-sizing:border-box"></div>
<div style="left:291px;top:577px;width:3px;height:2px;background:#444"></div>
<div style="left:78px;top:580.3px;width:305px;height:10px;background:#f0f0f0"></div>
<div style="left:79px;top:580.8px;width:21px;height:8px;background:#f6f6f6;border:0.5px solid #999;box-sizing:border-box"></div>
<div style="left:100px;top:580.8px;width:21px;height:8px;background:#fff;border:0.5px solid #999;box-sizing:border-box"></div>
<div style="left:80.5px;top:583px;width:2.5px;height:3px;background:#8aa8d8;opacity:0.7"></div>
<div style="left:101.5px;top:583px;width:2.5px;height:3px;background:#8aa8d8;opacity:0.7"></div>
<div style="left:84px;top:583.14px;width:14px;height:5.04px;opacity:0.75;color:#223;font:bold 5.04px/5.04px 'Liberation Mono';letter-spacing:0.08px;white-space:nowrap;overflow:hidden">#MFH</div>
<div style="left:105px;top:583.14px;width:14px;height:5.04px;opacity:0.75;color:#223;font:bold 5.04px/5.04px 'Liberation Mono';letter-spacing:0.08px;white-space:nowrap;overflow:hidden">UXZB</div>
<div style="left:78px;top:589.2px;width:305px;height:0.6px;background:#888"></div>
<div style="left:78px;top:590.3px;width:305px;height:6.7px;background:linear-gradient(#d8d8d8,#c2c2c2)"></div>
<div style="left:80px;top:592.03px;width:11px;height:4.68px;opacity:0.81;color:#222;font:bold 4.68px/4.68px 'Liberation Mono';letter-spacing:0.29px;white-space:nowrap;overflow:hidden">4KX</div>
<div style="left:78px;top:597px;width:305px;height:7px;background:#ebebeb"></div>
<div style="left:79px;top:597.3px;width:25px;height:6.5px;background:#f8f8f8;border:0.5px solid #999;box-sizing:border-box"></div>
<div style="left:80.5px;top:599px;width:3px;height:3px;background:#8aa8d8;opacity:0.7"></div>
<div style="left:84.5px;top:599.03px;width:18px;height:4.68px;opacity:0.75;color:#222;font:bold 4.68px/4.68px 'Liberation Mono';letter-spacing:0.29px;white-space:nowrap;overflow:hidden">@@DZZF</div>
<div style="left:104px;top:597.3px;width:23px;height:6.5px;background:#f8f8f8;border:0.5px solid #999;box-sizing:border-box"></div>
<div style="left:105.5px;top:599px;width:3px;height:3px;background:#8aa8d8;opacity:0.7"></div>
<div style="left:109.5px;top:599.03px;width:16px;height:4.68px;opacity:0.75;color:#222;font:bold 4.68px/4.68px 'Liberation Mono';letter-spacing:0.29px;white-space:nowrap;overflow:hidden">EBA7E</div>
<div style="left:129px;top:597.3px;width:25px;height:6.5px;background:#f8f8f8;border:0.5px solid #999;box-sizing:border-box"></div>
<div style="left:130.5px;top:599px;width:3px;height:3px;background:#8aa8d8;opacity:0.7"></div>
<div style="left:134.5px;top:599.03px;width:18px;height:4.68px;opacity:0.75;color:#222;font:bold 4.68px/4.68px 'Liberation Mono';letter-spacing:0.29px;white-space:nowrap;overflow:hidden">ZBHDF@</div>
<div style="left:155px;top:597.3px;width:26px;height:6.5px;background:#f8f8f8;border:0.5px solid #999;box-sizing:border-box"></div>
<div style="left:156.5px;top:599px;width:3px;height:3px;background:#8aa8d8;opacity:0.7"></div>
<div style="left:160.5px;top:599.03px;width:19px;height:4.68px;opacity:0.75;color:#222;font:bold 4.68px/4.68px 'Liberation Mono';letter-spacing:0.29px;white-space:nowrap;overflow:hidden">NF@WKN</div>
<div style="left:182px;top:597.3px;width:24px;height:6.5px;background:#f8f8f8;border:0.5px solid #999;box-sizing:border-box"></div>
<div style="left:183.5px;top:599px;width:3px;height:3px;background:#8aa8d8;opacity:0.7"></div>
<div style="left:187.5px;top:599.03px;width:17px;height:4.68px;opacity:0.75;color:#222;font:bold 4.68px/4.68px 'Liberation Mono';letter-spacing:0.29px;white-space:nowrap;overflow:hidden">4D4HM</div>
<div style="left:78px;top:603.8px;width:305px;height:10.2px;background:#fff"></div>
<div style="left:80px;top:604.03px;width:13px;height:4.68px;opacity:0.81;color:#222;font:bold 4.68px/4.68px 'Liberation Mono';letter-spacing:0.29px;white-space:nowrap;overflow:hidden">4M7F</div>
<div style="left:80px;top:607.73px;width:13px;height:4.68px;opacity:0.81;color:#222;font:bold 4.68px/4.68px 'Liberation Mono';letter-spacing:0.29px;white-space:nowrap;overflow:hidden">HZRK</div>
<div style="left:80px;top:611.62px;width:61px;height:4.32px;opacity:0.69;color:#222;font:bold 4.32px/4.32px 'Liberation Mono';letter-spacing:0.51px;white-space:nowrap;overflow:hidden">HUBFM#UA#KK4WK@A4ARZ</div>
<div style="left:176px;top:488px;width:176px;height:16.5px;background:#0b0f1a"></div>
<div style="left:178px;top:489.46px;width:171px;height:5.76px;opacity:1.00;color:#fff;font:normal 5.76px/5.76px 'Liberation Mono';letter-spacing:0.24px;white-space:nowrap;overflow:hidden">RNK#HXUFDEKNMAUMXMXMHRZXBUAD@E4XMXFHWD#HFKM@FR</div>
<div style="left:178px;top:495.96px;width:25px;height:5.76px;opacity:1.00;color:#fff;font:normal 5.76px/5.76px 'Liberation Mono';letter-spacing:0.24px;white-space:nowrap;overflow:hidden">#RHHE7K</div>
<div style="left:165.4px;top:490.9px;width:5.2px;height:5.2px;background:#ee3b3b;border-radius:50%"></div>
<div style="left:224px;top:424.28px;width:41px;height:6.48px;opacity:1.00;color:#e83232;font:normal 6.48px/6.48px 'Liberation Mono';letter-spacing:0.21px;white-space:nowrap;overflow:hidden">DDH4H74##H</div>
<div style="left:268px;top:424.28px;width:10px;height:6.48px;opacity:1.00;color:#e83232;font:normal 6.48px/6.48px 'Liberation Mono';letter-spacing:0.21px;white-space:nowrap;overflow:hidden">@A</div>
<div style="left:281px;top:424.28px;width:52px;height:6.48px;opacity:1.00;color:#e83232;font:normal 6.48px/6.48px 'Liberation Mono';letter-spacing:0.21px;white-space:nowrap;overflow:hidden">F@MNZWWUWWMN#</div>
<svg style="position:absolute;left:0;top:0" width="800" height="626"><line x1="47" y1="329" x2="219" y2="424" stroke="#e02a2a" stroke-width="1.3"/><polygon points="44,327 54,329.5 50,334" fill="#e02a2a"/></svg>
<div style="left:417px;top:319.5px;width:375px;height:218px;background:#ececec;box-shadow:0 4px 12px rgba(0,0,0,0.10);border-radius:3px 3px 2px 2px"></div>
<div style="left:417px;top:319.5px;width:375px;height:4.3px;background:linear-gradient(90deg,#0a246a 0%,#3a6ec8 45%,#a6caf0 100%)"></div>
<div style="left:417.5px;top:320px;width:3px;height:3.3px;background:#6ac0f0"></div>
<div style="left:422px;top:320.12px;width:9px;height:4.32px;opacity:0.62;color:#fff;font:bold 4.32px/4.32px 'Liberation Mono';letter-spacing:0.61px;white-space:nowrap;overflow:hidden">WNE</div>
<div style="left:434px;top:320.12px;width:121px;height:4.32px;opacity:0.56;color:#fff;font:bold 4.32px/4.32px 'Liberation Mono';letter-spacing:1.01px;white-space:nowrap;overflow:hidden">FH@UHXK#H@RX#E7KUHK#HUUD#DW4XUZ#@@</div>
<div style="left:779px;top:320.2px;width:3.5px;height:3px;background:#d4d0c8;border:0.4px solid #555;box-sizing:border-box"></div>
<div style="left:783px;top:320.2px;width:3.5px;height:3px;background:#d4d0c8;border:0.4px solid #555;box-sizing:border-box"></div>
<div style="left:787px;top:320.2px;width:3.5px;height:3px;background:#d4d0c8;border:0.4px solid #555;box-sizing:border-box"></div>
<div style="left:417px;top:323.8px;width:375px;height:5.7px;background:#ebebeb"></div>
<div style="left:419px;top:324.84px;width:15px;height:5.04px;opacity:0.94;color:#111;font:bold 5.04px/5.04px 'Liberation Mono';letter-spacing:-0.02px;white-space:nowrap;overflow:hidden">#44HR</div>
<div style="left:437px;top:324.84px;width:15px;height:5.04px;opacity:0.94;color:#111;font:bold 5.04px/5.04px 'Liberation Mono';letter-spacing:-0.02px;white-space:nowrap;overflow:hidden">#RHD4</div>
<div style="left:455px;top:324.84px;width:13px;height:5.04px;opacity:0.94;color:#111;font:bold 5.04px/5.04px 'Liberation Mono';letter-spacing:-0.02px;white-space:nowrap;overflow:hidden">KDDH</div>
<div style="left:474px;top:324.84px;width:11px;height:5.04px;opacity:0.94;color:#111;font:bold 5.04px/5.04px 'Liberation Mono';letter-spacing:-0.02px;white-space:nowrap;overflow:hidden">EAKU</div>
<div style="left:489px;top:324.84px;width:13px;height:5.04px;opacity:0.94;color:#111;font:bold 5.04px/5.04px 'Liberation Mono';letter-spacing:-0.02px;white-space:nowrap;overflow:hidden">KWBA</div>
<div style="left:503px;top:324.84px;width:13px;height:5.04px;opacity:0.94;color:#111;font:bold 5.04px/5.04px 'Liberation Mono';letter-spacing:-0.02px;white-space:nowrap;overflow:hidden">U7DF</div>
<div style="left:518px;top:324.84px;width:13px;height:5.04px;opacity:0.94;color:#111;font:bold 5.04px/5.04px 'Liberation Mono';letter-spacing:-0.02px;white-space:nowrap;overflow:hidden">7U@K</div>
<div style="left:533px;top:324.84px;width:13px;height:5.04px;opacity:0.94;color:#111;font:bold 5.04px/5.04px 'Liberation Mono';letter-spacing:-0.02px;white-space:nowrap;overflow:hidden">7RUR</div>
<div style="left:548px;top:324.84px;width:11px;height:5.04px;opacity:0.94;color:#111;font:bold 5.04px/5.04px 'Liberation Mono';letter-spacing:-0.02px;white-space:nowrap;overflow:hidden">EUA@</div>
<div style="left:561px;top:324.84px;width:13px;height:5.04px;opacity:0.94;color:#111;font:bold 5.04px/5.04px 'Liberation Mono';letter-spacing:-0.02px;white-space:nowrap;overflow:hidden">@4FA</div>
<div style="left:417px;top:329.5px;width:375px;height:10.5px;background:linear-gradient(#f6f6f6,#e4e4e4 65%,#d0d0d0)"></div>
<div style="left:420.2px;top:331px;width:4.6px;height:4.6px;background:linear-gradient(135deg,#fff 0%,#5b8fd6 45%,#5b8fd6 100%);opacity:0.8;border-radius:1.5px"></div>
<div style="left:419.0px;top:336.29px;width:8px;height:4.86px;opacity:0.94;color:#111;font:bold 4.86px/4.86px 'Liberation Mono';letter-spacing:-0.12px;white-space:nowrap;overflow:hidden">#XD</div>
<div style="left:431.45px;top:331px;width:4.6px;height:4.6px;background:linear-gradient(135deg,#fff 0%,#f2c14e 45%,#f2c14e 100%);opacity:0.8;border-radius:1.5px"></div>
<div style="left:430.25px;top:336.29px;width:8px;height:4.86px;opacity:0.94;color:#111;font:bold 4.86px/4.86px 'Liberation Mono';letter-spacing:-0.12px;white-space:nowrap;overflow:hidden">7EB</div>
<div style="left:442.2px;top:331px;width:4.6px;height:4.6px;background:linear-gradient(135deg,#fff 0%,#5a4fc0 45%,#5a4fc0 100%);opacity:0.8;border-radius:1.5px"></div>
<div style="left:441.0px;top:336.29px;width:8px;height:4.86px;opacity:0.94;color:#111;font:bold 4.86px/4.86px 'Liberation Mono';letter-spacing:-0.12px;white-space:nowrap;overflow:hidden">X7R</div>
<div style="left:452.7px;top:331px;width:4.6px;height:4.6px;background:linear-gradient(135deg,#fff 0%,#8a9ab8 45%,#8a9ab8 100%);opacity:0.8;border-radius:1.5px"></div>
<div style="left:451.5px;top:336.29px;width:8px;height:4.86px;opacity:0.94;color:#111;font:bold 4.86px/4.86px 'Liberation Mono';letter-spacing:-0.12px;white-space:nowrap;overflow:hidden">M4W</div>
<div style="left:463.7px;top:331px;width:4.6px;height:4.6px;background:linear-gradient(135deg,#fff 0%,#7aa0d8 45%,#7aa0d8 100%);opacity:0.8;border-radius:1.5px"></div>
<div style="left:462.5px;top:336.29px;width:8px;height:4.86px;opacity:0.94;color:#111;font:bold 4.86px/4.86px 'Liberation Mono';letter-spacing:-0.12px;white-space:nowrap;overflow:hidden">NNH</div>
<div style="left:475.2px;top:331px;width:4.6px;height:4.6px;background:linear-gradient(135deg,#fff 0%,#9aa0a8 45%,#9aa0a8 100%);opacity:0.8;border-radius:1.5px"></div>
<div style="left:474.0px;top:336.29px;width:8px;height:4.86px;opacity:0.94;color:#111;font:bold 4.86px/4.86px 'Liberation Mono';letter-spacing:-0.12px;white-space:nowrap;overflow:hidden">7M4</div>
<div style="left:485.7px;top:331px;width:4.6px;height:4.6px;background:linear-gradient(135deg,#fff 0%,#8c8c8c 45%,#8c8c8c 100%);opacity:0.8;border-radius:1.5px"></div>
<div style="left:484.5px;top:336.29px;width:8px;height:4.86px;opacity:0.94;color:#111;font:bold 4.86px/4.86px 'Liberation Mono';letter-spacing:-0.12px;white-space:nowrap;overflow:hidden">DM4</div>
<div style="left:496.45px;top:331px;width:4.6px;height:4.6px;background:linear-gradient(135deg,#fff 0%,#b9b39a 45%,#b9b39a 100%);opacity:0.8;border-radius:1.5px"></div>
<div style="left:495.25px;top:336.29px;width:8px;height:4.86px;opacity:0.94;color:#111;font:bold 4.86px/4.86px 'Liberation Mono';letter-spacing:-0.12px;white-space:nowrap;overflow:hidden">4EE</div>
<div style="left:507.2px;top:331px;width:4.6px;height:4.6px;background:linear-gradient(135deg,#fff 0%,#4c8a4c 45%,#4c8a4c 100%);opacity:0.8;border-radius:1.5px"></div>
<div style="left:506.0px;top:336.29px;width:8px;height:4.86px;opacity:0.94;color:#111;font:bold 4.86px/4.86px 'Liberation Mono';letter-spacing:-0.12px;white-space:nowrap;overflow:hidden">UXF</div>
<div style="left:517.7px;top:331px;width:4.6px;height:4.6px;background:linear-gradient(135deg,#fff 0%,#4dbd3a 45%,#4dbd3a 100%);opacity:0.8;border-radius:1.5px"></div>
<div style="left:516.5px;top:336.29px;width:8px;height:4.86px;opacity:0.94;color:#111;font:bold 4.86px/4.86px 'Liberation Mono';letter-spacing:-0.12px;white-space:nowrap;overflow:hidden">ADR</div>
<div style="left:528.2px;top:331px;width:4.6px;height:4.6px;background:linear-gradient(135deg,#fff 0%,#6a6fd8 45%,#6a6fd8 100%);opacity:0.8;border-radius:1.5px"></div>
<div style="left:527.0px;top:336.29px;width:8px;height:4.86px;opacity:0.94;color:#111;font:bold 4.86px/4.86px 'Liberation Mono';letter-spacing:-0.12px;white-space:nowrap;overflow:hidden">B@M</div>
<div style="left:538.7px;top:331px;width:4.6px;height:4.6px;background:linear-gradient(135deg,#fff 0%,#d8c832 45%,#d8c832 100%);opacity:0.8;border-radius:1.5px"></div>
<div style="left:537.5px;top:336.29px;width:8px;height:4.86px;opacity:0.94;color:#111;font:bold 4.86px/4.86px 'Liberation Mono';letter-spacing:-0.12px;white-space:nowrap;overflow:hidden">NXH</div>
<div style="left:549.7px;top:331px;width:4.6px;height:4.6px;background:linear-gradient(135deg,#fff 0%,#4a78c8 45%,#4a78c8 100%);opacity:0.8;border-radius:1.5px"></div>
<div style="left:548.5px;top:336.29px;width:8px;height:4.86px;opacity:0.94;color:#111;font:bold 4.86px/4.86px 'Liberation Mono';letter-spacing:-0.12px;white-space:nowrap;overflow:hidden">WMZ</div>
<div style="left:560.7px;top:331px;width:4.6px;height:4.6px;background:linear-gradient(135deg,#fff 0%,#3a9a3a 45%,#3a9a3a 100%);opacity:0.8;border-radius:1.5px"></div>
<div style="left:559.5px;top:336.29px;width:8px;height:4.86px;opacity:0.94;color:#111;font:bold 4.86px/4.86px 'Liberation Mono';letter-spacing:-0.12px;white-space:nowrap;overflow:hidden">BNE</div>
<div style="left:571.45px;top:331px;width:4.6px;height:4.6px;background:linear-gradient(135deg,#fff 0%,#4a78c8 45%,#4a78c8 100%);opacity:0.8;border-radius:1.5px"></div>
<div style="left:570.25px;top:336.29px;width:8px;height:4.86px;opacity:0.94;color:#111;font:bold 4.86px/4.86px 'Liberation Mono';letter-spacing:-0.12px;white-space:nowrap;overflow:hidden">W@M</div>
<div style="left:612.7px;top:331px;width:4.6px;height:4.6px;background:linear-gradient(135deg,#fff 0%,#4a78d8 45%,#4a78d8 100%);opacity:0.8;border-radius:1.5px"></div>
<div style="left:611.5px;top:336.29px;width:8px;height:4.86px;opacity:0.94;color:#111;font:bold 4.86px/4.86px 'Liberation Mono';letter-spacing:-0.12px;white-space:nowrap;overflow:hidden">4D7</div>
<div style="left:622.7px;top:331px;width:4.6px;height:4.6px;background:linear-gradient(135deg,#fff 0%,#3a88d8 45%,#3a88d8 100%);opacity:0.8;border-radius:1.5px"></div>
<div style="left:621.5px;top:336.29px;width:8px;height:4.86px;opacity:0.94;color:#111;font:bold 4.86px/4.86px 'Liberation Mono';letter-spacing:-0.12px;white-space:nowrap;overflow:hidden">KRD</div>
<div style="left:634.7px;top:331px;width:4.6px;height:4.6px;background:linear-gradient(135deg,#fff 0%,#8aa0c0 45%,#8aa0c0 100%);opacity:0.8;border-radius:1.5px"></div>
<div style="left:633.5px;top:336.29px;width:8px;height:4.86px;opacity:0.94;color:#111;font:bold 4.86px/4.86px 'Liberation Mono';letter-spacing:-0.12px;white-space:nowrap;overflow:hidden">NNF</div>
<div style="left:643.7px;top:331px;width:4.6px;height:4.6px;background:linear-gradient(135deg,#fff 0%,#e8b832 45%,#e8b832 100%);opacity:0.8;border-radius:1.5px"></div>
<div style="left:642.5px;top:336.29px;width:8px;height:4.86px;opacity:0.94;color:#111;font:bold 4.86px/4.86px 'Liberation Mono';letter-spacing:-0.12px;white-space:nowrap;overflow:hidden">BDW</div>
<div style="left:473px;top:330px;width:0.8px;height:9.5px;background:#c4c4c4"></div>
<div style="left:630px;top:330px;width:0.8px;height:9.5px;background:#c4c4c4"></div>
<div style="left:579px;top:331px;width:30px;height:5px;background:#fff;border:0.6px solid #888;box-sizing:border-box"></div>
<div style="left:581px;top:332.21px;width:19px;height:3.96px;opacity:0.88;color:#222;font:bold 3.96px/3.96px 'Liberation Mono';letter-spacing:0.22px;white-space:nowrap;overflow:hidden">RRE#@WF</div>
<div style="left:657px;top:332.64px;width:7.5px;height:5.04px;opacity:0.75;color:#2a2ab8;font:bold 5.04px/5.04px 'Liberation Mono';letter-spacing:-0.12px;white-space:nowrap;overflow:hidden">AAA</div>
<div style="left:668px;top:332.64px;width:7.5px;height:5.04px;opacity:0.75;color:#2a2ab8;font:bold 5.04px/5.04px 'Liberation Mono';letter-spacing:-0.12px;white-space:nowrap;overflow:hidden">BMN</div>
<div style="left:678px;top:332.64px;width:7.5px;height:5.04px;opacity:0.75;color:#2a2ab8;font:bold 5.04px/5.04px 'Liberation Mono';letter-spacing:-0.12px;white-space:nowrap;overflow:hidden">AFZ</div>
<div style="left:689.5px;top:329.5px;width:9px;height:9.5px;background:#d8dbe0"></div>
<div style="left:690.5px;top:330px;width:7px;height:9px;background:radial-gradient(circle at 50% 40%,#f2d6c0 0 35%,#222 36% 55%,transparent 56%),linear-gradient(transparent 72%,#d03030 72%)"></div>
<div style="left:700px;top:330.82px;width:8px;height:4.32px;opacity:1.00;color:#111;font:bold 4.32px/4.32px 'Liberation Mono';letter-spacing:0.31px;white-space:nowrap;overflow:hidden">KNR</div>
<div style="left:700px;top:335.62px;width:23px;height:4.32px;opacity:1.00;color:#e02828;font:bold 4.32px/4.32px 'Liberation Mono';letter-spacing:0.21px;white-space:nowrap;overflow:hidden">#F7R4F@M</div>
<div style="left:417px;top:339.5px;width:57px;height:5px;background:linear-gradient(#e0e0e0,#c8c8c8)"></div>
<div style="left:419px;top:340.32px;width:9px;height:4.32px;opacity:0.94;color:#111;font:bold 4.32px/4.32px 'Liberation Mono';letter-spacing:0.31px;white-space:nowrap;overflow:hidden">E4E</div>
<div style="left:462px;top:340.32px;width:11px;height:4.32px;opacity:0.75;color:#333;font:bold 4.32px/4.32px 'Liberation Mono';letter-spacing:0.21px;white-space:nowrap;overflow:hidden">X7AM</div>
<div style="left:417px;top:344.5px;width:57px;height:6px;background:#f0f0f0"></div>
<div style="left:418px;top:344.5px;width:13px;height:6px;background:#fff"></div>
<div style="left:431.5px;top:344.5px;width:13px;height:6px;background:#fff;border-left:0.5px solid #bbb;border-right:0.5px solid #bbb"></div>
<div style="left:445px;top:344.5px;width:13px;height:6px;background:#f5f5f5;border-right:0.5px solid #aaa"></div>
<div style="left:420px;top:345.73px;width:10px;height:4.68px;opacity:0.75;color:#234;font:bold 4.68px/4.68px 'Liberation Mono';letter-spacing:0.29px;white-space:nowrap;overflow:hidden">DDX</div>
<div style="left:433px;top:345.73px;width:11px;height:4.68px;opacity:0.75;color:#235;font:bold 4.68px/4.68px 'Liberation Mono';letter-spacing:0.29px;white-space:nowrap;overflow:hidden">A7M</div>
<div style="left:447px;top:345.73px;width:11px;height:4.68px;opacity:0.75;color:#333;font:bold 4.68px/4.68px 'Liberation Mono';letter-spacing:0.29px;white-space:nowrap;overflow:hidden">FR4</div>
<div style="left:417px;top:350.5px;width:57px;height:176px;background:#fff"></div>
<div style="left:470.5px;top:351px;width:4px;height:175px;background:#ececec"></div>
<div style="left:470.8px;top:351px;width:3.4px;height:4px;background:#d8d8d8;border:0.4px solid #999;box-sizing:border-box"></div>
<div style="left:470.8px;top:521px;width:3.4px;height:4px;background:#d8d8d8;border:0.4px solid #999;box-sizing:border-box"></div>
<div style="left:470.8px;top:356px;width:3.4px;height:60px;background:#d4d4d4;border:0.4px solid #aaa;box-sizing:border-box"></div>
<div style="left:417px;top:526.5px;width:57px;height:5.5px;background:#ececec"></div>
<div style="left:418px;top:527.62px;width:33px;height:4.32px;opacity:0.75;color:#333;font:bold 4.32px/4.32px 'Liberation Mono';letter-spacing:0.31px;white-space:nowrap;overflow:hidden">A4BNW#DBRXM</div>
<div style="left:418.5px;top:350.9px;width:4px;height:3.6px;background:#7fa0d8;opacity:0.8;border:0.5px solid rgba(40,60,120,0.6);box-sizing:border-box"></div>
<div style="left:424.0px;top:350.93px;width:11px;height:4.68px;opacity:0.85;color:#111;font:bold 4.68px/4.68px 'Liberation Mono';letter-spacing:0.29px;white-space:nowrap;overflow:hidden">@F4</div>
<div style="left:422.8px;top:355.2px;width:4px;height:3.6px;background:#aabde0;opacity:0.8;border:0.5px solid rgba(40,60,120,0.6);box-sizing:border-box"></div>
<div style="left:428.3px;top:355.23px;width:6px;height:4.68px;opacity:0.85;color:#111;font:bold 4.68px/4.68px 'Liberation Mono';letter-spacing:0.29px;white-space:nowrap;overflow:hidden">MK</div>
<div style="left:427.1px;top:359.7px;width:4px;height:3.6px;background:#e8eef8;opacity:0.8;border:0.5px solid rgba(40,60,120,0.6);box-sizing:border-box"></div>
<div style="left:432.6px;top:359.73px;width:19px;height:4.68px;opacity:0.85;color:#111;font:bold 4.68px/4.68px 'Liberation Mono';letter-spacing:0.29px;white-space:nowrap;overflow:hidden">MWFRME</div>
<div style="left:427.1px;top:364.0px;width:4px;height:3.6px;background:#e8eef8;opacity:0.8;border:0.5px solid rgba(40,60,120,0.6);box-sizing:border-box"></div>
<div style="left:432.6px;top:364.03px;width:17px;height:4.68px;opacity:0.85;color:#111;font:bold 4.68px/4.68px 'Liberation Mono';letter-spacing:0.29px;white-space:nowrap;overflow:hidden">M@UWZ</div>
<div style="left:427.1px;top:368.3px;width:4px;height:3.6px;background:#e8eef8;opacity:0.8;border:0.5px solid rgba(40,60,120,0.6);box-sizing:border-box"></div>
<div style="left:432.6px;top:368.33px;width:17px;height:4.68px;opacity:0.85;color:#111;font:bold 4.68px/4.68px 'Liberation Mono';letter-spacing:0.29px;white-space:nowrap;overflow:hidden">KNZUR</div>
<div style="left:427.1px;top:372.59999999999997px;width:4px;height:3.6px;background:#e8eef8;opacity:0.8;border:0.5px solid rgba(40,60,120,0.6);box-sizing:border-box"></div>
<div style="left:432.6px;top:372.63px;width:15px;height:4.68px;opacity:0.85;color:#111;font:bold 4.68px/4.68px 'Liberation Mono';letter-spacing:0.29px;white-space:nowrap;overflow:hidden">FK#A@</div>
<div style="left:427.1px;top:376.9px;width:4px;height:3.6px;background:#e8eef8;opacity:0.8;border:0.5px solid rgba(40,60,120,0.6);box-sizing:border-box"></div>
<div style="left:432.6px;top:376.93px;width:15px;height:4.68px;opacity:0.85;color:#111;font:bold 4.68px/4.68px 'Liberation Mono';letter-spacing:0.29px;white-space:nowrap;overflow:hidden">RKE@R</div>
<div style="left:427.1px;top:381.2px;width:4px;height:3.6px;background:#e8eef8;opacity:0.8;border:0.5px solid rgba(40,60,120,0.6);box-sizing:border-box"></div>
<div style="left:432.6px;top:381.23px;width:13px;height:4.68px;opacity:0.85;color:#111;font:bold 4.68px/4.68px 'Liberation Mono';letter-spacing:0.29px;white-space:nowrap;overflow:hidden">RWK#</div>
<div style="left:427.1px;top:385.5px;width:4px;height:3.6px;background:#e8eef8;opacity:0.8;border:0.5px solid rgba(40,60,120,0.6);box-sizing:border-box"></div>
<div style="left:432.6px;top:385.53px;width:17px;height:4.68px;opacity:0.85;color:#111;font:bold 4.68px/4.68px 'Liberation Mono';letter-spacing:0.29px;white-space:nowrap;overflow:hidden">4K#F@</div>
<div style="left:427.1px;top:389.8px;width:4px;height:3.6px;background:#e8eef8;opacity:0.8;border:0.5px solid rgba(40,60,120,0.6);box-sizing:border-box"></div>
<div style="left:432.6px;top:389.83px;width:19px;height:4.68px;opacity:0.85;color:#111;font:bold 4.68px/4.68px 'Liberation Mono';letter-spacing:0.29px;white-space:nowrap;overflow:hidden">M4MD7A</div>
<div style="left:427.1px;top:394.09999999999997px;width:4px;height:3.6px;background:#e8eef8;opacity:0.8;border:0.5px solid rgba(40,60,120,0.6);box-sizing:border-box"></div>
<div style="left:432.6px;top:394.13px;width:13px;height:4.68px;opacity:0.85;color:#111;font:bold 4.68px/4.68px 'Liberation Mono';letter-spacing:0.29px;white-space:nowrap;overflow:hidden">7BHX</div>
<div style="left:427.1px;top:398.4px;width:4px;height:3.6px;background:#e8eef8;opacity:0.8;border:0.5px solid rgba(40,60,120,0.6);box-sizing:border-box"></div>
<div style="left:432.6px;top:398.43px;width:17px;height:4.68px;opacity:0.85;color:#111;font:bold 4.68px/4.68px 'Liberation Mono';letter-spacing:0.29px;white-space:nowrap;overflow:hidden">EXXKM</div>
<div style="left:427.1px;top:402.7px;width:4px;height:3.6px;background:#e8eef8;opacity:0.8;border:0.5px solid rgba(40,60,120,0.6);box-sizing:border-box"></div>
<div style="left:431.90000000000003px;top:402.2px;width:13.5px;height:4.4px;background:#3468c8"></div>
<div style="left:432.6px;top:403.01px;width:13px;height:3.96px;opacity:0.75;color:#fff;font:bold 3.96px/3.96px 'Liberation Mono';letter-spacing:0.72px;white-space:nowrap;overflow:hidden">HHXR</div>
<div style="left:427.1px;top:407.0px;width:4px;height:3.6px;background:#e8eef8;opacity:0.8;border:0.5px solid rgba(40,60,120,0.6);box-sizing:border-box"></div>
<div style="left:432.6px;top:407.03px;width:19px;height:4.68px;opacity:0.85;color:#111;font:bold 4.68px/4.68px 'Liberation Mono';letter-spacing:0.29px;white-space:nowrap;overflow:hidden">UMXB4E</div>
<div style="left:427.1px;top:414.2px;width:4px;height:3.6px;background:#e8eef8;opacity:0.8;border:0.5px solid rgba(40,60,120,0.6);box-sizing:border-box"></div>
<div style="left:432.6px;top:414.23px;width:14px;height:4.68px;opacity:0.85;color:#111;font:bold 4.68px/4.68px 'Liberation Mono';letter-spacing:0.29px;white-space:nowrap;overflow:hidden">D7@H</div>
<div style="left:422.8px;top:418.7px;width:4px;height:3.6px;background:#aabde0;opacity:0.8;border:0.5px solid rgba(40,60,120,0.6);box-sizing:border-box"></div>
<div style="left:428.3px;top:418.73px;width:7px;height:4.68px;opacity:0.85;color:#111;font:bold 4.68px/4.68px 'Liberation Mono';letter-spacing:0.29px;white-space:nowrap;overflow:hidden">Z4</div>
<div style="left:427.1px;top:423.2px;width:4px;height:3.6px;background:#e8eef8;opacity:0.8;border:0.5px solid rgba(40,60,120,0.6);box-sizing:border-box"></div>
<div style="left:432.6px;top:423.23px;width:15px;height:4.68px;opacity:0.85;color:#111;font:bold 4.68px/4.68px 'Liberation Mono';letter-spacing:0.29px;white-space:nowrap;overflow:hidden">MA4FX</div>
<div style="left:427.1px;top:427.65px;width:4px;height:3.6px;background:#e8eef8;opacity:0.8;border:0.5px solid rgba(40,60,120,0.6);box-sizing:border-box"></div>
<div style="left:432.6px;top:427.68px;width:19px;height:4.68px;opacity:0.85;color:#111;font:bold 4.68px/4.68px 'Liberation Mono';letter-spacing:0.29px;white-space:nowrap;overflow:hidden">H47WEA</div>
<div style="left:427.1px;top:432.09999999999997px;width:4px;height:3.6px;background:#e8eef8;opacity:0.8;border:0.5px solid rgba(40,60,120,0.6);box-sizing:border-box"></div>
<div style="left:432.6px;top:432.13px;width:19px;height:4.68px;opacity:0.85;color:#111;font:bold 4.68px/4.68px 'Liberation Mono';letter-spacing:0.29px;white-space:nowrap;overflow:hidden">FA7HEW</div>
<div style="left:427.1px;top:436.55px;width:4px;height:3.6px;background:#e8eef8;opacity:0.8;border:0.5px solid rgba(40,60,120,0.6);box-sizing:border-box"></div>
<div style="left:432.6px;top:436.58px;width:15px;height:4.68px;opacity:0.85;color:#111;font:bold 4.68px/4.68px 'Liberation Mono';letter-spacing:0.29px;white-space:nowrap;overflow:hidden">WB4XD</div>
<div style="left:427.1px;top:441.0px;width:4px;height:3.6px;background:#e8eef8;opacity:0.8;border:0.5px solid rgba(40,60,120,0.6);box-sizing:border-box"></div>
<div style="left:432.6px;top:441.03px;width:15px;height:4.68px;opacity:0.85;color:#111;font:bold 4.68px/4.68px 'Liberation Mono';letter-spacing:0.29px;white-space:nowrap;overflow:hidden">UDA#4</div>
<div style="left:427.1px;top:445.45px;width:4px;height:3.6px;background:#e8eef8;opacity:0.8;border:0.5px solid rgba(40,60,120,0.6);box-sizing:border-box"></div>
<div style="left:432.6px;top:445.48px;width:15px;height:4.68px;opacity:0.85;color:#111;font:bold 4.68px/4.68px 'Liberation Mono';letter-spacing:0.29px;white-space:nowrap;overflow:hidden">FANZW</div>
<div style="left:427.1px;top:449.9px;width:4px;height:3.6px;background:#e8eef8;opacity:0.8;border:0.5px solid rgba(40,60,120,0.6);box-sizing:border-box"></div>
<div style="left:432.6px;top:449.93px;width:13px;height:4.68px;opacity:0.85;color:#111;font:bold 4.68px/4.68px 'Liberation Mono';letter-spacing:0.29px;white-space:nowrap;overflow:hidden">#F#W</div>
<div style="left:427.1px;top:454.34999999999997px;width:4px;height:3.6px;background:#e8eef8;opacity:0.8;border:0.5px solid rgba(40,60,120,0.6);box-sizing:border-box"></div>
<div style="left:432.6px;top:454.38px;width:13px;height:4.68px;opacity:0.85;color:#111;font:bold 4.68px/4.68px 'Liberation Mono';letter-spacing:0.29px;white-space:nowrap;overflow:hidden">DURM</div>
<div style="left:427.1px;top:458.8px;width:4px;height:3.6px;background:#e8eef8;opacity:0.8;border:0.5px solid rgba(40,60,120,0.6);box-sizing:border-box"></div>
<div style="left:432.6px;top:458.83px;width:15px;height:4.68px;opacity:0.85;color:#111;font:bold 4.68px/4.68px 'Liberation Mono';letter-spacing:0.29px;white-space:nowrap;overflow:hidden">#ZR7E</div>
<div style="left:427.1px;top:463.25px;width:4px;height:3.6px;background:#e8eef8;opacity:0.8;border:0.5px solid rgba(40,60,120,0.6);box-sizing:border-box"></div>
<div style="left:432.6px;top:463.28px;width:13px;height:4.68px;opacity:0.85;color:#111;font:bold 4.68px/4.68px 'Liberation Mono';letter-spacing:0.29px;white-space:nowrap;overflow:hidden">BZ74</div>
<div style="left:427.1px;top:467.7px;width:4px;height:3.6px;background:#e8eef8;opacity:0.8;border:0.5px solid rgba(40,60,120,0.6);box-sizing:border-box"></div>
<div style="left:432.6px;top:467.73px;width:19px;height:4.68px;opacity:0.85;color:#111;font:bold 4.68px/4.68px 'Liberation Mono';letter-spacing:0.29px;white-space:nowrap;overflow:hidden">H@EH7@</div>
<div style="left:427.1px;top:472.15px;width:4px;height:3.6px;background:#e8eef8;opacity:0.8;border:0.5px solid rgba(40,60,120,0.6);box-sizing:border-box"></div>
<div style="left:432.6px;top:472.18px;width:13px;height:4.68px;opacity:0.85;color:#111;font:bold 4.68px/4.68px 'Liberation Mono';letter-spacing:0.29px;white-space:nowrap;overflow:hidden">FUHM</div>
<div style="left:427.1px;top:476.59999999999997px;width:4px;height:3.6px;background:#e8eef8;opacity:0.8;border:0.5px solid rgba(40,60,120,0.6);box-sizing:border-box"></div>
<div style="left:432.6px;top:476.63px;width:17px;height:4.68px;opacity:0.85;color:#111;font:bold 4.68px/4.68px 'Liberation Mono';letter-spacing:0.29px;white-space:nowrap;overflow:hidden">KA@EE</div>
<div style="left:427.1px;top:481.05px;width:4px;height:3.6px;background:#e8eef8;opacity:0.8;border:0.5px solid rgba(40,60,120,0.6);box-sizing:border-box"></div>
<div style="left:432.6px;top:481.08px;width:15px;height:4.68px;opacity:0.85;color:#111;font:bold 4.68px/4.68px 'Liberation Mono';letter-spacing:0.29px;white-space:nowrap;overflow:hidden">FAWFZ</div>
<div style="left:422.8px;top:485.2px;width:4px;height:3.6px;background:#6a7ad8;opacity:0.8;border:0.5px solid rgba(40,60,120,0.6);box-sizing:border-box"></div>
<div style="left:428.3px;top:485.23px;width:7px;height:4.68px;opacity:0.85;color:#111;font:bold 4.68px/4.68px 'Liberation Mono';letter-spacing:0.29px;white-space:nowrap;overflow:hidden">E7</div>
<div style="left:427.1px;top:489.7px;width:4px;height:3.6px;background:#f0d070;opacity:0.8;border:0.5px solid rgba(40,60,120,0.6);box-sizing:border-box"></div>
<div style="left:432.6px;top:489.73px;width:15px;height:4.68px;opacity:0.85;color:#111;font:bold 4.68px/4.68px 'Liberation Mono';letter-spacing:0.29px;white-space:nowrap;overflow:hidden">MAW4Z</div>
<div style="left:431.4px;top:494.0px;width:4px;height:3.6px;background:#9ad090;opacity:0.8;border:0.5px solid rgba(40,60,120,0.6);box-sizing:border-box"></div>
<div style="left:436.9px;top:494.03px;width:6px;height:4.68px;opacity:0.85;color:#111;font:bold 4.68px/4.68px 'Liberation Mono';letter-spacing:0.29px;white-space:nowrap;overflow:hidden">#K</div>
<div style="left:431.4px;top:498.3px;width:4px;height:3.6px;background:#6a8ad8;opacity:0.8;border:0.5px solid rgba(40,60,120,0.6);box-sizing:border-box"></div>
<div style="left:436.9px;top:498.33px;width:6px;height:4.68px;opacity:0.85;color:#111;font:bold 4.68px/4.68px 'Liberation Mono';letter-spacing:0.29px;white-space:nowrap;overflow:hidden">XU</div>
<div style="left:431.4px;top:502.7px;width:4px;height:3.6px;background:#c0c8e0;opacity:0.8;border:0.5px solid rgba(40,60,120,0.6);box-sizing:border-box"></div>
<div style="left:436.9px;top:502.73px;width:6px;height:4.68px;opacity:0.85;color:#111;font:bold 4.68px/4.68px 'Liberation Mono';letter-spacing:0.29px;white-space:nowrap;overflow:hidden">BZ</div>
<div style="left:427.1px;top:507.0px;width:4px;height:3.6px;background:#f0d070;opacity:0.8;border:0.5px solid rgba(40,60,120,0.6);box-sizing:border-box"></div>
<div style="left:432.6px;top:507.03px;width:9px;height:4.68px;opacity:0.85;color:#111;font:bold 4.68px/4.68px 'Liberation Mono';letter-spacing:0.29px;white-space:nowrap;overflow:hidden">HHR</div>
<div style="left:431.4px;top:511.3px;width:4px;height:3.6px;background:#b8e0b0;opacity:0.8;border:0.5px solid rgba(40,60,120,0.6);box-sizing:border-box"></div>
<div style="left:436.9px;top:511.33px;width:15px;height:4.68px;opacity:0.85;color:#111;font:bold 4.68px/4.68px 'Liberation Mono';letter-spacing:0.29px;white-space:nowrap;overflow:hidden">4ARXR</div>
<div style="left:431.4px;top:515.7px;width:4px;height:3.6px;background:#f0e8c0;opacity:0.8;border:0.5px solid rgba(40,60,120,0.6);box-sizing:border-box"></div>
<div style="left:436.9px;top:515.73px;width:14px;height:4.68px;opacity:0.85;color:#111;font:bold 4.68px/4.68px 'Liberation Mono';letter-spacing:0.29px;white-space:nowrap;overflow:hidden">FBHD</div>
<div style="left:422.8px;top:520.2px;width:4px;height:3.6px;background:#7a90c8;opacity:0.8;border:0.5px solid rgba(40,60,120,0.6);box-sizing:border-box"></div>
<div style="left:428.3px;top:520.23px;width:7px;height:4.68px;opacity:0.85;color:#111;font:bold 4.68px/4.68px 'Liberation Mono';letter-spacing:0.29px;white-space:nowrap;overflow:hidden">AH</div>
<div style="left:427.1px;top:524.2px;width:4px;height:3.6px;background:#6ac070;opacity:0.8;border:0.5px solid rgba(40,60,120,0.6);box-sizing:border-box"></div>
<div style="left:432.6px;top:524.23px;width:6px;height:4.68px;opacity:0.85;color:#111;font:bold 4.68px/4.68px 'Liberation Mono';letter-spacing:0.29px;white-space:nowrap;overflow:hidden">NM</div>
<div style="left:421px;top:358px;width:0.5px;height:165px;background:repeating-linear-gradient(#aaa 0 0.5px,transparent 0.5px 1.5px)"></div>
<div style="left:474.5px;top:339.5px;width:262.5px;height:137.3px;background:#5f5f5f"></div>
<div style="left:477px;top:341.3px;width:197.5px;height:118.3px;background:#250a56"></div>
<div style="left:489px;top:348.7px;width:72px;height:106px;background:#3a2090"></div>
<div style="left:501px;top:345px;width:50px;height:8.5px;background:linear-gradient(90deg,#6a4fe0,#4a46c8);border-radius:4px"></div>
<div style="left:500px;top:344px;width:8px;height:9.5px;background:#b9a8f0;border-radius:50%"></div>
<div style="left:543px;top:344px;width:8px;height:9.5px;background:#a898e8;clip-path:polygon(50% 0,100% 100%,0 100%)"></div>
<div style="left:510px;top:347.05px;width:15px;height:5.40px;opacity:1.00;color:#fff;font:bold 5.40px/5.40px 'Liberation Mono';letter-spacing:0.26px;white-space:nowrap;overflow:hidden">H7DE</div>
<div style="left:527px;top:347.05px;width:13px;height:5.40px;opacity:0.75;color:#d8d0ff;font:bold 5.40px/5.40px 'Liberation Mono';letter-spacing:0.26px;white-space:nowrap;overflow:hidden">AXH4</div>
<div style="left:505px;top:356.50px;width:43px;height:3.60px;opacity:0.62;color:#c8b8f0;font:bold 3.60px/3.60px 'Liberation Mono';letter-spacing:0.94px;white-space:nowrap;overflow:hidden">WFK@H7XDFKAKWX</div>
<div style="left:491px;top:361px;width:20px;height:26px;background:#fcefe3"></div>
<div style="left:491px;top:382px;width:20px;height:5px;background:#f3b98a"></div>
<div style="left:496.5px;top:369.5px;width:9px;height:8px;background:#e8905a;border-radius:45% 45% 40% 40%"></div>
<div style="left:498.5px;top:366.5px;width:5px;height:3px;background:#e8905a;clip-path:polygon(0 0,100% 0,70% 100%,30% 100%)"></div>
<div style="left:533.4px;top:359px;width:0.7px;height:29px;background:#e6d2c0"></div>
<div style="left:534.4px;top:389px;width:0.7px;height:30px;background:#e6d2c0"></div>
<div style="left:512.4px;top:389px;width:0.7px;height:30px;background:#e6d2c0"></div>
<div style="left:495px;top:363.82px;width:13px;height:4.32px;opacity:0.75;color:#6a4a3a;font:bold 4.32px/4.32px 'Liberation Mono';letter-spacing:0.21px;white-space:nowrap;overflow:hidden">MAXU</div>
<div style="left:494px;top:382.82px;width:15px;height:4.32px;opacity:0.75;color:#6a3a20;font:bold 4.32px/4.32px 'Liberation Mono';letter-spacing:0.21px;white-space:nowrap;overflow:hidden">AAMKK</div>
<div style="left:513px;top:359px;width:20.5px;height:29px;background:#fcefe3"></div>
<div style="left:513px;top:383px;width:20.5px;height:5px;background:#f3b98a"></div>
<div style="left:534px;top:359px;width:23px;height:29px;background:#fcefe3"></div>
<div style="left:534px;top:383px;width:23px;height:5px;background:#f3b98a"></div>
<div style="left:489px;top:389px;width:23px;height:30px;background:#fcefe3"></div>
<div style="left:489px;top:413.5px;width:23px;height:5.5px;background:#f3b98a"></div>
<div style="left:513px;top:389px;width:21.5px;height:30px;background:#fcefe3"></div>
<div style="left:513px;top:413.5px;width:21.5px;height:5.5px;background:#f3b98a"></div>
<div style="left:535px;top:389px;width:22px;height:30px;background:#fcefe3"></div>
<div style="left:535px;top:413.5px;width:22px;height:5.5px;background:#f3b98a"></div>
<div style="left:515px;top:362.86px;width:18px;height:4.14px;opacity:0.75;color:#5a3a2a;font:bold 4.14px/4.14px 'Liberation Mono';letter-spacing:0.42px;white-space:nowrap;overflow:hidden">UXAX7@</div>
<div style="left:536px;top:362.86px;width:20px;height:4.14px;opacity:0.75;color:#5a3a2a;font:bold 4.14px/4.14px 'Liberation Mono';letter-spacing:0.42px;white-space:nowrap;overflow:hidden">KEZAXHR</div>
<div style="left:491px;top:392.86px;width:20px;height:4.14px;opacity:0.75;color:#5a3a2a;font:bold 4.14px/4.14px 'Liberation Mono';letter-spacing:0.42px;white-space:nowrap;overflow:hidden">4ZH#U4F</div>
<div style="left:515px;top:392.86px;width:19px;height:4.14px;opacity:0.75;color:#5a3a2a;font:bold 4.14px/4.14px 'Liberation Mono';letter-spacing:0.42px;white-space:nowrap;overflow:hidden">K74XRN</div>
<div style="left:537px;top:392.86px;width:19px;height:4.14px;opacity:0.75;color:#5a3a2a;font:bold 4.14px/4.14px 'Liberation Mono';letter-spacing:0.42px;white-space:nowrap;overflow:hidden">#BBHMW</div>
<div style="left:517.5px;top:370.77px;width:3.5px;height:4.50px;opacity:0.75;color:#e8905a;font:bold 4.50px/4.50px 'Liberation Mono';letter-spacing:0.00px;white-space:nowrap;overflow:hidden">D</div>
<div style="left:521.5px;top:366px;font-size:9.5px;line-height:10px;color:#ec9a66;font-family:Liberation Sans,sans-serif;letter-spacing:-0.6px">1</div>
<div style="left:527.2px;top:370.91px;width:4.5px;height:3.96px;opacity:0.62;color:#e8905a;font:bold 3.96px/3.96px 'Liberation Mono';letter-spacing:-0.08px;white-space:nowrap;overflow:hidden">KX</div>
<div style="left:539.5px;top:370.77px;width:3.5px;height:4.50px;opacity:0.75;color:#e8905a;font:bold 4.50px/4.50px 'Liberation Mono';letter-spacing:0.00px;white-space:nowrap;overflow:hidden">K</div>
<div style="left:543.5px;top:366px;font-size:9.5px;line-height:10px;color:#ec9a66;font-family:Liberation Sans,sans-serif;letter-spacing:-0.6px">7</div>
<div style="left:549.2px;top:370.91px;width:4.5px;height:3.96px;opacity:0.62;color:#e8905a;font:bold 3.96px/3.96px 'Liberation Mono';letter-spacing:-0.08px;white-space:nowrap;overflow:hidden">77</div>
<div style="left:492px;top:401.27px;width:3.5px;height:4.50px;opacity:0.75;color:#e8905a;font:bold 4.50px/4.50px 'Liberation Mono';letter-spacing:0.00px;white-space:nowrap;overflow:hidden">K</div>
<div style="left:496px;top:396.5px;font-size:9.5px;line-height:10px;color:#ec9a66;font-family:Liberation Sans,sans-serif;letter-spacing:-0.6px">30</div>
<div style="left:506.9px;top:401.41px;width:4.5px;height:3.96px;opacity:0.62;color:#e8905a;font:bold 3.96px/3.96px 'Liberation Mono';letter-spacing:-0.08px;white-space:nowrap;overflow:hidden">7X</div>
<div style="left:515px;top:401.27px;width:3.5px;height:4.50px;opacity:0.75;color:#e8905a;font:bold 4.50px/4.50px 'Liberation Mono';letter-spacing:0.00px;white-space:nowrap;overflow:hidden">H</div>
<div style="left:519px;top:396.5px;font-size:9.5px;line-height:10px;color:#ec9a66;font-family:Liberation Sans,sans-serif;letter-spacing:-0.6px">90</div>
<div style="left:529.9px;top:401.41px;width:4.5px;height:3.96px;opacity:0.62;color:#e8905a;font:bold 3.96px/3.96px 'Liberation Mono';letter-spacing:-0.08px;white-space:nowrap;overflow:hidden">FW</div>
<div style="left:535px;top:401.27px;width:3.5px;height:4.50px;opacity:0.75;color:#e8905a;font:bold 4.50px/4.50px 'Liberation Mono';letter-spacing:0.00px;white-space:nowrap;overflow:hidden">D</div>
<div style="left:539px;top:396.5px;font-size:9.5px;line-height:10px;color:#ec9a66;font-family:Liberation Sans,sans-serif;letter-spacing:-0.6px">360</div>
<div style="left:553px;top:401.41px;width:4.5px;height:3.96px;opacity:0.62;color:#e8905a;font:bold 3.96px/3.96px 'Liberation Mono';letter-spacing:-0.08px;white-space:nowrap;overflow:hidden">B7</div>
<div style="left:515px;top:383.41px;width:18px;height:3.96px;opacity:0.69;color:#5a3a2a;font:bold 3.96px/3.96px 'Liberation Mono';letter-spacing:0.52px;white-space:nowrap;overflow:hidden">@7ARWR</div>
<div style="left:536px;top:383.41px;width:20px;height:3.96px;opacity:0.69;color:#5a3a2a;font:bold 3.96px/3.96px 'Liberation Mono';letter-spacing:0.52px;white-space:nowrap;overflow:hidden">4KRMURU</div>
<div style="left:491px;top:414.41px;width:20px;height:3.96px;opacity:0.69;color:#5a3a2a;font:bold 3.96px/3.96px 'Liberation Mono';letter-spacing:0.52px;white-space:nowrap;overflow:hidden">4A@MKDA</div>
<div style="left:515px;top:414.41px;width:19px;height:3.96px;opacity:0.69;color:#5a3a2a;font:bold 3.96px/3.96px 'Liberation Mono';letter-spacing:0.52px;white-space:nowrap;overflow:hidden">DD4XRE</div>
<div style="left:537px;top:414.41px;width:19px;height:3.96px;opacity:0.69;color:#5a3a2a;font:bold 3.96px/3.96px 'Liberation Mono';letter-spacing:0.52px;white-space:nowrap;overflow:hidden">4RMZWD</div>
<div style="left:492.7px;top:425.6px;width:63.3px;height:23px;background:linear-gradient(90deg,#4c5cf0,#7040dc 60%,#3a2068 66%,#2a1c44)"></div>
<div style="left:495px;top:427.82px;width:11px;height:4.32px;opacity:0.88;color:#fff;font:bold 4.32px/4.32px 'Liberation Mono';letter-spacing:0.31px;white-space:nowrap;overflow:hidden">@NN4</div>
<div style="left:495px;top:432.09px;width:29px;height:3.24px;opacity:0.50;color:#ddd;font:bold 3.24px/3.24px 'Liberation Mono';letter-spacing:0.96px;white-space:nowrap;overflow:hidden">@RMXBH#7FX</div>
<div style="left:500px;top:436.5px;width:3px;height:3px;background:#fff;opacity:0.7"></div>
<div style="left:497px;top:442.00px;width:10px;height:3.60px;opacity:0.62;color:#fff;font:bold 3.60px/3.60px 'Liberation Mono';letter-spacing:0.54px;white-space:nowrap;overflow:hidden">DEMR</div>
<div style="left:512px;top:436.5px;width:3px;height:3px;background:#fff;opacity:0.7"></div>
<div style="left:509px;top:442.00px;width:10px;height:3.60px;opacity:0.62;color:#fff;font:bold 3.60px/3.60px 'Liberation Mono';letter-spacing:0.54px;white-space:nowrap;overflow:hidden">4NEN</div>
<div style="left:523px;top:436.5px;width:3px;height:3px;background:#fff;opacity:0.7"></div>
<div style="left:520px;top:442.00px;width:10px;height:3.60px;opacity:0.62;color:#fff;font:bold 3.60px/3.60px 'Liberation Mono';letter-spacing:0.54px;white-space:nowrap;overflow:hidden">WKND</div>
<div style="left:533px;top:429.82px;width:17px;height:4.32px;opacity:0.88;color:#fff;font:bold 4.32px/4.32px 'Liberation Mono';letter-spacing:0.31px;white-space:nowrap;overflow:hidden">N7NKBX</div>
<div style="left:533px;top:434.09px;width:21px;height:3.24px;opacity:0.50;color:#ccc;font:bold 3.24px/3.24px 'Liberation Mono';letter-spacing:0.96px;white-space:nowrap;overflow:hidden">4Z7WFEH</div>
<div style="left:540px;top:440px;width:12px;height:5px;border:0.5px solid #888;box-sizing:border-box"></div>
<div style="left:595px;top:343.3px;width:61px;height:13.5px;background:#24233a"></div>
<svg style="position:absolute;left:596px;top:345px" width="32" height="10"><g stroke="#f2f2f2" stroke-width="0.8" fill="none" opacity="0.9"><path d="M2.5 0.5 V9.5 M2.5 3.5 L5.5 5"/><path d="M8.5 1 H14 V5.5 H8.5 Z M8.5 3.2 H14 M11.2 1 V9 M8 7.2 H14.5 M7.5 9.3 H15"/><path d="M16.5 2 H18.5 V6 H16.5 Z M20 1.5 V9 M19 4 H21.5 M22.5 1 V9 M21.5 3 H24 M21.8 6 L24 5"/><path d="M25 1.5 H31 L30 3.5 M26.5 4 L27.5 5 M26 6 H31.5 M28.5 3 L26 9.5 M28.5 6.5 L31.5 9.5"/></g></svg>
<div style="left:630px;top:347.00px;width:25px;height:3.60px;opacity:0.75;color:#ddd;font:bold 3.60px/3.60px 'Liberation Mono';letter-spacing:0.74px;white-space:nowrap;overflow:hidden">BR744HK#</div>
<div style="left:630px;top:351.50px;width:25px;height:3.60px;opacity:0.75;color:#ddd;font:bold 3.60px/3.60px 'Liberation Mono';letter-spacing:0.74px;white-space:nowrap;overflow:hidden">U7W@ZH@7</div>
<div style="left:578.3px;top:375px;width:84.5px;height:26px;background:#d8d4ce"></div>
<div style="left:597px;top:386.05px;width:43px;height:5.40px;opacity:1.00;color:#fff;font:bold 5.40px/5.40px 'Liberation Mono';letter-spacing:0.46px;white-space:nowrap;overflow:hidden">MZW4@FXWM4RZ</div>
<div style="left:577.3px;top:374px;width:2px;height:2px;background:#4ccc4c;border-radius:50%"></div>
<div style="left:619.5px;top:374px;width:2px;height:2px;background:#4ccc4c;border-radius:50%"></div>
<div style="left:661.8px;top:374px;width:2px;height:2px;background:#4ccc4c;border-radius:50%"></div>
<div style="left:577.3px;top:387px;width:2px;height:2px;background:#4ccc4c;border-radius:50%"></div>
<div style="left:661.8px;top:387px;width:2px;height:2px;background:#4ccc4c;border-radius:50%"></div>
<div style="left:577.3px;top:400px;width:2px;height:2px;background:#4ccc4c;border-radius:50%"></div>
<div style="left:619.5px;top:400px;width:2px;height:2px;background:#4ccc4c;border-radius:50%"></div>
<div style="left:661.8px;top:400px;width:2px;height:2px;background:#4ccc4c;border-radius:50%"></div>
<div style="left:582.8px;top:443px;width:82px;height:14.5px;background:#151530;border-radius:4px"></div>
<div style="left:586px;top:444.5px;width:53px;height:11px;background:#fff"></div>
<div style="left:639px;top:444.5px;width:23px;height:11px;background:#cfcfcf"></div>
<div style="left:646px;top:448.32px;width:7px;height:4.32px;opacity:0.75;color:#eee;font:bold 4.32px/4.32px 'Liberation Mono';letter-spacing:0.31px;white-space:nowrap;overflow:hidden">NK</div>
<div style="left:667px;top:429.5px;width:6px;height:4.8px;background:#e8eef8"></div>
<div style="left:669px;top:430.5px;width:2px;height:3px;background:#333"></div>
<div style="left:660px;top:455px;width:5px;height:5px;background:#ddd;border:0.6px solid #333;box-sizing:border-box"></div>
<div style="left:666px;top:455px;width:6px;height:5px;background:#e8eef8"></div>
<div style="left:496px;top:462.14px;width:89px;height:5.04px;opacity:0.88;color:#e03030;font:bold 5.04px/5.04px 'Liberation Mono';letter-spacing:0.38px;white-space:nowrap;overflow:hidden">ZXMDBW@F7XBH7RM4#K4FBEAX4#</div>
<div style="left:496px;top:467.64px;width:57px;height:5.04px;opacity:0.88;color:#e03030;font:bold 5.04px/5.04px 'Liberation Mono';letter-spacing:0.38px;white-space:nowrap;overflow:hidden">@#HXZNKNR#4747@7X</div>
<svg style="position:absolute;left:0;top:0" width="800" height="626"><line x1="455" y1="351" x2="465" y2="363" stroke="#e02a2a" stroke-width="1"/><polygon points="453,348.5 458.5,352 454.5,354.5" fill="#e02a2a"/><line x1="452" y1="410" x2="496" y2="461" stroke="#e02a2a" stroke-width="1"/><polygon points="450.5,408 456,411 452,414" fill="#e02a2a"/><line x1="549" y1="390.5" x2="576" y2="387.5" stroke="#e02a2a" stroke-width="1"/><polygon points="578.5,387 572.5,385 573.5,390" fill="#e02a2a"/></svg>
<div style="left:737px;top:339.5px;width:4.5px;height:137.3px;background:#ececec"></div>
<div style="left:737.5px;top:340px;width:3.5px;height:4px;background:#d8d8d8;border:0.4px solid #999;box-sizing:border-box"></div>
<div style="left:737.5px;top:472.5px;width:3.5px;height:4px;background:#d8d8d8;border:0.4px solid #999;box-sizing:border-box"></div>
<div style="left:741.5px;top:339.5px;width:50.5px;height:4.5px;background:linear-gradient(#e0e0e0,#c8c8c8)"></div>
<div style="left:743px;top:340.32px;width:9px;height:4.32px;opacity:0.88;color:#111;font:bold 4.32px/4.32px 'Liberation Mono';letter-spacing:0.31px;white-space:nowrap;overflow:hidden">KEM</div>
<div style="left:779px;top:340.32px;width:11px;height:4.32px;opacity:0.75;color:#333;font:bold 4.32px/4.32px 'Liberation Mono';letter-spacing:0.21px;white-space:nowrap;overflow:hidden">XXUU</div>
<div style="left:741.5px;top:344px;width:50.5px;height:7px;background:#f8f8f8"></div>
<div style="left:745px;top:345.77px;width:9px;height:4.50px;opacity:0.75;color:#235;font:bold 4.50px/4.50px 'Liberation Mono';letter-spacing:0.30px;white-space:nowrap;overflow:hidden">AW4</div>
<div style="left:757px;top:345.77px;width:6px;height:4.50px;opacity:0.75;color:#235;font:bold 4.50px/4.50px 'Liberation Mono';letter-spacing:0.30px;white-space:nowrap;overflow:hidden">#D</div>
<div style="left:765px;top:345.77px;width:13px;height:4.50px;opacity:0.75;color:#333;font:bold 4.50px/4.50px 'Liberation Mono';letter-spacing:0.30px;white-space:nowrap;overflow:hidden">XM4H</div>
<div style="left:741.5px;top:351px;width:50.5px;height:176px;background:#fff"></div>
<div style="left:777px;top:352px;width:7px;height:4.5px;background:#d8d8d8;border:0.4px solid #888;box-sizing:border-box"></div>
<div style="left:784px;top:352px;width:7px;height:4.5px;background:#eee;border:0.4px solid #aaa;box-sizing:border-box"></div>
<div style="left:745.5px;top:359.0px;width:3.5px;height:3.5px;background:#999;opacity:0.6"></div>
<div style="left:749.5px;top:359.23px;width:15px;height:4.68px;opacity:0.62;color:#222;font:bold 4.68px/4.68px 'Liberation Mono';letter-spacing:0.19px;white-space:nowrap;overflow:hidden">B4FEM</div>
<div style="left:745.5px;top:365.0px;width:3.5px;height:3.5px;background:#aaa;opacity:0.6"></div>
<div style="left:749.5px;top:365.23px;width:14px;height:4.68px;opacity:0.62;color:#222;font:bold 4.68px/4.68px 'Liberation Mono';letter-spacing:0.19px;white-space:nowrap;overflow:hidden">#Z#@E</div>
<div style="left:745.5px;top:371.0px;width:3.5px;height:3.5px;background:#557;opacity:0.6"></div>
<div style="left:749.5px;top:371.23px;width:10px;height:4.68px;opacity:0.62;color:#222;font:bold 4.68px/4.68px 'Liberation Mono';letter-spacing:0.19px;white-space:nowrap;overflow:hidden">UWE</div>
<div style="left:745.5px;top:377.0px;width:3.5px;height:3.5px;background:#555;opacity:0.6"></div>
<div style="left:749.5px;top:377.23px;width:11px;height:4.68px;opacity:0.62;color:#222;font:bold 4.68px/4.68px 'Liberation Mono';letter-spacing:0.19px;white-space:nowrap;overflow:hidden">#WX@</div>
<div style="left:745.5px;top:383.0px;width:3.5px;height:3.5px;background:#3ab03a;opacity:0.6"></div>
<div style="left:749.5px;top:383.23px;width:9px;height:4.68px;opacity:0.62;color:#222;font:bold 4.68px/4.68px 'Liberation Mono';letter-spacing:0.19px;white-space:nowrap;overflow:hidden">DUM</div>
<div style="left:745.5px;top:389.0px;width:3.5px;height:3.5px;background:#6a8;opacity:0.6"></div>
<div style="left:749.5px;top:389.23px;width:11px;height:4.68px;opacity:0.62;color:#222;font:bold 4.68px/4.68px 'Liberation Mono';letter-spacing:0.19px;white-space:nowrap;overflow:hidden">RRXH</div>
<div style="left:745.5px;top:395.0px;width:3.5px;height:3.5px;background:#5a8;opacity:0.6"></div>
<div style="left:749.5px;top:395.23px;width:11px;height:4.68px;opacity:0.62;color:#222;font:bold 4.68px/4.68px 'Liberation Mono';letter-spacing:0.19px;white-space:nowrap;overflow:hidden">NMFA</div>
<div style="left:745.5px;top:401.0px;width:3.5px;height:3.5px;background:#777;opacity:0.6"></div>
<div style="left:749.5px;top:401.23px;width:16px;height:4.68px;opacity:0.62;color:#222;font:bold 4.68px/4.68px 'Liberation Mono';letter-spacing:0.19px;white-space:nowrap;overflow:hidden">NH#DN</div>
<div style="left:745.5px;top:407.0px;width:3.5px;height:3.5px;background:#667;opacity:0.6"></div>
<div style="left:749.5px;top:407.23px;width:16px;height:4.68px;opacity:0.62;color:#222;font:bold 4.68px/4.68px 'Liberation Mono';letter-spacing:0.19px;white-space:nowrap;overflow:hidden">DUKN#</div>
<div style="left:745.5px;top:413.0px;width:3.5px;height:3.5px;background:#89a;opacity:0.6"></div>
<div style="left:749.5px;top:413.23px;width:16px;height:4.68px;opacity:0.62;color:#222;font:bold 4.68px/4.68px 'Liberation Mono';letter-spacing:0.19px;white-space:nowrap;overflow:hidden">@UFND</div>
<div style="left:745.5px;top:419.0px;width:3.5px;height:3.5px;background:#777;opacity:0.6"></div>
<div style="left:749.5px;top:419.23px;width:13px;height:4.68px;opacity:0.62;color:#222;font:bold 4.68px/4.68px 'Liberation Mono';letter-spacing:0.19px;white-space:nowrap;overflow:hidden">ZDFH</div>
<div style="left:745.5px;top:425.0px;width:3.5px;height:3.5px;background:#999;opacity:0.6"></div>
<div style="left:749.5px;top:425.23px;width:16px;height:4.68px;opacity:0.62;color:#222;font:bold 4.68px/4.68px 'Liberation Mono';letter-spacing:0.19px;white-space:nowrap;overflow:hidden">@D@FE</div>
<div style="left:745.5px;top:431.0px;width:3.5px;height:3.5px;background:#999;opacity:0.6"></div>
<div style="left:749.5px;top:431.23px;width:14px;height:4.68px;opacity:0.62;color:#222;font:bold 4.68px/4.68px 'Liberation Mono';letter-spacing:0.19px;white-space:nowrap;overflow:hidden">NFKU7</div>
<div style="left:745.5px;top:437.0px;width:3.5px;height:3.5px;background:#99a;opacity:0.6"></div>
<div style="left:749.5px;top:437.23px;width:14px;height:4.68px;opacity:0.62;color:#222;font:bold 4.68px/4.68px 'Liberation Mono';letter-spacing:0.19px;white-space:nowrap;overflow:hidden">MUNDF</div>
<div style="left:745.5px;top:443.0px;width:3.5px;height:3.5px;background:#99a;opacity:0.6"></div>
<div style="left:749.5px;top:443.23px;width:12px;height:4.68px;opacity:0.62;color:#222;font:bold 4.68px/4.68px 'Liberation Mono';letter-spacing:0.19px;white-space:nowrap;overflow:hidden">NRER</div>
<div style="left:745.5px;top:449.0px;width:3.5px;height:3.5px;background:#999;opacity:0.6"></div>
<div style="left:749.5px;top:449.23px;width:12px;height:4.68px;opacity:0.62;color:#222;font:bold 4.68px/4.68px 'Liberation Mono';letter-spacing:0.19px;white-space:nowrap;overflow:hidden">BFKK</div>
<div style="left:745.5px;top:455.0px;width:3.5px;height:3.5px;background:#999;opacity:0.6"></div>
<div style="left:749.5px;top:455.23px;width:11px;height:4.68px;opacity:0.62;color:#222;font:bold 4.68px/4.68px 'Liberation Mono';letter-spacing:0.19px;white-space:nowrap;overflow:hidden">ZNBR</div>
<div style="left:745.5px;top:461.0px;width:3.5px;height:3.5px;background:#99a;opacity:0.6"></div>
<div style="left:749.5px;top:461.23px;width:13px;height:4.68px;opacity:0.62;color:#222;font:bold 4.68px/4.68px 'Liberation Mono';letter-spacing:0.19px;white-space:nowrap;overflow:hidden">XRBH</div>
<div style="left:745.5px;top:467.0px;width:3.5px;height:3.5px;background:#777;opacity:0.6"></div>
<div style="left:749.5px;top:467.23px;width:13px;height:4.68px;opacity:0.62;color:#222;font:bold 4.68px/4.68px 'Liberation Mono';letter-spacing:0.19px;white-space:nowrap;overflow:hidden">X#W@</div>
<div style="left:741.5px;top:527px;width:50.5px;height:5px;background:#ececec"></div>
<div style="left:743px;top:527.82px;width:31px;height:4.32px;opacity:0.75;color:#333;font:bold 4.32px/4.32px 'Liberation Mono';letter-spacing:0.31px;white-space:nowrap;overflow:hidden">NAKU4N@BK44</div>
<div style="left:474.5px;top:477.5px;width:267px;height:11px;background:#f0f0f0"></div>
<div style="left:475px;top:478px;width:18px;height:6.5px;background:#fff;border:0.5px solid #999;box-sizing:border-box"></div>
<div style="left:493px;top:478px;width:16px;height:6.5px;background:#fff;border:0.5px solid #999;box-sizing:border-box"></div>
<div style="left:478px;top:479.82px;width:13px;height:4.32px;opacity:0.75;color:#223;font:bold 4.32px/4.32px 'Liberation Mono';letter-spacing:0.31px;white-space:nowrap;overflow:hidden">KAAN</div>
<div style="left:496px;top:479.82px;width:11px;height:4.32px;opacity:0.75;color:#223;font:bold 4.32px/4.32px 'Liberation Mono';letter-spacing:0.31px;white-space:nowrap;overflow:hidden">E#X@</div>
<div style="left:474.5px;top:488.2px;width:267px;height:5.6px;background:#cfcfcf;border-top:0.7px solid #666;border-bottom:0.7px solid #666;box-sizing:border-box"></div>
<div style="left:476px;top:487.62px;width:8px;height:4.32px;opacity:0.88;color:#222;font:bold 4.32px/4.32px 'Liberation Mono';letter-spacing:0.31px;white-space:nowrap;overflow:hidden">U@#</div>
<div style="left:474.5px;top:492.5px;width:267px;height:6px;background:#ebebeb"></div>
<div style="left:476px;top:492.3px;width:19px;height:5.5px;background:#f8f8f8;border:0.5px solid #999;box-sizing:border-box"></div>
<div style="left:479px;top:493.62px;width:15px;height:4.32px;opacity:0.81;color:#222;font:bold 4.32px/4.32px 'Liberation Mono';letter-spacing:0.31px;white-space:nowrap;overflow:hidden">U#4#@</div>
<div style="left:496px;top:492.3px;width:18px;height:5.5px;background:#f8f8f8;border:0.5px solid #999;box-sizing:border-box"></div>
<div style="left:499px;top:493.62px;width:14px;height:4.32px;opacity:0.81;color:#222;font:bold 4.32px/4.32px 'Liberation Mono';letter-spacing:0.31px;white-space:nowrap;overflow:hidden">UNAAB</div>
<div style="left:515px;top:492.3px;width:21px;height:5.5px;background:#f8f8f8;border:0.5px solid #999;box-sizing:border-box"></div>
<div style="left:518px;top:493.62px;width:17px;height:4.32px;opacity:0.81;color:#222;font:bold 4.32px/4.32px 'Liberation Mono';letter-spacing:0.31px;white-space:nowrap;overflow:hidden">HKBFH@</div>
<div style="left:537px;top:492.3px;width:20px;height:5.5px;background:#f8f8f8;border:0.5px solid #999;box-sizing:border-box"></div>
<div style="left:540px;top:493.62px;width:16px;height:4.32px;opacity:0.81;color:#222;font:bold 4.32px/4.32px 'Liberation Mono';letter-spacing:0.31px;white-space:nowrap;overflow:hidden">BRU4@</div>
<div style="left:558px;top:492.3px;width:18px;height:5.5px;background:#f8f8f8;border:0.5px solid #999;box-sizing:border-box"></div>
<div style="left:561px;top:493.62px;width:14px;height:4.32px;opacity:0.81;color:#222;font:bold 4.32px/4.32px 'Liberation Mono';letter-spacing:0.31px;white-space:nowrap;overflow:hidden">XAXZX</div>
<div style="left:474.5px;top:498px;width:267px;height:29px;background:#fff"></div>
<div style="left:476px;top:499.82px;width:11px;height:4.32px;opacity:0.88;color:#222;font:bold 4.32px/4.32px 'Liberation Mono';letter-spacing:0.31px;white-space:nowrap;overflow:hidden">ZK47</div>
<div style="left:488px;top:499.82px;width:25px;height:4.32px;opacity:0.75;color:#222;font:bold 4.32px/4.32px 'Liberation Mono';letter-spacing:1.31px;white-space:nowrap;overflow:hidden">DKHBDDU</div>
<div style="left:476px;top:504.32px;width:15px;height:4.32px;opacity:0.88;color:#222;font:bold 4.32px/4.32px 'Liberation Mono';letter-spacing:0.31px;white-space:nowrap;overflow:hidden">NHMBM</div>
<div style="left:476px;top:508.82px;width:61px;height:4.32px;opacity:0.75;color:#222;font:bold 4.32px/4.32px 'Liberation Mono';letter-spacing:0.41px;white-space:nowrap;overflow:hidden">KZHUB@XWWFZX4@WXEAKZ</div>
<div style="left:737px;top:498px;width:4.5px;height:29px;background:#ececec"></div>
<div style="left:417px;top:532px;width:375px;height:5.5px;background:#d8d8d8"></div>
<div style="left:418px;top:533.32px;width:31px;height:4.32px;opacity:0.69;color:#333;font:bold 4.32px/4.32px 'Liberation Mono';letter-spacing:0.41px;white-space:nowrap;overflow:hidden">UNKFFM#@HM</div>
<div style="left:450px;top:533.32px;width:13px;height:4.32px;opacity:0.69;color:#333;font:bold 4.32px/4.32px 'Liberation Mono';letter-spacing:0.41px;white-space:nowrap;overflow:hidden">DBKA</div>
<div style="left:466px;top:533.32px;width:5px;height:4.32px;opacity:0.69;color:#333;font:bold 4.32px/4.32px 'Liberation Mono';letter-spacing:0.41px;white-space:nowrap;overflow:hidden">#A</div>
<div style="left:482px;top:533.32px;width:13px;height:4.32px;opacity:0.69;color:#333;font:bold 4.32px/4.32px 'Liberation Mono';letter-spacing:0.41px;white-space:nowrap;overflow:hidden">RB@X</div>
<div style="left:500px;top:533.32px;width:17px;height:4.32px;opacity:0.69;color:#333;font:bold 4.32px/4.32px 'Liberation Mono';letter-spacing:0.41px;white-space:nowrap;overflow:hidden">74ZWZ7</div>
<div style="left:522px;top:533.32px;width:29px;height:4.32px;opacity:0.69;color:#333;font:bold 4.32px/4.32px 'Liberation Mono';letter-spacing:0.41px;white-space:nowrap;overflow:hidden">#4B#@MZWBM</div>
<div style="left:580px;top:533.32px;width:31px;height:4.32px;opacity:0.69;color:#333;font:bold 4.32px/4.32px 'Liberation Mono';letter-spacing:0.41px;white-space:nowrap;overflow:hidden">ZA4NHNA7UX</div>
<div style="left:616px;top:533.32px;width:31px;height:4.32px;opacity:0.69;color:#333;font:bold 4.32px/4.32px 'Liberation Mono';letter-spacing:0.41px;white-space:nowrap;overflow:hidden">BDN@KWK4XM</div>
<div style="left:650px;top:533.32px;width:45px;height:4.32px;opacity:0.69;color:#333;font:bold 4.32px/4.32px 'Liberation Mono';letter-spacing:0.41px;white-space:nowrap;overflow:hidden">#M@EM7ANDAWW7BW</div>
<div style="left:700px;top:533.32px;width:41px;height:4.32px;opacity:0.69;color:#333;font:bold 4.32px/4.32px 'Liberation Mono';letter-spacing:0.41px;white-space:nowrap;overflow:hidden">NKFAEKAEKM7EFH</div>
<div style="left:744px;top:533.32px;width:45px;height:4.32px;opacity:0.69;color:#333;font:bold 4.32px/4.32px 'Liberation Mono';letter-spacing:0.41px;white-space:nowrap;overflow:hidden">UBN4N#FEFHX4WMK</div>
</div></body></html>
